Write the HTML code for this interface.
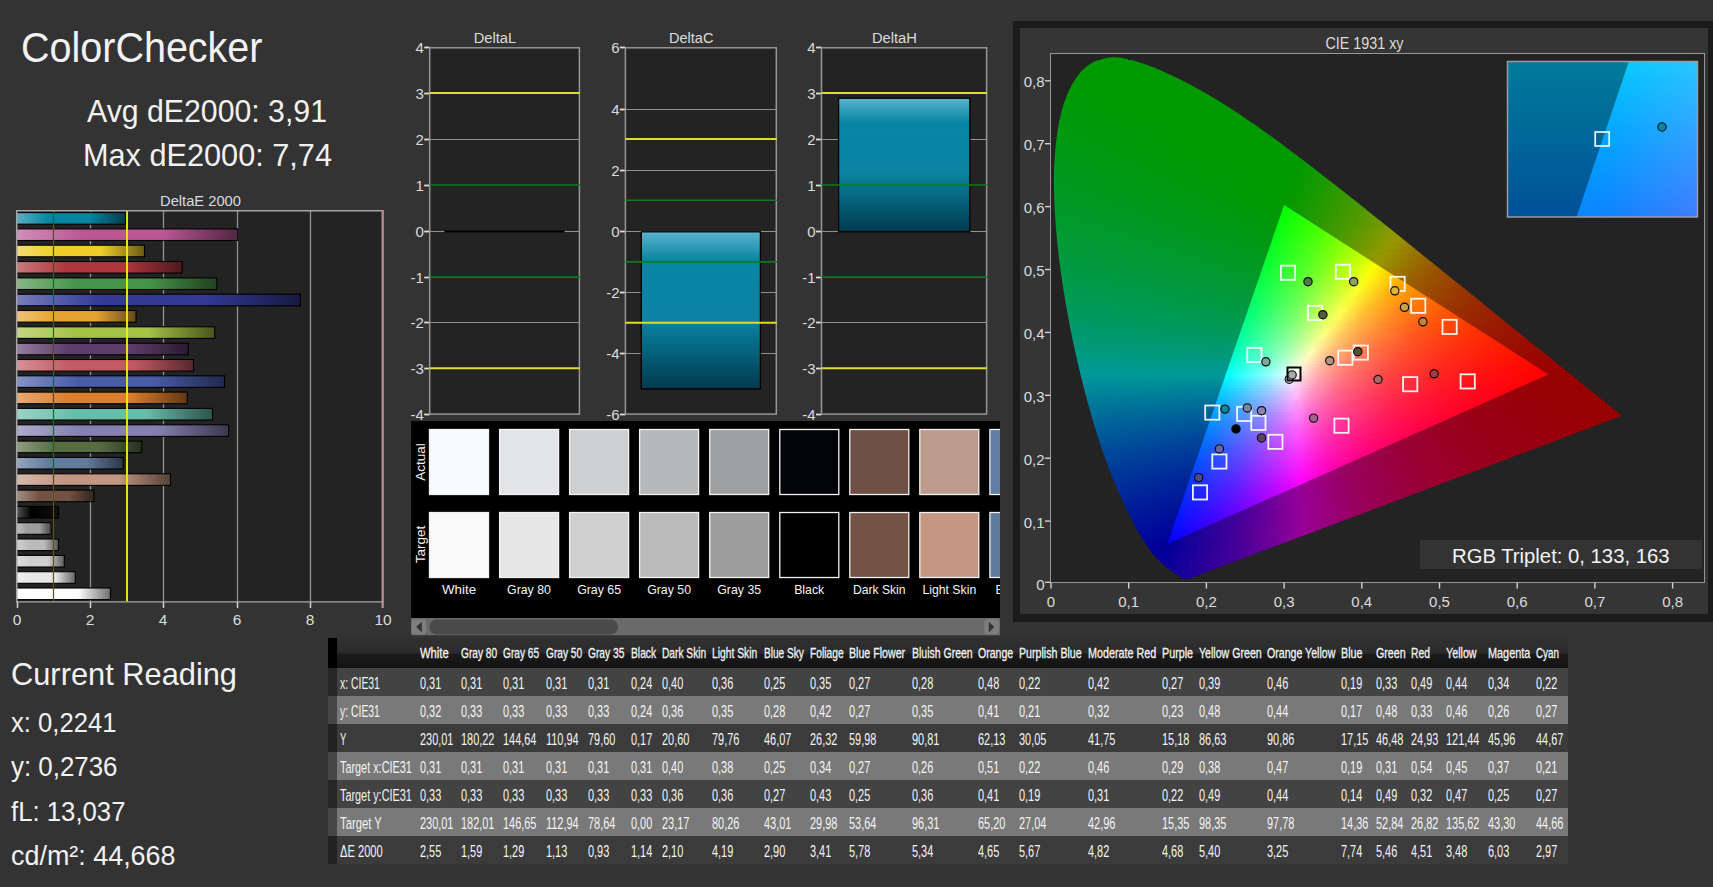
<!DOCTYPE html><html lang="en"><head><meta charset="utf-8"><title>ColorChecker</title><style>
html,body{margin:0;padding:0;background:#333333;}
body{width:1713px;height:887px;overflow:hidden;position:relative;font-family:"Liberation Sans", Arial, sans-serif;color:#f2f2f2;}
#app{position:absolute;left:0;top:0;width:1713px;height:887px;overflow:hidden;background:#333333;}
.t{position:absolute;white-space:nowrap;transform-origin:0 0;line-height:1;}
svg{position:absolute;left:0;top:0;}
svg text{font-family:"Liberation Sans", Arial, sans-serif;}
table.dt{position:absolute;left:328px;top:638px;border-collapse:collapse;table-layout:fixed;font-size:16.7px;color:#f4f4f4;}
table.dt td,table.dt th{padding:0;height:28px;text-align:left;font-weight:normal;overflow:visible;white-space:nowrap;line-height:28px;}
table.dt th{height:30px;line-height:30px;font-size:14.6px;-webkit-text-stroke:.3px #f4f4f4;}
table.dt span{display:inline-block;transform:scaleX(.655);transform-origin:0 50%;white-space:nowrap;position:relative;top:1.8px;}
table.dt th span{top:0;}
table.dt tr.h{background:linear-gradient(#313131 0,#2a2a2a 50%,#1b1b1b 54%,#121212 100%);}
table.dt tr.d{background:#434343;}
table.dt tr.d2{background:#3b3b3b;}
table.dt tr.l{background:#797979;}
table.dt td.rh,table.dt th.rh{box-shadow:inset 9px 0 0 rgba(0,0,0,.42);padding-left:12px;}
table.dt th.rh{box-shadow:inset 9px 0 0 #000;}
</style></head><body><div id="app"><svg width="1713" height="887" viewBox="0 0 1713 887"><rect x="1013" y="21" width="701" height="601" fill="#1b1b1b"/><rect x="1020" y="28" width="688" height="586" fill="#353535"/><rect x="1050.5" y="53.5" width="654" height="529" fill="#232323" stroke="#969696" stroke-width="1"/><g clip-path="url(#cl)" shape-rendering="crispEdges"><rect x="1101.2" y="57" width="26.3" height="3" fill="url(#o0)"/><rect x="1092.0" y="60" width="47.5" height="3" fill="url(#o1)"/><rect x="1086.4" y="63" width="62.9" height="3" fill="url(#o2)"/><rect x="1082.3" y="66" width="74.7" height="3" fill="url(#o3)"/><rect x="1079.1" y="69" width="84.8" height="3" fill="url(#o4)"/><rect x="1076.5" y="72" width="94.0" height="3" fill="url(#o5)"/><rect x="1074.2" y="75" width="102.8" height="3" fill="url(#o6)"/><rect x="1072.2" y="78" width="111.0" height="3" fill="url(#o7)"/><rect x="1070.3" y="81" width="118.8" height="3" fill="url(#o8)"/><rect x="1068.6" y="84" width="126.2" height="3" fill="url(#o9)"/><rect x="1067.1" y="87" width="133.2" height="3" fill="url(#o10)"/><rect x="1065.6" y="90" width="140.1" height="3" fill="url(#o11)"/><rect x="1064.3" y="93" width="146.6" height="3" fill="url(#o12)"/><rect x="1063.1" y="96" width="152.9" height="3" fill="url(#o13)"/><rect x="1061.9" y="99" width="159.0" height="3" fill="url(#o14)"/><rect x="1060.9" y="102" width="164.8" height="3" fill="url(#o15)"/><rect x="1060.0" y="105" width="170.5" height="3" fill="url(#o16)"/><rect x="1059.0" y="108" width="176.2" height="3" fill="url(#o17)"/><rect x="1058.3" y="111" width="181.5" height="3" fill="url(#o18)"/><rect x="1057.6" y="114" width="186.8" height="3" fill="url(#o19)"/><rect x="1056.9" y="117" width="191.9" height="3" fill="url(#o20)"/><rect x="1056.2" y="120" width="197.0" height="3" fill="url(#o21)"/><rect x="1055.7" y="123" width="201.9" height="3" fill="url(#o22)"/><rect x="1055.1" y="126" width="206.7" height="3" fill="url(#o23)"/><rect x="1054.6" y="129" width="211.5" height="3" fill="url(#o24)"/><rect x="1054.2" y="132" width="216.1" height="3" fill="url(#o25)"/><rect x="1053.8" y="135" width="220.6" height="3" fill="url(#o26)"/><rect x="1053.4" y="138" width="225.1" height="3" fill="url(#o27)"/><rect x="1053.0" y="141" width="229.6" height="3" fill="url(#o28)"/><rect x="1052.7" y="144" width="234.0" height="3" fill="url(#o29)"/><rect x="1052.4" y="147" width="238.3" height="3" fill="url(#o30)"/><rect x="1052.2" y="150" width="242.5" height="3" fill="url(#o31)"/><rect x="1051.9" y="153" width="246.8" height="3" fill="url(#o32)"/><rect x="1051.7" y="156" width="251.0" height="3" fill="url(#o33)"/><rect x="1051.5" y="159" width="255.0" height="3" fill="url(#o34)"/><rect x="1051.4" y="162" width="259.1" height="3" fill="url(#o35)"/><rect x="1051.2" y="165" width="263.2" height="3" fill="url(#o36)"/><rect x="1051.1" y="168" width="267.2" height="3" fill="url(#o37)"/><rect x="1051.0" y="171" width="271.2" height="3" fill="url(#o38)"/><rect x="1051.0" y="174" width="275.1" height="3" fill="url(#o39)"/><rect x="1050.9" y="177" width="279.0" height="3" fill="url(#o40)"/><rect x="1050.9" y="180" width="282.9" height="3" fill="url(#o41)"/><rect x="1050.9" y="183" width="286.7" height="3" fill="url(#o42)"/><rect x="1050.9" y="186" width="290.5" height="3" fill="url(#o43)"/><rect x="1051.0" y="189" width="294.2" height="3" fill="url(#o44)"/><rect x="1051.1" y="192" width="298.0" height="3" fill="url(#o45)"/><rect x="1051.1" y="195" width="301.7" height="3" fill="url(#o46)"/><rect x="1051.2" y="198" width="305.4" height="3" fill="url(#o47)"/><rect x="1051.4" y="201" width="309.0" height="3" fill="url(#o48)"/><rect x="1051.5" y="204" width="312.6" height="3" fill="url(#o49)"/><rect x="1051.6" y="207" width="316.2" height="3" fill="url(#o50)"/><rect x="1051.8" y="210" width="319.8" height="3" fill="url(#o51)"/><rect x="1052.0" y="213" width="323.4" height="3" fill="url(#o52)"/><rect x="1052.2" y="216" width="327.0" height="3" fill="url(#o53)"/><rect x="1052.4" y="219" width="330.5" height="3" fill="url(#o54)"/><rect x="1052.6" y="222" width="334.0" height="3" fill="url(#o55)"/><rect x="1052.8" y="225" width="337.6" height="3" fill="url(#o56)"/><rect x="1053.1" y="228" width="341.1" height="3" fill="url(#o57)"/><rect x="1053.3" y="231" width="344.5" height="3" fill="url(#o58)"/><rect x="1053.6" y="234" width="348.0" height="3" fill="url(#o59)"/><rect x="1053.9" y="237" width="351.5" height="3" fill="url(#o60)"/><rect x="1054.2" y="240" width="354.9" height="3" fill="url(#o61)"/><rect x="1054.5" y="243" width="358.3" height="3" fill="url(#o62)"/><rect x="1054.8" y="246" width="361.7" height="3" fill="url(#o63)"/><rect x="1055.1" y="249" width="365.1" height="3" fill="url(#o64)"/><rect x="1055.5" y="252" width="368.5" height="3" fill="url(#o65)"/><rect x="1055.8" y="255" width="371.9" height="3" fill="url(#o66)"/><rect x="1056.2" y="258" width="375.2" height="3" fill="url(#o67)"/><rect x="1056.6" y="261" width="378.5" height="3" fill="url(#o68)"/><rect x="1057.0" y="264" width="381.8" height="3" fill="url(#o69)"/><rect x="1057.4" y="267" width="385.2" height="3" fill="url(#o70)"/><rect x="1057.8" y="270" width="388.5" height="3" fill="url(#o71)"/><rect x="1058.2" y="273" width="391.8" height="3" fill="url(#o72)"/><rect x="1058.6" y="276" width="395.0" height="3" fill="url(#o73)"/><rect x="1059.1" y="279" width="398.3" height="3" fill="url(#o74)"/><rect x="1059.5" y="282" width="401.5" height="3" fill="url(#o75)"/><rect x="1060.0" y="285" width="404.8" height="3" fill="url(#o76)"/><rect x="1060.4" y="288" width="408.0" height="3" fill="url(#o77)"/><rect x="1060.9" y="291" width="411.3" height="3" fill="url(#o78)"/><rect x="1061.4" y="294" width="414.5" height="3" fill="url(#o79)"/><rect x="1061.9" y="297" width="417.7" height="3" fill="url(#o80)"/><rect x="1062.4" y="300" width="420.9" height="3" fill="url(#o81)"/><rect x="1062.9" y="303" width="424.1" height="3" fill="url(#o82)"/><rect x="1063.5" y="306" width="427.4" height="3" fill="url(#o83)"/><rect x="1064.0" y="309" width="430.5" height="3" fill="url(#o84)"/><rect x="1064.5" y="312" width="433.7" height="3" fill="url(#o85)"/><rect x="1065.1" y="315" width="436.9" height="3" fill="url(#o86)"/><rect x="1065.6" y="318" width="440.0" height="3" fill="url(#o87)"/><rect x="1066.2" y="321" width="443.2" height="3" fill="url(#o88)"/><rect x="1066.8" y="324" width="446.3" height="3" fill="url(#o89)"/><rect x="1067.4" y="327" width="449.4" height="3" fill="url(#o90)"/><rect x="1068.0" y="330" width="452.5" height="3" fill="url(#o91)"/><rect x="1068.6" y="333" width="455.6" height="3" fill="url(#o92)"/><rect x="1069.2" y="336" width="458.7" height="3" fill="url(#o93)"/><rect x="1069.8" y="339" width="461.8" height="3" fill="url(#o94)"/><rect x="1070.4" y="342" width="464.9" height="3" fill="url(#o95)"/><rect x="1071.1" y="345" width="467.9" height="3" fill="url(#o96)"/><rect x="1071.7" y="348" width="471.0" height="3" fill="url(#o97)"/><rect x="1072.4" y="351" width="474.1" height="3" fill="url(#o98)"/><rect x="1073.1" y="354" width="477.1" height="3" fill="url(#o99)"/><rect x="1073.8" y="357" width="480.1" height="3" fill="url(#o100)"/><rect x="1074.5" y="360" width="483.2" height="3" fill="url(#o101)"/><rect x="1075.2" y="363" width="486.2" height="3" fill="url(#o102)"/><rect x="1075.9" y="366" width="489.2" height="3" fill="url(#o103)"/><rect x="1076.6" y="369" width="492.3" height="3" fill="url(#o104)"/><rect x="1077.3" y="372" width="495.3" height="3" fill="url(#o105)"/><rect x="1078.1" y="375" width="498.2" height="3" fill="url(#o106)"/><rect x="1078.8" y="378" width="501.2" height="3" fill="url(#o107)"/><rect x="1079.5" y="381" width="504.1" height="3" fill="url(#o108)"/><rect x="1080.3" y="384" width="507.1" height="3" fill="url(#o109)"/><rect x="1081.1" y="387" width="510.0" height="3" fill="url(#o110)"/><rect x="1081.8" y="390" width="513.0" height="3" fill="url(#o111)"/><rect x="1082.6" y="393" width="515.9" height="3" fill="url(#o112)"/><rect x="1083.4" y="396" width="518.9" height="3" fill="url(#o113)"/><rect x="1084.2" y="399" width="521.7" height="3" fill="url(#o114)"/><rect x="1085.0" y="402" width="524.6" height="3" fill="url(#o115)"/><rect x="1085.8" y="405" width="527.5" height="3" fill="url(#o116)"/><rect x="1086.7" y="408" width="530.5" height="3" fill="url(#o117)"/><rect x="1087.5" y="411" width="533.3" height="3" fill="url(#o118)"/><rect x="1088.4" y="414" width="536.2" height="3" fill="url(#o119)"/><rect x="1089.3" y="417" width="528.3" height="3" fill="url(#o120)"/><rect x="1090.1" y="420" width="519.5" height="3" fill="url(#o121)"/><rect x="1091.0" y="423" width="510.6" height="3" fill="url(#o122)"/><rect x="1091.9" y="426" width="501.7" height="3" fill="url(#o123)"/><rect x="1092.9" y="429" width="492.8" height="3" fill="url(#o124)"/><rect x="1093.8" y="432" width="484.0" height="3" fill="url(#o125)"/><rect x="1094.7" y="435" width="475.0" height="3" fill="url(#o126)"/><rect x="1095.7" y="438" width="466.1" height="3" fill="url(#o127)"/><rect x="1096.7" y="441" width="457.2" height="3" fill="url(#o128)"/><rect x="1097.7" y="444" width="448.2" height="3" fill="url(#o129)"/><rect x="1098.7" y="447" width="439.2" height="3" fill="url(#o130)"/><rect x="1099.7" y="450" width="430.2" height="3" fill="url(#o131)"/><rect x="1100.7" y="453" width="421.3" height="3" fill="url(#o132)"/><rect x="1101.8" y="456" width="412.2" height="3" fill="url(#o133)"/><rect x="1102.9" y="459" width="403.2" height="3" fill="url(#o134)"/><rect x="1104.0" y="462" width="394.1" height="3" fill="url(#o135)"/><rect x="1105.1" y="465" width="385.0" height="3" fill="url(#o136)"/><rect x="1106.2" y="468" width="375.9" height="3" fill="url(#o137)"/><rect x="1107.4" y="471" width="366.7" height="3" fill="url(#o138)"/><rect x="1108.6" y="474" width="357.6" height="3" fill="url(#o139)"/><rect x="1109.9" y="477" width="348.3" height="3" fill="url(#o140)"/><rect x="1111.1" y="480" width="339.1" height="3" fill="url(#o141)"/><rect x="1112.4" y="483" width="329.9" height="3" fill="url(#o142)"/><rect x="1113.7" y="486" width="320.6" height="3" fill="url(#o143)"/><rect x="1115.0" y="489" width="311.3" height="3" fill="url(#o144)"/><rect x="1116.4" y="492" width="302.0" height="3" fill="url(#o145)"/><rect x="1117.7" y="495" width="292.7" height="3" fill="url(#o146)"/><rect x="1119.0" y="498" width="283.4" height="3" fill="url(#o147)"/><rect x="1120.4" y="501" width="274.1" height="3" fill="url(#o148)"/><rect x="1121.8" y="504" width="264.7" height="3" fill="url(#o149)"/><rect x="1123.2" y="507" width="255.4" height="3" fill="url(#o150)"/><rect x="1124.6" y="510" width="246.0" height="3" fill="url(#o151)"/><rect x="1126.1" y="513" width="236.5" height="3" fill="url(#o152)"/><rect x="1127.6" y="516" width="227.1" height="3" fill="url(#o153)"/><rect x="1129.1" y="519" width="217.6" height="3" fill="url(#o154)"/><rect x="1130.6" y="522" width="208.0" height="3" fill="url(#o155)"/><rect x="1132.2" y="525" width="198.5" height="3" fill="url(#o156)"/><rect x="1133.9" y="528" width="188.9" height="3" fill="url(#o157)"/><rect x="1135.5" y="531" width="179.2" height="3" fill="url(#o158)"/><rect x="1137.3" y="534" width="169.5" height="3" fill="url(#o159)"/><rect x="1139.2" y="537" width="159.7" height="3" fill="url(#o160)"/><rect x="1141.1" y="540" width="149.8" height="3" fill="url(#o161)"/><rect x="1143.1" y="543" width="139.8" height="3" fill="url(#o162)"/><rect x="1145.1" y="546" width="129.8" height="3" fill="url(#o163)"/><rect x="1147.3" y="549" width="119.7" height="3" fill="url(#o164)"/><rect x="1149.7" y="552" width="109.3" height="3" fill="url(#o165)"/><rect x="1152.2" y="555" width="98.8" height="3" fill="url(#o166)"/><rect x="1154.9" y="558" width="88.2" height="3" fill="url(#o167)"/><rect x="1158.0" y="561" width="77.1" height="3" fill="url(#o168)"/><rect x="1161.4" y="564" width="65.7" height="3" fill="url(#o169)"/><rect x="1165.2" y="567" width="54.0" height="3" fill="url(#o170)"/><rect x="1169.3" y="570" width="41.9" height="3" fill="url(#o171)"/><rect x="1173.6" y="573" width="29.6" height="3" fill="url(#o172)"/><rect x="1177.7" y="576" width="17.5" height="3" fill="url(#o173)"/></g><g clip-path="url(#ct)" shape-rendering="crispEdges"><rect x="1280.6" y="205" width="8.7" height="3" fill="url(#i0)"/><rect x="1279.6" y="208" width="14.4" height="3" fill="url(#i1)"/><rect x="1278.6" y="211" width="20.1" height="3" fill="url(#i2)"/><rect x="1277.5" y="214" width="25.8" height="3" fill="url(#i3)"/><rect x="1276.5" y="217" width="31.5" height="3" fill="url(#i4)"/><rect x="1275.5" y="220" width="37.2" height="3" fill="url(#i5)"/><rect x="1274.4" y="223" width="43.0" height="3" fill="url(#i6)"/><rect x="1273.4" y="226" width="48.7" height="3" fill="url(#i7)"/><rect x="1272.4" y="229" width="54.4" height="3" fill="url(#i8)"/><rect x="1271.3" y="232" width="60.1" height="3" fill="url(#i9)"/><rect x="1270.3" y="235" width="65.8" height="3" fill="url(#i10)"/><rect x="1269.3" y="238" width="71.5" height="3" fill="url(#i11)"/><rect x="1268.2" y="241" width="77.2" height="3" fill="url(#i12)"/><rect x="1267.2" y="244" width="83.0" height="3" fill="url(#i13)"/><rect x="1266.2" y="247" width="88.7" height="3" fill="url(#i14)"/><rect x="1265.1" y="250" width="94.4" height="3" fill="url(#i15)"/><rect x="1264.1" y="253" width="100.1" height="3" fill="url(#i16)"/><rect x="1263.1" y="256" width="105.8" height="3" fill="url(#i17)"/><rect x="1262.0" y="259" width="111.5" height="3" fill="url(#i18)"/><rect x="1261.0" y="262" width="117.2" height="3" fill="url(#i19)"/><rect x="1260.0" y="265" width="123.0" height="3" fill="url(#i20)"/><rect x="1258.9" y="268" width="128.7" height="3" fill="url(#i21)"/><rect x="1257.9" y="271" width="134.4" height="3" fill="url(#i22)"/><rect x="1256.9" y="274" width="140.1" height="3" fill="url(#i23)"/><rect x="1255.8" y="277" width="145.8" height="3" fill="url(#i24)"/><rect x="1254.8" y="280" width="151.5" height="3" fill="url(#i25)"/><rect x="1253.8" y="283" width="157.2" height="3" fill="url(#i26)"/><rect x="1252.7" y="286" width="163.0" height="3" fill="url(#i27)"/><rect x="1251.7" y="289" width="168.7" height="3" fill="url(#i28)"/><rect x="1250.7" y="292" width="174.4" height="3" fill="url(#i29)"/><rect x="1249.6" y="295" width="180.1" height="3" fill="url(#i30)"/><rect x="1248.6" y="298" width="185.8" height="3" fill="url(#i31)"/><rect x="1247.6" y="301" width="191.5" height="3" fill="url(#i32)"/><rect x="1246.5" y="304" width="197.2" height="3" fill="url(#i33)"/><rect x="1245.5" y="307" width="203.0" height="3" fill="url(#i34)"/><rect x="1244.5" y="310" width="208.7" height="3" fill="url(#i35)"/><rect x="1243.4" y="313" width="214.4" height="3" fill="url(#i36)"/><rect x="1242.4" y="316" width="220.1" height="3" fill="url(#i37)"/><rect x="1241.4" y="319" width="225.8" height="3" fill="url(#i38)"/><rect x="1240.3" y="322" width="231.5" height="3" fill="url(#i39)"/><rect x="1239.3" y="325" width="237.2" height="3" fill="url(#i40)"/><rect x="1238.3" y="328" width="243.0" height="3" fill="url(#i41)"/><rect x="1237.2" y="331" width="248.7" height="3" fill="url(#i42)"/><rect x="1236.2" y="334" width="254.4" height="3" fill="url(#i43)"/><rect x="1235.2" y="337" width="260.1" height="3" fill="url(#i44)"/><rect x="1234.1" y="340" width="265.8" height="3" fill="url(#i45)"/><rect x="1233.1" y="343" width="271.5" height="3" fill="url(#i46)"/><rect x="1232.1" y="346" width="277.2" height="3" fill="url(#i47)"/><rect x="1231.0" y="349" width="283.0" height="3" fill="url(#i48)"/><rect x="1230.0" y="352" width="288.7" height="3" fill="url(#i49)"/><rect x="1229.0" y="355" width="294.4" height="3" fill="url(#i50)"/><rect x="1228.0" y="358" width="300.1" height="3" fill="url(#i51)"/><rect x="1226.9" y="361" width="305.8" height="3" fill="url(#i52)"/><rect x="1225.9" y="364" width="311.5" height="3" fill="url(#i53)"/><rect x="1224.9" y="367" width="317.2" height="3" fill="url(#i54)"/><rect x="1223.8" y="370" width="323.0" height="3" fill="url(#i55)"/><rect x="1222.8" y="373" width="328.2" height="3" fill="url(#i56)"/><rect x="1221.8" y="376" width="322.5" height="3" fill="url(#i57)"/><rect x="1220.7" y="379" width="316.8" height="3" fill="url(#i58)"/><rect x="1219.7" y="382" width="311.1" height="3" fill="url(#i59)"/><rect x="1218.7" y="385" width="305.4" height="3" fill="url(#i60)"/><rect x="1217.6" y="388" width="299.7" height="3" fill="url(#i61)"/><rect x="1216.6" y="391" width="294.0" height="3" fill="url(#i62)"/><rect x="1215.6" y="394" width="288.2" height="3" fill="url(#i63)"/><rect x="1214.5" y="397" width="282.5" height="3" fill="url(#i64)"/><rect x="1213.5" y="400" width="276.8" height="3" fill="url(#i65)"/><rect x="1212.5" y="403" width="271.1" height="3" fill="url(#i66)"/><rect x="1211.4" y="406" width="265.4" height="3" fill="url(#i67)"/><rect x="1210.4" y="409" width="259.7" height="3" fill="url(#i68)"/><rect x="1209.4" y="412" width="254.0" height="3" fill="url(#i69)"/><rect x="1208.3" y="415" width="248.2" height="3" fill="url(#i70)"/><rect x="1207.3" y="418" width="242.5" height="3" fill="url(#i71)"/><rect x="1206.3" y="421" width="236.8" height="3" fill="url(#i72)"/><rect x="1205.2" y="424" width="231.1" height="3" fill="url(#i73)"/><rect x="1204.2" y="427" width="225.4" height="3" fill="url(#i74)"/><rect x="1203.2" y="430" width="219.7" height="3" fill="url(#i75)"/><rect x="1202.1" y="433" width="214.0" height="3" fill="url(#i76)"/><rect x="1201.1" y="436" width="208.2" height="3" fill="url(#i77)"/><rect x="1200.1" y="439" width="202.5" height="3" fill="url(#i78)"/><rect x="1199.0" y="442" width="196.8" height="3" fill="url(#i79)"/><rect x="1198.0" y="445" width="191.1" height="3" fill="url(#i80)"/><rect x="1197.0" y="448" width="185.4" height="3" fill="url(#i81)"/><rect x="1195.9" y="451" width="179.7" height="3" fill="url(#i82)"/><rect x="1194.9" y="454" width="174.0" height="3" fill="url(#i83)"/><rect x="1193.9" y="457" width="168.2" height="3" fill="url(#i84)"/><rect x="1192.8" y="460" width="162.5" height="3" fill="url(#i85)"/><rect x="1191.8" y="463" width="156.8" height="3" fill="url(#i86)"/><rect x="1190.8" y="466" width="151.1" height="3" fill="url(#i87)"/><rect x="1189.7" y="469" width="145.4" height="3" fill="url(#i88)"/><rect x="1188.7" y="472" width="139.7" height="3" fill="url(#i89)"/><rect x="1187.7" y="475" width="134.0" height="3" fill="url(#i90)"/><rect x="1186.6" y="478" width="128.2" height="3" fill="url(#i91)"/><rect x="1185.6" y="481" width="122.5" height="3" fill="url(#i92)"/><rect x="1184.6" y="484" width="116.8" height="3" fill="url(#i93)"/><rect x="1183.5" y="487" width="111.1" height="3" fill="url(#i94)"/><rect x="1182.5" y="490" width="105.4" height="3" fill="url(#i95)"/><rect x="1181.5" y="493" width="99.7" height="3" fill="url(#i96)"/><rect x="1180.4" y="496" width="94.0" height="3" fill="url(#i97)"/><rect x="1179.4" y="499" width="88.2" height="3" fill="url(#i98)"/><rect x="1178.4" y="502" width="82.5" height="3" fill="url(#i99)"/><rect x="1177.3" y="505" width="76.8" height="3" fill="url(#i100)"/><rect x="1176.3" y="508" width="71.1" height="3" fill="url(#i101)"/><rect x="1175.3" y="511" width="65.4" height="3" fill="url(#i102)"/><rect x="1174.3" y="514" width="59.7" height="3" fill="url(#i103)"/><rect x="1173.2" y="517" width="54.0" height="3" fill="url(#i104)"/><rect x="1172.2" y="520" width="48.2" height="3" fill="url(#i105)"/><rect x="1171.2" y="523" width="42.5" height="3" fill="url(#i106)"/><rect x="1170.1" y="526" width="36.8" height="3" fill="url(#i107)"/><rect x="1169.1" y="529" width="31.1" height="3" fill="url(#i108)"/><rect x="1168.1" y="532" width="25.4" height="3" fill="url(#i109)"/><rect x="1167.0" y="535" width="19.7" height="3" fill="url(#i110)"/><rect x="1166.0" y="538" width="14.0" height="3" fill="url(#i111)"/><rect x="1165.0" y="541" width="8.2" height="3" fill="url(#i112)"/></g><line x1="1051.0" y1="582.5" x2="1051.0" y2="588.5" stroke="#d2d2d2" stroke-width="1.4"/><text x="1051.0" y="606.5" font-size="15" fill="#dcdcdc" text-anchor="middle">0</text><line x1="1045" y1="582.3" x2="1050.5" y2="582.3" stroke="#d2d2d2" stroke-width="1.4"/><text x="1044.5" y="590.4" font-size="15" fill="#dcdcdc" text-anchor="end">0</text><line x1="1128.7" y1="582.5" x2="1128.7" y2="588.5" stroke="#d2d2d2" stroke-width="1.4"/><text x="1128.7" y="606.5" font-size="15" fill="#dcdcdc" text-anchor="middle">0,1</text><line x1="1045" y1="521.1" x2="1050.5" y2="521.1" stroke="#d2d2d2" stroke-width="1.4"/><text x="1044.5" y="527.7" font-size="15" fill="#dcdcdc" text-anchor="end">0,1</text><line x1="1206.4" y1="582.5" x2="1206.4" y2="588.5" stroke="#d2d2d2" stroke-width="1.4"/><text x="1206.4" y="606.5" font-size="15" fill="#dcdcdc" text-anchor="middle">0,2</text><line x1="1045" y1="458.2" x2="1050.5" y2="458.2" stroke="#d2d2d2" stroke-width="1.4"/><text x="1044.5" y="464.8" font-size="15" fill="#dcdcdc" text-anchor="end">0,2</text><line x1="1284.1" y1="582.5" x2="1284.1" y2="588.5" stroke="#d2d2d2" stroke-width="1.4"/><text x="1284.1" y="606.5" font-size="15" fill="#dcdcdc" text-anchor="middle">0,3</text><line x1="1045" y1="395.3" x2="1050.5" y2="395.3" stroke="#d2d2d2" stroke-width="1.4"/><text x="1044.5" y="401.9" font-size="15" fill="#dcdcdc" text-anchor="end">0,3</text><line x1="1361.8" y1="582.5" x2="1361.8" y2="588.5" stroke="#d2d2d2" stroke-width="1.4"/><text x="1361.8" y="606.5" font-size="15" fill="#dcdcdc" text-anchor="middle">0,4</text><line x1="1045" y1="332.4" x2="1050.5" y2="332.4" stroke="#d2d2d2" stroke-width="1.4"/><text x="1044.5" y="339.0" font-size="15" fill="#dcdcdc" text-anchor="end">0,4</text><line x1="1439.5" y1="582.5" x2="1439.5" y2="588.5" stroke="#d2d2d2" stroke-width="1.4"/><text x="1439.5" y="606.5" font-size="15" fill="#dcdcdc" text-anchor="middle">0,5</text><line x1="1045" y1="269.5" x2="1050.5" y2="269.5" stroke="#d2d2d2" stroke-width="1.4"/><text x="1044.5" y="276.1" font-size="15" fill="#dcdcdc" text-anchor="end">0,5</text><line x1="1517.2" y1="582.5" x2="1517.2" y2="588.5" stroke="#d2d2d2" stroke-width="1.4"/><text x="1517.2" y="606.5" font-size="15" fill="#dcdcdc" text-anchor="middle">0,6</text><line x1="1045" y1="206.6" x2="1050.5" y2="206.6" stroke="#d2d2d2" stroke-width="1.4"/><text x="1044.5" y="213.2" font-size="15" fill="#dcdcdc" text-anchor="end">0,6</text><line x1="1594.9" y1="582.5" x2="1594.9" y2="588.5" stroke="#d2d2d2" stroke-width="1.4"/><text x="1594.9" y="606.5" font-size="15" fill="#dcdcdc" text-anchor="middle">0,7</text><line x1="1045" y1="143.7" x2="1050.5" y2="143.7" stroke="#d2d2d2" stroke-width="1.4"/><text x="1044.5" y="150.3" font-size="15" fill="#dcdcdc" text-anchor="end">0,7</text><line x1="1672.6" y1="582.5" x2="1672.6" y2="588.5" stroke="#d2d2d2" stroke-width="1.4"/><text x="1672.6" y="606.5" font-size="15" fill="#dcdcdc" text-anchor="middle">0,8</text><line x1="1045" y1="80.8" x2="1050.5" y2="80.8" stroke="#d2d2d2" stroke-width="1.4"/><text x="1044.5" y="87.4" font-size="15" fill="#dcdcdc" text-anchor="end">0,8</text><text x="1325.5" y="49.3" font-size="15.6" fill="#dcdcdc" textLength="78" lengthAdjust="spacingAndGlyphs">CIE 1931 xy</text><rect x="1280.9" y="265.6" width="14.2" height="14.2" fill="none" stroke="#fff" stroke-opacity=".92" stroke-width="1.8"/><rect x="1335.8" y="264.7" width="14.2" height="14.2" fill="none" stroke="#fff" stroke-opacity=".92" stroke-width="1.8"/><rect x="1390.5" y="276.8" width="14.2" height="14.2" fill="none" stroke="#fff" stroke-opacity=".92" stroke-width="1.8"/><rect x="1411.1" y="298.7" width="14.2" height="14.2" fill="none" stroke="#fff" stroke-opacity=".92" stroke-width="1.8"/><rect x="1442.5" y="319.8" width="14.2" height="14.2" fill="none" stroke="#fff" stroke-opacity=".92" stroke-width="1.8"/><rect x="1307.8" y="305.8" width="14.2" height="14.2" fill="none" stroke="#fff" stroke-opacity=".92" stroke-width="1.8"/><rect x="1247.3" y="347.8" width="14.2" height="14.2" fill="none" stroke="#fff" stroke-opacity=".92" stroke-width="1.8"/><rect x="1338.2" y="350.6" width="14.2" height="14.2" fill="none" stroke="#fff" stroke-opacity=".92" stroke-width="1.8"/><rect x="1353.7" y="345.5" width="14.2" height="14.2" fill="none" stroke="#fff" stroke-opacity=".92" stroke-width="1.8"/><rect x="1403.1" y="377.1" width="14.2" height="14.2" fill="none" stroke="#fff" stroke-opacity=".92" stroke-width="1.8"/><rect x="1460.6" y="374.3" width="14.2" height="14.2" fill="none" stroke="#fff" stroke-opacity=".92" stroke-width="1.8"/><rect x="1205.2" y="405.5" width="14.2" height="14.2" fill="none" stroke="#fff" stroke-opacity=".92" stroke-width="1.8"/><rect x="1237.1" y="406.8" width="14.2" height="14.2" fill="none" stroke="#fff" stroke-opacity=".92" stroke-width="1.8"/><rect x="1251.3" y="415.8" width="14.2" height="14.2" fill="none" stroke="#fff" stroke-opacity=".92" stroke-width="1.8"/><rect x="1268.3" y="434.7" width="14.2" height="14.2" fill="none" stroke="#fff" stroke-opacity=".92" stroke-width="1.8"/><rect x="1334.4" y="418.6" width="14.2" height="14.2" fill="none" stroke="#fff" stroke-opacity=".92" stroke-width="1.8"/><rect x="1212.3" y="454.4" width="14.2" height="14.2" fill="none" stroke="#fff" stroke-opacity=".92" stroke-width="1.8"/><rect x="1192.9" y="485.3" width="14.2" height="14.2" fill="none" stroke="#fff" stroke-opacity=".92" stroke-width="1.8"/><rect x="1287.5" y="367.5" width="13" height="13" fill="none" stroke="#000" stroke-width="2"/><circle cx="1308.0" cy="281.7" r="4.15" fill="#4e7a4c" stroke="#0a0a0a" stroke-width="1.15"/><circle cx="1353.7" cy="281.7" r="4.15" fill="#8fa553" stroke="#0a0a0a" stroke-width="1.15"/><circle cx="1394.8" cy="290.8" r="4.15" fill="#d9b83a" stroke="#0a0a0a" stroke-width="1.15"/><circle cx="1404.5" cy="307.3" r="4.15" fill="#cfa043" stroke="#0a0a0a" stroke-width="1.15"/><circle cx="1422.9" cy="321.8" r="4.15" fill="#c4803e" stroke="#0a0a0a" stroke-width="1.15"/><circle cx="1322.9" cy="314.7" r="4.15" fill="#4f5f3d" stroke="#0a0a0a" stroke-width="1.15"/><circle cx="1265.9" cy="361.8" r="4.15" fill="#79a99b" stroke="#0a0a0a" stroke-width="1.15"/><circle cx="1289.3" cy="379.2" r="4.15" fill="none" stroke="#0a0a0a" stroke-width="1.15"/><circle cx="1292.1" cy="374.9" r="4.15" fill="#a9a9a9" stroke="#0a0a0a" stroke-width="1.15"/><circle cx="1329.8" cy="360.7" r="4.15" fill="#b09587" stroke="#0a0a0a" stroke-width="1.15"/><circle cx="1357.8" cy="351.7" r="4.15" fill="#5f4a40" stroke="#0a0a0a" stroke-width="1.15"/><circle cx="1378.0" cy="379.5" r="4.15" fill="#b0646b" stroke="#0a0a0a" stroke-width="1.15"/><circle cx="1434.1" cy="373.8" r="4.15" fill="#a33c42" stroke="#0a0a0a" stroke-width="1.15"/><circle cx="1224.9" cy="409.1" r="4.15" fill="#06859f" stroke="#0a0a0a" stroke-width="1.15"/><circle cx="1247.3" cy="407.9" r="4.15" fill="#7587a0" stroke="#0a0a0a" stroke-width="1.15"/><circle cx="1261.5" cy="410.7" r="4.15" fill="#8a86ab" stroke="#0a0a0a" stroke-width="1.15"/><circle cx="1236.0" cy="428.9" r="4.15" fill="#000" stroke="#0a0a0a" stroke-width="1.15"/><circle cx="1261.5" cy="437.9" r="4.15" fill="#5a4264" stroke="#0a0a0a" stroke-width="1.15"/><circle cx="1313.6" cy="418.1" r="4.15" fill="#a95f8d" stroke="#0a0a0a" stroke-width="1.15"/><circle cx="1219.4" cy="448.9" r="4.15" fill="#66699c" stroke="#0a0a0a" stroke-width="1.15"/><circle cx="1198.7" cy="477.6" r="4.15" fill="#4a4c86" stroke="#0a0a0a" stroke-width="1.15"/><g shape-rendering="crispEdges"><rect x="1507.5" y="61.0" width="190.0" height="4.0" fill="url(#n0)"/><rect x="1507.5" y="65.0" width="190.0" height="4.0" fill="url(#n1)"/><rect x="1507.5" y="69.0" width="190.0" height="4.0" fill="url(#n2)"/><rect x="1507.5" y="73.0" width="190.0" height="4.0" fill="url(#n3)"/><rect x="1507.5" y="77.0" width="190.0" height="4.0" fill="url(#n4)"/><rect x="1507.5" y="81.0" width="190.0" height="4.0" fill="url(#n5)"/><rect x="1507.5" y="85.0" width="190.0" height="4.0" fill="url(#n6)"/><rect x="1507.5" y="89.0" width="190.0" height="4.0" fill="url(#n7)"/><rect x="1507.5" y="93.0" width="190.0" height="4.0" fill="url(#n8)"/><rect x="1507.5" y="97.0" width="190.0" height="4.0" fill="url(#n9)"/><rect x="1507.5" y="101.0" width="190.0" height="4.0" fill="url(#n10)"/><rect x="1507.5" y="105.0" width="190.0" height="4.0" fill="url(#n11)"/><rect x="1507.5" y="109.0" width="190.0" height="4.0" fill="url(#n12)"/><rect x="1507.5" y="113.0" width="190.0" height="4.0" fill="url(#n13)"/><rect x="1507.5" y="117.0" width="190.0" height="4.0" fill="url(#n14)"/><rect x="1507.5" y="121.0" width="190.0" height="4.0" fill="url(#n15)"/><rect x="1507.5" y="125.0" width="190.0" height="4.0" fill="url(#n16)"/><rect x="1507.5" y="129.0" width="190.0" height="4.0" fill="url(#n17)"/><rect x="1507.5" y="133.0" width="190.0" height="4.0" fill="url(#n18)"/><rect x="1507.5" y="137.0" width="190.0" height="4.0" fill="url(#n19)"/><rect x="1507.5" y="141.0" width="190.0" height="4.0" fill="url(#n20)"/><rect x="1507.5" y="145.0" width="190.0" height="4.0" fill="url(#n21)"/><rect x="1507.5" y="149.0" width="190.0" height="4.0" fill="url(#n22)"/><rect x="1507.5" y="153.0" width="190.0" height="4.0" fill="url(#n23)"/><rect x="1507.5" y="157.0" width="190.0" height="4.0" fill="url(#n24)"/><rect x="1507.5" y="161.0" width="190.0" height="4.0" fill="url(#n25)"/><rect x="1507.5" y="165.0" width="190.0" height="4.0" fill="url(#n26)"/><rect x="1507.5" y="169.0" width="190.0" height="4.0" fill="url(#n27)"/><rect x="1507.5" y="173.0" width="190.0" height="4.0" fill="url(#n28)"/><rect x="1507.5" y="177.0" width="190.0" height="4.0" fill="url(#n29)"/><rect x="1507.5" y="181.0" width="190.0" height="4.0" fill="url(#n30)"/><rect x="1507.5" y="185.0" width="190.0" height="4.0" fill="url(#n31)"/><rect x="1507.5" y="189.0" width="190.0" height="4.0" fill="url(#n32)"/><rect x="1507.5" y="193.0" width="190.0" height="4.0" fill="url(#n33)"/><rect x="1507.5" y="197.0" width="190.0" height="4.0" fill="url(#n34)"/><rect x="1507.5" y="201.0" width="190.0" height="4.0" fill="url(#n35)"/><rect x="1507.5" y="205.0" width="190.0" height="4.0" fill="url(#n36)"/><rect x="1507.5" y="209.0" width="190.0" height="4.0" fill="url(#n37)"/><rect x="1507.5" y="213.0" width="190.0" height="4.0" fill="url(#n38)"/></g><path d="M1507.5,61.5 L1628.8,61.5 L1576.6,217.0 L1507.5,217.0 Z" fill="url(#insL)"/><rect x="1507.5" y="61.5" width="190.0" height="155.5" fill="none" stroke="#9c9ca4" stroke-width="1.5"/><rect x="1595.2" y="132" width="14" height="14" fill="none" stroke="#fff" stroke-opacity=".92" stroke-width="1.7"/><circle cx="1662" cy="127" r="4.2" fill="#0a8596" stroke="#0a0a2a" stroke-width="1.1"/><rect x="1420" y="540" width="282" height="29" fill="#333"/><text x="1452" y="562.7" font-size="20" fill="#f4f4f4" textLength="217.5" lengthAdjust="spacingAndGlyphs">RGB Triplet: 0, 133, 163</text><rect x="17" y="211" width="367" height="391" fill="#232323"/><line x1="90.5" y1="211" x2="90.5" y2="601.5" stroke="#939393" stroke-width="1.3"/><line x1="163.5" y1="211" x2="163.5" y2="601.5" stroke="#939393" stroke-width="1.3"/><line x1="237.5" y1="211" x2="237.5" y2="601.5" stroke="#939393" stroke-width="1.3"/><line x1="310.5" y1="211" x2="310.5" y2="601.5" stroke="#939393" stroke-width="1.3"/><rect x="16.5" y="212.6" width="109.3" height="11.6" fill="url(#b0)" stroke="#000" stroke-width="1.1"/><rect x="16.5" y="228.9" width="221.3" height="11.6" fill="url(#b1)" stroke="#000" stroke-width="1.1"/><rect x="16.5" y="245.2" width="128.0" height="11.6" fill="url(#b2)" stroke="#000" stroke-width="1.1"/><rect x="16.5" y="261.5" width="165.7" height="11.6" fill="url(#b3)" stroke="#000" stroke-width="1.1"/><rect x="16.5" y="277.9" width="200.4" height="11.6" fill="url(#b4)" stroke="#000" stroke-width="1.1"/><rect x="16.5" y="294.2" width="283.9" height="11.6" fill="url(#b5)" stroke="#000" stroke-width="1.1"/><rect x="16.5" y="310.5" width="119.5" height="11.6" fill="url(#b6)" stroke="#000" stroke-width="1.1"/><rect x="16.5" y="326.8" width="198.2" height="11.6" fill="url(#b7)" stroke="#000" stroke-width="1.1"/><rect x="16.5" y="343.2" width="171.9" height="11.6" fill="url(#b8)" stroke="#000" stroke-width="1.1"/><rect x="16.5" y="359.5" width="177.0" height="11.6" fill="url(#b9)" stroke="#000" stroke-width="1.1"/><rect x="16.5" y="375.8" width="208.1" height="11.6" fill="url(#b10)" stroke="#000" stroke-width="1.1"/><rect x="16.5" y="392.1" width="170.8" height="11.6" fill="url(#b11)" stroke="#000" stroke-width="1.1"/><rect x="16.5" y="408.4" width="196.0" height="11.6" fill="url(#b12)" stroke="#000" stroke-width="1.1"/><rect x="16.5" y="424.8" width="212.1" height="11.6" fill="url(#b13)" stroke="#000" stroke-width="1.1"/><rect x="16.5" y="441.1" width="125.4" height="11.6" fill="url(#b14)" stroke="#000" stroke-width="1.1"/><rect x="16.5" y="457.4" width="106.7" height="11.6" fill="url(#b15)" stroke="#000" stroke-width="1.1"/><rect x="16.5" y="473.8" width="154.0" height="11.6" fill="url(#b16)" stroke="#000" stroke-width="1.1"/><rect x="16.5" y="490.1" width="77.5" height="11.6" fill="url(#b17)" stroke="#000" stroke-width="1.1"/><rect x="16.5" y="506.4" width="42.3" height="11.6" fill="url(#b18)" stroke="#000" stroke-width="1.1"/><rect x="16.5" y="522.7" width="34.6" height="11.6" fill="url(#b19)" stroke="#000" stroke-width="1.1"/><rect x="16.5" y="539.0" width="42.0" height="11.6" fill="url(#b20)" stroke="#000" stroke-width="1.1"/><rect x="16.5" y="555.4" width="47.8" height="11.6" fill="url(#b21)" stroke="#000" stroke-width="1.1"/><rect x="16.5" y="571.7" width="58.8" height="11.6" fill="url(#b22)" stroke="#000" stroke-width="1.1"/><rect x="16.5" y="588.0" width="93.9" height="11.6" fill="url(#b23)" stroke="#000" stroke-width="1.1"/><line x1="53.5" y1="211" x2="53.5" y2="601.5" stroke="#0e6d25" stroke-width="1.2"/><line x1="127" y1="211" x2="127" y2="601.5" stroke="#eeec14" stroke-width="1.9"/><path d="M16.7,602 V210.8 H383" fill="none" stroke="#a6a6a6" stroke-width="1.5"/><line x1="382.7" y1="210" x2="382.7" y2="608" stroke="#b88e92" stroke-width="2.3"/><line x1="16" y1="601.9" x2="383" y2="601.9" stroke="#a8a8a8" stroke-width="1.4"/><line x1="17.5" y1="602" x2="17.5" y2="608" stroke="#d0d0d0" stroke-width="1.5"/><text x="17.0" y="625" font-size="15.5" fill="#dcdcdc" text-anchor="middle">0</text><line x1="90.5" y1="602" x2="90.5" y2="608" stroke="#d0d0d0" stroke-width="1.5"/><text x="90.0" y="625" font-size="15.5" fill="#dcdcdc" text-anchor="middle">2</text><line x1="163.5" y1="602" x2="163.5" y2="608" stroke="#d0d0d0" stroke-width="1.5"/><text x="163.0" y="625" font-size="15.5" fill="#dcdcdc" text-anchor="middle">4</text><line x1="237.5" y1="602" x2="237.5" y2="608" stroke="#d0d0d0" stroke-width="1.5"/><text x="237.0" y="625" font-size="15.5" fill="#dcdcdc" text-anchor="middle">6</text><line x1="310.5" y1="602" x2="310.5" y2="608" stroke="#d0d0d0" stroke-width="1.5"/><text x="310.0" y="625" font-size="15.5" fill="#dcdcdc" text-anchor="middle">8</text><text x="383.0" y="625" font-size="15.5" fill="#dcdcdc" text-anchor="middle">10</text><text x="160" y="205.5" font-size="15.4" fill="#dcdcdc" textLength="81" lengthAdjust="spacingAndGlyphs">DeltaE 2000</text><rect x="429.7" y="47.8" width="149.7" height="366.3" fill="#232323"/><line x1="424.2" y1="47.5" x2="429.7" y2="47.5" stroke="#dedede" stroke-width="1.8"/><text x="423.9" y="53.3" font-size="15" fill="#dcdcdc" text-anchor="end">4</text><line x1="424.2" y1="93.5" x2="429.7" y2="93.5" stroke="#dedede" stroke-width="1.8"/><text x="423.9" y="99.3" font-size="15" fill="#dcdcdc" text-anchor="end">3</text><line x1="429.7" y1="139.5" x2="579.4" y2="139.5" stroke="#929292" stroke-width="1.2"/><line x1="424.2" y1="139.5" x2="429.7" y2="139.5" stroke="#dedede" stroke-width="1.8"/><text x="423.9" y="145.3" font-size="15" fill="#dcdcdc" text-anchor="end">2</text><line x1="424.2" y1="185.5" x2="429.7" y2="185.5" stroke="#dedede" stroke-width="1.8"/><text x="423.9" y="191.3" font-size="15" fill="#dcdcdc" text-anchor="end">1</text><line x1="429.7" y1="231.5" x2="579.4" y2="231.5" stroke="#929292" stroke-width="1.2"/><line x1="424.2" y1="231.5" x2="429.7" y2="231.5" stroke="#dedede" stroke-width="1.8"/><text x="423.9" y="237.3" font-size="15" fill="#dcdcdc" text-anchor="end">0</text><line x1="424.2" y1="277.5" x2="429.7" y2="277.5" stroke="#dedede" stroke-width="1.8"/><text x="423.9" y="283.3" font-size="15" fill="#dcdcdc" text-anchor="end">-1</text><line x1="429.7" y1="322.5" x2="579.4" y2="322.5" stroke="#929292" stroke-width="1.2"/><line x1="424.2" y1="322.5" x2="429.7" y2="322.5" stroke="#dedede" stroke-width="1.8"/><text x="423.9" y="328.3" font-size="15" fill="#dcdcdc" text-anchor="end">-2</text><line x1="424.2" y1="368.5" x2="429.7" y2="368.5" stroke="#dedede" stroke-width="1.8"/><text x="423.9" y="374.3" font-size="15" fill="#dcdcdc" text-anchor="end">-3</text><line x1="424.2" y1="414.5" x2="429.7" y2="414.5" stroke="#dedede" stroke-width="1.8"/><text x="423.9" y="420.3" font-size="15" fill="#dcdcdc" text-anchor="end">-4</text><rect x="429.7" y="47.8" width="149.7" height="366.3" fill="none" stroke="#969696" stroke-width="1.5"/><rect x="445.0" y="231.2" width="119.0" height="0.6" fill="url(#dbar)" stroke="#000" stroke-width="1.3"/><line x1="429.7" y1="93.0" x2="579.9" y2="93.0" stroke="#dcdc2c" stroke-width="2"/><line x1="429.7" y1="368.2" x2="579.9" y2="368.2" stroke="#dcdc2c" stroke-width="2"/><line x1="429.7" y1="185.0" x2="579.9" y2="185.0" stroke="#0d7a22" stroke-width="1.6"/><line x1="429.7" y1="277.1" x2="579.9" y2="277.1" stroke="#0d7a22" stroke-width="1.6"/><text x="473.7" y="43.1" font-size="15.2" fill="#dcdcdc" textLength="42.4" lengthAdjust="spacingAndGlyphs">DeltaL</text><rect x="625.4" y="47.8" width="150.9" height="366.3" fill="#232323"/><line x1="619.9" y1="47.5" x2="625.4" y2="47.5" stroke="#dedede" stroke-width="1.8"/><text x="619.6" y="53.3" font-size="15" fill="#dcdcdc" text-anchor="end">6</text><line x1="625.4" y1="109.5" x2="776.3" y2="109.5" stroke="#929292" stroke-width="1.2"/><line x1="619.9" y1="109.5" x2="625.4" y2="109.5" stroke="#dedede" stroke-width="1.8"/><text x="619.6" y="115.3" font-size="15" fill="#dcdcdc" text-anchor="end">4</text><line x1="625.4" y1="170.5" x2="776.3" y2="170.5" stroke="#929292" stroke-width="1.2"/><line x1="619.9" y1="170.5" x2="625.4" y2="170.5" stroke="#dedede" stroke-width="1.8"/><text x="619.6" y="176.3" font-size="15" fill="#dcdcdc" text-anchor="end">2</text><line x1="625.4" y1="231.5" x2="776.3" y2="231.5" stroke="#929292" stroke-width="1.2"/><line x1="619.9" y1="231.5" x2="625.4" y2="231.5" stroke="#dedede" stroke-width="1.8"/><text x="619.6" y="237.3" font-size="15" fill="#dcdcdc" text-anchor="end">0</text><line x1="625.4" y1="292.5" x2="776.3" y2="292.5" stroke="#929292" stroke-width="1.2"/><line x1="619.9" y1="292.5" x2="625.4" y2="292.5" stroke="#dedede" stroke-width="1.8"/><text x="619.6" y="298.3" font-size="15" fill="#dcdcdc" text-anchor="end">-2</text><line x1="625.4" y1="353.5" x2="776.3" y2="353.5" stroke="#929292" stroke-width="1.2"/><line x1="619.9" y1="353.5" x2="625.4" y2="353.5" stroke="#dedede" stroke-width="1.8"/><text x="619.6" y="359.3" font-size="15" fill="#dcdcdc" text-anchor="end">-4</text><line x1="619.9" y1="414.5" x2="625.4" y2="414.5" stroke="#dedede" stroke-width="1.8"/><text x="619.6" y="420.3" font-size="15" fill="#dcdcdc" text-anchor="end">-6</text><rect x="625.4" y="47.8" width="150.9" height="366.3" fill="none" stroke="#969696" stroke-width="1.5"/><rect x="641.3" y="231.8" width="119.1" height="157.1" fill="url(#dbar)" stroke="#000" stroke-width="1.3"/><line x1="625.4" y1="139.0" x2="776.8" y2="139.0" stroke="#dcdc2c" stroke-width="2"/><line x1="625.4" y1="322.7" x2="776.8" y2="322.7" stroke="#dcdc2c" stroke-width="2"/><line x1="625.4" y1="200.3" x2="776.8" y2="200.3" stroke="#0d7a22" stroke-width="1.6"/><line x1="625.4" y1="261.9" x2="776.8" y2="261.9" stroke="#0d7a22" stroke-width="1.6"/><text x="669.0" y="43.1" font-size="15.2" fill="#dcdcdc" textLength="44.4" lengthAdjust="spacingAndGlyphs">DeltaC</text><rect x="821.5" y="47.8" width="165.1" height="366.3" fill="#232323"/><line x1="816.0" y1="47.5" x2="821.5" y2="47.5" stroke="#dedede" stroke-width="1.8"/><text x="815.7" y="53.3" font-size="15" fill="#dcdcdc" text-anchor="end">4</text><line x1="816.0" y1="93.5" x2="821.5" y2="93.5" stroke="#dedede" stroke-width="1.8"/><text x="815.7" y="99.3" font-size="15" fill="#dcdcdc" text-anchor="end">3</text><line x1="821.5" y1="139.5" x2="986.6" y2="139.5" stroke="#929292" stroke-width="1.2"/><line x1="816.0" y1="139.5" x2="821.5" y2="139.5" stroke="#dedede" stroke-width="1.8"/><text x="815.7" y="145.3" font-size="15" fill="#dcdcdc" text-anchor="end">2</text><line x1="816.0" y1="185.5" x2="821.5" y2="185.5" stroke="#dedede" stroke-width="1.8"/><text x="815.7" y="191.3" font-size="15" fill="#dcdcdc" text-anchor="end">1</text><line x1="821.5" y1="231.5" x2="986.6" y2="231.5" stroke="#929292" stroke-width="1.2"/><line x1="816.0" y1="231.5" x2="821.5" y2="231.5" stroke="#dedede" stroke-width="1.8"/><text x="815.7" y="237.3" font-size="15" fill="#dcdcdc" text-anchor="end">0</text><line x1="816.0" y1="277.5" x2="821.5" y2="277.5" stroke="#dedede" stroke-width="1.8"/><text x="815.7" y="283.3" font-size="15" fill="#dcdcdc" text-anchor="end">-1</text><line x1="821.5" y1="322.5" x2="986.6" y2="322.5" stroke="#929292" stroke-width="1.2"/><line x1="816.0" y1="322.5" x2="821.5" y2="322.5" stroke="#dedede" stroke-width="1.8"/><text x="815.7" y="328.3" font-size="15" fill="#dcdcdc" text-anchor="end">-2</text><line x1="816.0" y1="368.5" x2="821.5" y2="368.5" stroke="#dedede" stroke-width="1.8"/><text x="815.7" y="374.3" font-size="15" fill="#dcdcdc" text-anchor="end">-3</text><line x1="816.0" y1="414.5" x2="821.5" y2="414.5" stroke="#dedede" stroke-width="1.8"/><text x="815.7" y="420.3" font-size="15" fill="#dcdcdc" text-anchor="end">-4</text><rect x="821.5" y="47.8" width="165.1" height="366.3" fill="none" stroke="#969696" stroke-width="1.5"/><rect x="838.6" y="98.2" width="131.2" height="133.6" fill="url(#dbar)" stroke="#000" stroke-width="1.3"/><line x1="821.5" y1="93.0" x2="987.1" y2="93.0" stroke="#dcdc2c" stroke-width="2"/><line x1="821.5" y1="368.2" x2="987.1" y2="368.2" stroke="#dcdc2c" stroke-width="2"/><line x1="821.5" y1="185.0" x2="987.1" y2="185.0" stroke="#0d7a22" stroke-width="1.6"/><line x1="821.5" y1="277.1" x2="987.1" y2="277.1" stroke="#0d7a22" stroke-width="1.6"/><text x="871.9" y="43.1" font-size="15.2" fill="#dcdcdc" textLength="45.1" lengthAdjust="spacingAndGlyphs">DeltaH</text><rect x="411" y="421" width="589" height="214.5" fill="#000"/><g clip-path="url(#csw)"><rect x="429.5" y="429.5" width="59" height="65" fill="#f7faff" stroke="#f2f2f2" stroke-width="1.3"/><rect x="429.5" y="512.5" width="59" height="65" fill="#fafafa" stroke="#f2f2f2" stroke-width="1.3"/><text x="441.9" y="593.5" font-size="13" fill="#f4f4f4" textLength="34.2" lengthAdjust="spacingAndGlyphs">White</text><rect x="499.6" y="429.5" width="59" height="65" fill="#e3e4e7" stroke="#f2f2f2" stroke-width="1.3"/><rect x="499.6" y="512.5" width="59" height="65" fill="#e6e6e6" stroke="#f2f2f2" stroke-width="1.3"/><text x="507.1" y="593.5" font-size="13" fill="#f4f4f4" textLength="43.8" lengthAdjust="spacingAndGlyphs">Gray 80</text><rect x="569.6" y="429.5" width="59" height="65" fill="#cecfd1" stroke="#f2f2f2" stroke-width="1.3"/><rect x="569.6" y="512.5" width="59" height="65" fill="#d0d0d0" stroke="#f2f2f2" stroke-width="1.3"/><text x="577.2" y="593.5" font-size="13" fill="#f4f4f4" textLength="43.8" lengthAdjust="spacingAndGlyphs">Gray 65</text><rect x="639.6" y="429.5" width="59" height="65" fill="#b7b8ba" stroke="#f2f2f2" stroke-width="1.3"/><rect x="639.6" y="512.5" width="59" height="65" fill="#bbbbbb" stroke="#f2f2f2" stroke-width="1.3"/><text x="647.2" y="593.5" font-size="13" fill="#f4f4f4" textLength="43.8" lengthAdjust="spacingAndGlyphs">Gray 50</text><rect x="709.7" y="429.5" width="59" height="65" fill="#9e9fa1" stroke="#f2f2f2" stroke-width="1.3"/><rect x="709.7" y="512.5" width="59" height="65" fill="#9e9e9e" stroke="#f2f2f2" stroke-width="1.3"/><text x="717.3" y="593.5" font-size="13" fill="#f4f4f4" textLength="43.8" lengthAdjust="spacingAndGlyphs">Gray 35</text><rect x="779.8" y="429.5" width="59" height="65" fill="#030408" stroke="#f2f2f2" stroke-width="1.3"/><rect x="779.8" y="512.5" width="59" height="65" fill="#000000" stroke="#f2f2f2" stroke-width="1.3"/><text x="794.2" y="593.5" font-size="13" fill="#f4f4f4" textLength="30.0" lengthAdjust="spacingAndGlyphs">Black</text><rect x="849.8" y="429.5" width="59" height="65" fill="#6e5044" stroke="#f2f2f2" stroke-width="1.3"/><rect x="849.8" y="512.5" width="59" height="65" fill="#745244" stroke="#f2f2f2" stroke-width="1.3"/><text x="852.9" y="593.5" font-size="13" fill="#f4f4f4" textLength="52.7" lengthAdjust="spacingAndGlyphs">Dark Skin</text><rect x="919.8" y="429.5" width="59" height="65" fill="#ba9b8c" stroke="#f2f2f2" stroke-width="1.3"/><rect x="919.8" y="512.5" width="59" height="65" fill="#c49783" stroke="#f2f2f2" stroke-width="1.3"/><text x="922.4" y="593.5" font-size="13" fill="#f4f4f4" textLength="53.8" lengthAdjust="spacingAndGlyphs">Light Skin</text><rect x="989.9" y="429.5" width="59" height="65" fill="#607da5" stroke="#f2f2f2" stroke-width="1.3"/><rect x="989.9" y="512.5" width="59" height="65" fill="#5f7b9e" stroke="#f2f2f2" stroke-width="1.3"/><text x="995.4" y="593.5" font-size="13" fill="#f4f4f4" textLength="48.0" lengthAdjust="spacingAndGlyphs">Blue Sky</text></g><text transform="translate(424.5,462) rotate(-90)" font-size="13.5" fill="#f4f4f4" text-anchor="middle">Actual</text><text transform="translate(424.5,544.5) rotate(-90)" font-size="13.5" fill="#f4f4f4" text-anchor="middle">Target</text><rect x="411" y="618" width="589" height="17.5" fill="#6a6a6a"/><rect x="429.4" y="619.6" width="188.6" height="14.8" rx="7" fill="#4b4b4b"/><rect x="411.6" y="619.2" width="14.6" height="15.4" rx="3.5" fill="#7e7e7e"/><path d="M421.8,621.8 L416.2,627 L421.8,632.2 Z" fill="#333"/><rect x="984.3" y="619.2" width="14.6" height="15.4" rx="3.5" fill="#7e7e7e"/><path d="M988.8,621.8 L994.4,627 L988.8,632.2 Z" fill="#333"/><defs><linearGradient id="o0" gradientUnits="userSpaceOnUse" x1="1101.2" x2="1127.5"><stop offset="0" stop-color="#009900"/><stop offset="1" stop-color="#009900"/></linearGradient><linearGradient id="o1" gradientUnits="userSpaceOnUse" x1="1092.0" x2="1139.6"><stop offset="0" stop-color="#009900"/><stop offset="1" stop-color="#009900"/></linearGradient><linearGradient id="o2" gradientUnits="userSpaceOnUse" x1="1086.4" x2="1149.3"><stop offset="0" stop-color="#009900"/><stop offset="1" stop-color="#009900"/></linearGradient><linearGradient id="o3" gradientUnits="userSpaceOnUse" x1="1082.3" x2="1157.0"><stop offset="0" stop-color="#009900"/><stop offset="1" stop-color="#009900"/></linearGradient><linearGradient id="o4" gradientUnits="userSpaceOnUse" x1="1079.1" x2="1163.9"><stop offset="0" stop-color="#009900"/><stop offset=".857" stop-color="#009900"/><stop offset="1" stop-color="#009900"/></linearGradient><linearGradient id="o5" gradientUnits="userSpaceOnUse" x1="1076.5" x2="1170.5"><stop offset="0" stop-color="#009900"/><stop offset=".75" stop-color="#009900"/><stop offset="1" stop-color="#009900"/></linearGradient><linearGradient id="o6" gradientUnits="userSpaceOnUse" x1="1074.2" x2="1177.0"><stop offset="0" stop-color="#009901"/><stop offset=".667" stop-color="#009900"/><stop offset="1" stop-color="#009900"/></linearGradient><linearGradient id="o7" gradientUnits="userSpaceOnUse" x1="1072.2" x2="1183.2"><stop offset="0" stop-color="#009902"/><stop offset=".667" stop-color="#009900"/><stop offset="1" stop-color="#009900"/></linearGradient><linearGradient id="o8" gradientUnits="userSpaceOnUse" x1="1070.3" x2="1189.1"><stop offset="0" stop-color="#009903"/><stop offset=".6" stop-color="#009900"/><stop offset="1" stop-color="#009900"/></linearGradient><linearGradient id="o9" gradientUnits="userSpaceOnUse" x1="1068.6" x2="1194.8"><stop offset="0" stop-color="#009904"/><stop offset=".545" stop-color="#009900"/><stop offset="1" stop-color="#009900"/></linearGradient><linearGradient id="o10" gradientUnits="userSpaceOnUse" x1="1067.1" x2="1200.3"><stop offset="0" stop-color="#009905"/><stop offset=".545" stop-color="#009900"/><stop offset="1" stop-color="#009900"/></linearGradient><linearGradient id="o11" gradientUnits="userSpaceOnUse" x1="1065.6" x2="1205.7"><stop offset="0" stop-color="#009905"/><stop offset=".5" stop-color="#009900"/><stop offset="1" stop-color="#009900"/></linearGradient><linearGradient id="o12" gradientUnits="userSpaceOnUse" x1="1064.3" x2="1210.9"><stop offset="0" stop-color="#009907"/><stop offset=".5" stop-color="#009900"/><stop offset="1" stop-color="#009900"/></linearGradient><linearGradient id="o13" gradientUnits="userSpaceOnUse" x1="1063.1" x2="1216.0"><stop offset="0" stop-color="#009907"/><stop offset=".462" stop-color="#009900"/><stop offset=".923" stop-color="#009900"/><stop offset="1" stop-color="#009900"/></linearGradient><linearGradient id="o14" gradientUnits="userSpaceOnUse" x1="1061.9" x2="1220.9"><stop offset="0" stop-color="#009908"/><stop offset=".462" stop-color="#009900"/><stop offset=".923" stop-color="#009900"/><stop offset="1" stop-color="#009900"/></linearGradient><linearGradient id="o15" gradientUnits="userSpaceOnUse" x1="1060.9" x2="1225.8"><stop offset="0" stop-color="#009909"/><stop offset=".429" stop-color="#009900"/><stop offset=".857" stop-color="#009900"/><stop offset="1" stop-color="#009900"/></linearGradient><linearGradient id="o16" gradientUnits="userSpaceOnUse" x1="1060.0" x2="1230.5"><stop offset="0" stop-color="#00990a"/><stop offset=".429" stop-color="#009900"/><stop offset=".857" stop-color="#009900"/><stop offset="1" stop-color="#009900"/></linearGradient><linearGradient id="o17" gradientUnits="userSpaceOnUse" x1="1059.0" x2="1235.2"><stop offset="0" stop-color="#00990b"/><stop offset=".4" stop-color="#009901"/><stop offset=".8" stop-color="#009900"/><stop offset="1" stop-color="#009900"/></linearGradient><linearGradient id="o18" gradientUnits="userSpaceOnUse" x1="1058.3" x2="1239.8"><stop offset="0" stop-color="#00990b"/><stop offset=".4" stop-color="#009901"/><stop offset=".8" stop-color="#009900"/><stop offset="1" stop-color="#009900"/></linearGradient><linearGradient id="o19" gradientUnits="userSpaceOnUse" x1="1057.6" x2="1244.3"><stop offset="0" stop-color="#00990c"/><stop offset=".375" stop-color="#009902"/><stop offset=".75" stop-color="#009900"/><stop offset="1" stop-color="#009900"/></linearGradient><linearGradient id="o20" gradientUnits="userSpaceOnUse" x1="1056.9" x2="1248.8"><stop offset="0" stop-color="#00990d"/><stop offset=".375" stop-color="#009903"/><stop offset=".75" stop-color="#009900"/><stop offset="1" stop-color="#009900"/></linearGradient><linearGradient id="o21" gradientUnits="userSpaceOnUse" x1="1056.2" x2="1253.2"><stop offset="0" stop-color="#00990e"/><stop offset=".375" stop-color="#009904"/><stop offset=".75" stop-color="#009900"/><stop offset="1" stop-color="#009900"/></linearGradient><linearGradient id="o22" gradientUnits="userSpaceOnUse" x1="1055.7" x2="1257.5"><stop offset="0" stop-color="#00990f"/><stop offset=".353" stop-color="#009905"/><stop offset=".706" stop-color="#009900"/><stop offset="1" stop-color="#009900"/></linearGradient><linearGradient id="o23" gradientUnits="userSpaceOnUse" x1="1055.1" x2="1261.8"><stop offset="0" stop-color="#009910"/><stop offset=".353" stop-color="#009905"/><stop offset=".706" stop-color="#009900"/><stop offset="1" stop-color="#009900"/></linearGradient><linearGradient id="o24" gradientUnits="userSpaceOnUse" x1="1054.6" x2="1266.1"><stop offset="0" stop-color="#009910"/><stop offset=".333" stop-color="#009907"/><stop offset=".667" stop-color="#009900"/><stop offset="1" stop-color="#009900"/></linearGradient><linearGradient id="o25" gradientUnits="userSpaceOnUse" x1="1054.2" x2="1270.3"><stop offset="0" stop-color="#009911"/><stop offset=".333" stop-color="#009907"/><stop offset=".667" stop-color="#009900"/><stop offset="1" stop-color="#009900"/></linearGradient><linearGradient id="o26" gradientUnits="userSpaceOnUse" x1="1053.8" x2="1274.4"><stop offset="0" stop-color="#009912"/><stop offset=".333" stop-color="#009908"/><stop offset=".667" stop-color="#009900"/><stop offset="1" stop-color="#009900"/></linearGradient><linearGradient id="o27" gradientUnits="userSpaceOnUse" x1="1053.4" x2="1278.5"><stop offset="0" stop-color="#009913"/><stop offset=".316" stop-color="#009909"/><stop offset=".632" stop-color="#009900"/><stop offset=".947" stop-color="#009900"/><stop offset="1" stop-color="#009900"/></linearGradient><linearGradient id="o28" gradientUnits="userSpaceOnUse" x1="1053.0" x2="1282.6"><stop offset="0" stop-color="#009914"/><stop offset=".316" stop-color="#00990a"/><stop offset=".632" stop-color="#009900"/><stop offset=".947" stop-color="#009900"/><stop offset="1" stop-color="#009900"/></linearGradient><linearGradient id="o29" gradientUnits="userSpaceOnUse" x1="1052.7" x2="1286.7"><stop offset="0" stop-color="#009915"/><stop offset=".316" stop-color="#00990a"/><stop offset=".632" stop-color="#009900"/><stop offset=".947" stop-color="#009900"/><stop offset="1" stop-color="#009900"/></linearGradient><linearGradient id="o30" gradientUnits="userSpaceOnUse" x1="1052.4" x2="1290.7"><stop offset="0" stop-color="#009916"/><stop offset=".3" stop-color="#00990b"/><stop offset=".6" stop-color="#009900"/><stop offset=".9" stop-color="#009900"/><stop offset="1" stop-color="#009900"/></linearGradient><linearGradient id="o31" gradientUnits="userSpaceOnUse" x1="1052.2" x2="1294.7"><stop offset="0" stop-color="#009917"/><stop offset=".3" stop-color="#00990d"/><stop offset=".6" stop-color="#009901"/><stop offset=".9" stop-color="#009900"/><stop offset="1" stop-color="#009900"/></linearGradient><linearGradient id="o32" gradientUnits="userSpaceOnUse" x1="1051.9" x2="1298.7"><stop offset="0" stop-color="#009917"/><stop offset=".286" stop-color="#00990e"/><stop offset=".571" stop-color="#009902"/><stop offset=".857" stop-color="#009900"/><stop offset="1" stop-color="#009900"/></linearGradient><linearGradient id="o33" gradientUnits="userSpaceOnUse" x1="1051.7" x2="1302.6"><stop offset="0" stop-color="#009919"/><stop offset=".286" stop-color="#00990e"/><stop offset=".571" stop-color="#009902"/><stop offset=".857" stop-color="#009900"/><stop offset="1" stop-color="#029900"/></linearGradient><linearGradient id="o34" gradientUnits="userSpaceOnUse" x1="1051.5" x2="1306.6"><stop offset="0" stop-color="#009919"/><stop offset=".286" stop-color="#00990f"/><stop offset=".571" stop-color="#009903"/><stop offset=".857" stop-color="#009900"/><stop offset=".952" stop-color="#009900"/><stop offset="1" stop-color="#059900"/></linearGradient><linearGradient id="o35" gradientUnits="userSpaceOnUse" x1="1051.4" x2="1310.5"><stop offset="0" stop-color="#00991a"/><stop offset=".273" stop-color="#009910"/><stop offset=".545" stop-color="#009905"/><stop offset=".818" stop-color="#009900"/><stop offset=".955" stop-color="#009900"/><stop offset="1" stop-color="#0a9900"/></linearGradient><linearGradient id="o36" gradientUnits="userSpaceOnUse" x1="1051.2" x2="1314.4"><stop offset="0" stop-color="#00991b"/><stop offset=".273" stop-color="#009911"/><stop offset=".545" stop-color="#009905"/><stop offset=".818" stop-color="#009900"/><stop offset=".955" stop-color="#049900"/><stop offset="1" stop-color="#0e9900"/></linearGradient><linearGradient id="o37" gradientUnits="userSpaceOnUse" x1="1051.1" x2="1318.3"><stop offset="0" stop-color="#00991c"/><stop offset=".273" stop-color="#009912"/><stop offset=".545" stop-color="#009906"/><stop offset=".818" stop-color="#009900"/><stop offset=".909" stop-color="#009900"/><stop offset="1" stop-color="#129900"/></linearGradient><linearGradient id="o38" gradientUnits="userSpaceOnUse" x1="1051.0" x2="1322.2"><stop offset="0" stop-color="#00991d"/><stop offset=".261" stop-color="#009913"/><stop offset=".522" stop-color="#009908"/><stop offset=".783" stop-color="#009900"/><stop offset=".913" stop-color="#029900"/><stop offset="1" stop-color="#169900"/></linearGradient><linearGradient id="o39" gradientUnits="userSpaceOnUse" x1="1051.0" x2="1326.0"><stop offset="0" stop-color="#00991e"/><stop offset=".261" stop-color="#009914"/><stop offset=".522" stop-color="#009908"/><stop offset=".783" stop-color="#009900"/><stop offset=".87" stop-color="#009900"/><stop offset="1" stop-color="#1b9900"/></linearGradient><linearGradient id="o40" gradientUnits="userSpaceOnUse" x1="1050.9" x2="1329.9"><stop offset="0" stop-color="#00991f"/><stop offset=".261" stop-color="#009915"/><stop offset=".522" stop-color="#009909"/><stop offset=".783" stop-color="#009900"/><stop offset=".87" stop-color="#009900"/><stop offset="1" stop-color="#1f9900"/></linearGradient><linearGradient id="o41" gradientUnits="userSpaceOnUse" x1="1050.9" x2="1333.7"><stop offset="0" stop-color="#009920"/><stop offset=".25" stop-color="#009916"/><stop offset=".5" stop-color="#00990b"/><stop offset=".75" stop-color="#009900"/><stop offset=".833" stop-color="#009900"/><stop offset="1" stop-color="#249900"/></linearGradient><linearGradient id="o42" gradientUnits="userSpaceOnUse" x1="1050.9" x2="1337.6"><stop offset="0" stop-color="#009921"/><stop offset=".25" stop-color="#009917"/><stop offset=".5" stop-color="#00990b"/><stop offset=".75" stop-color="#009900"/><stop offset=".833" stop-color="#009900"/><stop offset="1" stop-color="#299900"/></linearGradient><linearGradient id="o43" gradientUnits="userSpaceOnUse" x1="1050.9" x2="1341.4"><stop offset="0" stop-color="#009922"/><stop offset=".25" stop-color="#009918"/><stop offset=".5" stop-color="#00990c"/><stop offset=".75" stop-color="#009900"/><stop offset=".833" stop-color="#029900"/><stop offset="1" stop-color="#2e9900"/></linearGradient><linearGradient id="o44" gradientUnits="userSpaceOnUse" x1="1051.0" x2="1345.2"><stop offset="0" stop-color="#009923"/><stop offset=".24" stop-color="#009919"/><stop offset=".48" stop-color="#00990e"/><stop offset=".72" stop-color="#009900"/><stop offset=".8" stop-color="#009900"/><stop offset="1" stop-color="#349900"/></linearGradient><linearGradient id="o45" gradientUnits="userSpaceOnUse" x1="1051.1" x2="1349.0"><stop offset="0" stop-color="#009924"/><stop offset=".24" stop-color="#00991a"/><stop offset=".48" stop-color="#00990e"/><stop offset=".72" stop-color="#009900"/><stop offset=".8" stop-color="#019900"/><stop offset="1" stop-color="#399900"/></linearGradient><linearGradient id="o46" gradientUnits="userSpaceOnUse" x1="1051.1" x2="1352.8"><stop offset="0" stop-color="#009925"/><stop offset=".24" stop-color="#00991b"/><stop offset=".48" stop-color="#00990f"/><stop offset=".72" stop-color="#009901"/><stop offset=".8" stop-color="#059900"/><stop offset="1" stop-color="#3e9900"/></linearGradient><linearGradient id="o47" gradientUnits="userSpaceOnUse" x1="1051.2" x2="1356.6"><stop offset="0" stop-color="#009926"/><stop offset=".24" stop-color="#00991c"/><stop offset=".48" stop-color="#009910"/><stop offset=".72" stop-color="#009901"/><stop offset=".76" stop-color="#009900"/><stop offset="1" stop-color="#449900"/></linearGradient><linearGradient id="o48" gradientUnits="userSpaceOnUse" x1="1051.4" x2="1360.3"><stop offset="0" stop-color="#009927"/><stop offset=".231" stop-color="#00991d"/><stop offset=".462" stop-color="#009911"/><stop offset=".692" stop-color="#009904"/><stop offset=".769" stop-color="#049900"/><stop offset="1" stop-color="#4a9900"/></linearGradient><linearGradient id="o49" gradientUnits="userSpaceOnUse" x1="1051.5" x2="1364.1"><stop offset="0" stop-color="#009928"/><stop offset=".231" stop-color="#00991f"/><stop offset=".462" stop-color="#009913"/><stop offset=".692" stop-color="#009904"/><stop offset=".731" stop-color="#009901"/><stop offset=".962" stop-color="#439900"/><stop offset="1" stop-color="#509900"/></linearGradient><linearGradient id="o50" gradientUnits="userSpaceOnUse" x1="1051.6" x2="1367.9"><stop offset="0" stop-color="#009929"/><stop offset=".231" stop-color="#00991f"/><stop offset=".462" stop-color="#009913"/><stop offset=".692" stop-color="#009904"/><stop offset=".731" stop-color="#009902"/><stop offset=".962" stop-color="#499900"/><stop offset="1" stop-color="#579900"/></linearGradient><linearGradient id="o51" gradientUnits="userSpaceOnUse" x1="1051.8" x2="1371.6"><stop offset="0" stop-color="#00992b"/><stop offset=".222" stop-color="#009921"/><stop offset=".444" stop-color="#009915"/><stop offset=".667" stop-color="#009907"/><stop offset=".741" stop-color="#069901"/><stop offset=".963" stop-color="#4f9900"/><stop offset="1" stop-color="#5e9900"/></linearGradient><linearGradient id="o52" gradientUnits="userSpaceOnUse" x1="1052.0" x2="1375.4"><stop offset="0" stop-color="#00992c"/><stop offset=".222" stop-color="#009922"/><stop offset=".444" stop-color="#009916"/><stop offset=".667" stop-color="#009907"/><stop offset=".704" stop-color="#009905"/><stop offset=".926" stop-color="#489900"/><stop offset="1" stop-color="#649900"/></linearGradient><linearGradient id="o53" gradientUnits="userSpaceOnUse" x1="1052.2" x2="1379.1"><stop offset="0" stop-color="#00992d"/><stop offset=".222" stop-color="#009923"/><stop offset=".444" stop-color="#009917"/><stop offset=".667" stop-color="#009908"/><stop offset=".704" stop-color="#029905"/><stop offset=".926" stop-color="#4e9900"/><stop offset="1" stop-color="#6b9900"/></linearGradient><linearGradient id="o54" gradientUnits="userSpaceOnUse" x1="1052.4" x2="1382.9"><stop offset="0" stop-color="#00992e"/><stop offset=".214" stop-color="#009925"/><stop offset=".429" stop-color="#009919"/><stop offset=".643" stop-color="#00990a"/><stop offset=".679" stop-color="#009908"/><stop offset=".893" stop-color="#479900"/><stop offset="1" stop-color="#739900"/></linearGradient><linearGradient id="o55" gradientUnits="userSpaceOnUse" x1="1052.6" x2="1386.7"><stop offset="0" stop-color="#00992f"/><stop offset=".214" stop-color="#009925"/><stop offset=".429" stop-color="#00991a"/><stop offset=".643" stop-color="#00990b"/><stop offset=".679" stop-color="#019908"/><stop offset=".893" stop-color="#4d9900"/><stop offset="1" stop-color="#7b9900"/></linearGradient><linearGradient id="o56" gradientUnits="userSpaceOnUse" x1="1052.8" x2="1390.4"><stop offset="0" stop-color="#009931"/><stop offset=".214" stop-color="#009926"/><stop offset=".429" stop-color="#00991a"/><stop offset=".643" stop-color="#00990c"/><stop offset=".679" stop-color="#059909"/><stop offset=".893" stop-color="#539900"/><stop offset="1" stop-color="#839900"/></linearGradient><linearGradient id="o57" gradientUnits="userSpaceOnUse" x1="1053.1" x2="1394.2"><stop offset="0" stop-color="#009932"/><stop offset=".214" stop-color="#009928"/><stop offset=".429" stop-color="#00991c"/><stop offset=".643" stop-color="#00990d"/><stop offset=".857" stop-color="#4a9900"/><stop offset="1" stop-color="#8c9900"/></linearGradient><linearGradient id="o58" gradientUnits="userSpaceOnUse" x1="1053.3" x2="1397.9"><stop offset="0" stop-color="#009933"/><stop offset=".207" stop-color="#009929"/><stop offset=".414" stop-color="#00991d"/><stop offset=".621" stop-color="#00990f"/><stop offset=".655" stop-color="#04990d"/><stop offset=".862" stop-color="#539900"/><stop offset="1" stop-color="#959900"/></linearGradient><linearGradient id="o59" gradientUnits="userSpaceOnUse" x1="1053.6" x2="1401.6"><stop offset="0" stop-color="#009934"/><stop offset=".207" stop-color="#00992b"/><stop offset=".414" stop-color="#00991f"/><stop offset=".621" stop-color="#009910"/><stop offset=".828" stop-color="#4a9900"/><stop offset=".966" stop-color="#8b9900"/><stop offset="1" stop-color="#999400"/></linearGradient><linearGradient id="o60" gradientUnits="userSpaceOnUse" x1="1053.9" x2="1405.4"><stop offset="0" stop-color="#009935"/><stop offset=".207" stop-color="#00992c"/><stop offset=".414" stop-color="#009920"/><stop offset=".621" stop-color="#009911"/><stop offset=".828" stop-color="#509900"/><stop offset=".966" stop-color="#949900"/><stop offset="1" stop-color="#998c00"/></linearGradient><linearGradient id="o61" gradientUnits="userSpaceOnUse" x1="1054.2" x2="1409.1"><stop offset="0" stop-color="#009937"/><stop offset=".2" stop-color="#00992d"/><stop offset=".4" stop-color="#009922"/><stop offset=".6" stop-color="#009913"/><stop offset=".8" stop-color="#4a9901"/><stop offset=".933" stop-color="#8c9900"/><stop offset=".967" stop-color="#999400"/><stop offset="1" stop-color="#998400"/></linearGradient><linearGradient id="o62" gradientUnits="userSpaceOnUse" x1="1054.5" x2="1412.8"><stop offset="0" stop-color="#009938"/><stop offset=".2" stop-color="#00992f"/><stop offset=".4" stop-color="#009923"/><stop offset=".6" stop-color="#009914"/><stop offset=".8" stop-color="#509901"/><stop offset=".933" stop-color="#949900"/><stop offset="1" stop-color="#997c00"/></linearGradient><linearGradient id="o63" gradientUnits="userSpaceOnUse" x1="1054.8" x2="1416.5"><stop offset="0" stop-color="#00993a"/><stop offset=".2" stop-color="#009930"/><stop offset=".4" stop-color="#009924"/><stop offset=".6" stop-color="#029915"/><stop offset=".8" stop-color="#569902"/><stop offset=".933" stop-color="#999500"/><stop offset="1" stop-color="#997600"/></linearGradient><linearGradient id="o64" gradientUnits="userSpaceOnUse" x1="1055.1" x2="1420.2"><stop offset="0" stop-color="#00993b"/><stop offset=".2" stop-color="#009931"/><stop offset=".4" stop-color="#009925"/><stop offset=".567" stop-color="#009919"/><stop offset=".6" stop-color="#069916"/><stop offset=".8" stop-color="#5d9902"/><stop offset=".9" stop-color="#939900"/><stop offset="1" stop-color="#996f00"/></linearGradient><linearGradient id="o65" gradientUnits="userSpaceOnUse" x1="1055.5" x2="1424.0"><stop offset="0" stop-color="#00993c"/><stop offset=".194" stop-color="#009933"/><stop offset=".387" stop-color="#009928"/><stop offset=".581" stop-color="#029919"/><stop offset=".774" stop-color="#569906"/><stop offset=".871" stop-color="#8b9900"/><stop offset=".903" stop-color="#999400"/><stop offset="1" stop-color="#996900"/></linearGradient><linearGradient id="o66" gradientUnits="userSpaceOnUse" x1="1055.8" x2="1427.7"><stop offset="0" stop-color="#00993e"/><stop offset=".194" stop-color="#009934"/><stop offset=".387" stop-color="#009929"/><stop offset=".548" stop-color="#00991d"/><stop offset=".581" stop-color="#05991a"/><stop offset=".774" stop-color="#5d9907"/><stop offset=".871" stop-color="#949900"/><stop offset="1" stop-color="#996300"/></linearGradient><linearGradient id="o67" gradientUnits="userSpaceOnUse" x1="1056.2" x2="1431.4"><stop offset="0" stop-color="#00993f"/><stop offset=".194" stop-color="#009936"/><stop offset=".387" stop-color="#00992a"/><stop offset=".548" stop-color="#00991e"/><stop offset=".742" stop-color="#53990b"/><stop offset=".871" stop-color="#999500"/><stop offset=".968" stop-color="#996800"/><stop offset="1" stop-color="#995e00"/></linearGradient><linearGradient id="o68" gradientUnits="userSpaceOnUse" x1="1056.6" x2="1435.1"><stop offset="0" stop-color="#009941"/><stop offset=".188" stop-color="#009937"/><stop offset=".375" stop-color="#00992c"/><stop offset=".531" stop-color="#009920"/><stop offset=".562" stop-color="#05991e"/><stop offset=".75" stop-color="#5e990b"/><stop offset=".844" stop-color="#959900"/><stop offset="1" stop-color="#995800"/></linearGradient><linearGradient id="o69" gradientUnits="userSpaceOnUse" x1="1057.0" x2="1438.8"><stop offset="0" stop-color="#009942"/><stop offset=".188" stop-color="#009939"/><stop offset=".375" stop-color="#00992e"/><stop offset=".531" stop-color="#009922"/><stop offset=".719" stop-color="#539910"/><stop offset=".812" stop-color="#8a9904"/><stop offset=".844" stop-color="#999400"/><stop offset=".969" stop-color="#995c00"/><stop offset="1" stop-color="#995300"/></linearGradient><linearGradient id="o70" gradientUnits="userSpaceOnUse" x1="1057.4" x2="1442.5"><stop offset="0" stop-color="#009944"/><stop offset=".188" stop-color="#00993a"/><stop offset=".375" stop-color="#00992f"/><stop offset=".531" stop-color="#009923"/><stop offset=".719" stop-color="#5a9910"/><stop offset=".812" stop-color="#939905"/><stop offset=".938" stop-color="#996100"/><stop offset="1" stop-color="#994f00"/></linearGradient><linearGradient id="o71" gradientUnits="userSpaceOnUse" x1="1057.8" x2="1446.2"><stop offset="0" stop-color="#009945"/><stop offset=".188" stop-color="#00993c"/><stop offset=".375" stop-color="#009931"/><stop offset=".531" stop-color="#039925"/><stop offset=".719" stop-color="#619911"/><stop offset=".812" stop-color="#999605"/><stop offset=".906" stop-color="#996700"/><stop offset="1" stop-color="#994a00"/></linearGradient><linearGradient id="o72" gradientUnits="userSpaceOnUse" x1="1058.2" x2="1449.9"><stop offset="0" stop-color="#009947"/><stop offset=".182" stop-color="#00993e"/><stop offset=".364" stop-color="#009933"/><stop offset=".515" stop-color="#009927"/><stop offset=".697" stop-color="#5b9915"/><stop offset=".788" stop-color="#95990a"/><stop offset=".909" stop-color="#996000"/><stop offset="1" stop-color="#994600"/></linearGradient><linearGradient id="o73" gradientUnits="userSpaceOnUse" x1="1058.6" x2="1453.6"><stop offset="0" stop-color="#009949"/><stop offset=".182" stop-color="#009940"/><stop offset=".364" stop-color="#009934"/><stop offset=".515" stop-color="#039929"/><stop offset=".697" stop-color="#629916"/><stop offset=".758" stop-color="#89990e"/><stop offset=".788" stop-color="#99940a"/><stop offset=".879" stop-color="#996600"/><stop offset="1" stop-color="#994300"/></linearGradient><linearGradient id="o74" gradientUnits="userSpaceOnUse" x1="1059.1" x2="1457.4"><stop offset="0" stop-color="#00994a"/><stop offset=".182" stop-color="#009941"/><stop offset=".364" stop-color="#009936"/><stop offset=".485" stop-color="#00992c"/><stop offset=".515" stop-color="#07992a"/><stop offset=".697" stop-color="#699917"/><stop offset=".758" stop-color="#929910"/><stop offset=".788" stop-color="#998b0a"/><stop offset=".879" stop-color="#996000"/><stop offset="1" stop-color="#993f00"/></linearGradient><linearGradient id="o75" gradientUnits="userSpaceOnUse" x1="1059.5" x2="1461.1"><stop offset="0" stop-color="#00994c"/><stop offset=".182" stop-color="#009943"/><stop offset=".364" stop-color="#009938"/><stop offset=".485" stop-color="#00992e"/><stop offset=".667" stop-color="#5d991c"/><stop offset=".758" stop-color="#999710"/><stop offset=".818" stop-color="#997306"/><stop offset=".97" stop-color="#994100"/><stop offset="1" stop-color="#993b00"/></linearGradient><linearGradient id="o76" gradientUnits="userSpaceOnUse" x1="1060.0" x2="1464.8"><stop offset="0" stop-color="#00994d"/><stop offset=".176" stop-color="#009945"/><stop offset=".353" stop-color="#00993a"/><stop offset=".471" stop-color="#009931"/><stop offset=".5" stop-color="#07992f"/><stop offset=".676" stop-color="#6b991c"/><stop offset=".735" stop-color="#949915"/><stop offset=".853" stop-color="#995e02"/><stop offset="1" stop-color="#993800"/></linearGradient><linearGradient id="o77" gradientUnits="userSpaceOnUse" x1="1060.4" x2="1468.5"><stop offset="0" stop-color="#00994f"/><stop offset=".176" stop-color="#009947"/><stop offset=".353" stop-color="#00993c"/><stop offset=".471" stop-color="#009933"/><stop offset=".618" stop-color="#4c9925"/><stop offset=".735" stop-color="#999516"/><stop offset=".794" stop-color="#99710a"/><stop offset=".941" stop-color="#994000"/><stop offset="1" stop-color="#993400"/></linearGradient><linearGradient id="o78" gradientUnits="userSpaceOnUse" x1="1060.9" x2="1472.2"><stop offset="0" stop-color="#009951"/><stop offset=".176" stop-color="#009949"/><stop offset=".353" stop-color="#00993e"/><stop offset=".471" stop-color="#019935"/><stop offset=".647" stop-color="#669923"/><stop offset=".706" stop-color="#91991c"/><stop offset=".735" stop-color="#998c16"/><stop offset=".853" stop-color="#995402"/><stop offset="1" stop-color="#993100"/></linearGradient><linearGradient id="o79" gradientUnits="userSpaceOnUse" x1="1061.4" x2="1475.9"><stop offset="0" stop-color="#009953"/><stop offset=".171" stop-color="#00994b"/><stop offset=".343" stop-color="#009940"/><stop offset=".457" stop-color="#009938"/><stop offset=".629" stop-color="#619927"/><stop offset=".686" stop-color="#8a9920"/><stop offset=".714" stop-color="#99921a"/><stop offset=".8" stop-color="#99620a"/><stop offset=".971" stop-color="#993300"/><stop offset="1" stop-color="#992e00"/></linearGradient><linearGradient id="o80" gradientUnits="userSpaceOnUse" x1="1061.9" x2="1479.6"><stop offset="0" stop-color="#009955"/><stop offset=".171" stop-color="#00994d"/><stop offset=".343" stop-color="#009942"/><stop offset=".457" stop-color="#01993a"/><stop offset=".629" stop-color="#689928"/><stop offset=".686" stop-color="#939922"/><stop offset=".8" stop-color="#995c0a"/><stop offset=".971" stop-color="#993000"/><stop offset="1" stop-color="#992b00"/></linearGradient><linearGradient id="o81" gradientUnits="userSpaceOnUse" x1="1062.4" x2="1483.4"><stop offset="0" stop-color="#009957"/><stop offset=".171" stop-color="#00994f"/><stop offset=".343" stop-color="#009944"/><stop offset=".429" stop-color="#00993e"/><stop offset=".457" stop-color="#05993b"/><stop offset=".6" stop-color="#5b992e"/><stop offset=".686" stop-color="#999522"/><stop offset=".743" stop-color="#997014"/><stop offset=".829" stop-color="#994d06"/><stop offset="1" stop-color="#992900"/></linearGradient><linearGradient id="o82" gradientUnits="userSpaceOnUse" x1="1062.9" x2="1487.1"><stop offset="0" stop-color="#009959"/><stop offset=".171" stop-color="#009951"/><stop offset=".343" stop-color="#009946"/><stop offset=".429" stop-color="#009940"/><stop offset=".457" stop-color="#09993e"/><stop offset=".6" stop-color="#62992f"/><stop offset=".657" stop-color="#8f9929"/><stop offset=".686" stop-color="#998c22"/><stop offset=".771" stop-color="#995d0e"/><stop offset=".943" stop-color="#992f00"/><stop offset="1" stop-color="#992600"/></linearGradient><linearGradient id="o83" gradientUnits="userSpaceOnUse" x1="1063.5" x2="1490.8"><stop offset="0" stop-color="#00995b"/><stop offset=".167" stop-color="#009953"/><stop offset=".333" stop-color="#009949"/><stop offset=".417" stop-color="#009943"/><stop offset=".444" stop-color="#069941"/><stop offset=".611" stop-color="#739931"/><stop offset=".639" stop-color="#89992d"/><stop offset=".667" stop-color="#999228"/><stop offset=".722" stop-color="#996e18"/><stop offset=".861" stop-color="#993d03"/><stop offset="1" stop-color="#992300"/></linearGradient><linearGradient id="o84" gradientUnits="userSpaceOnUse" x1="1064.0" x2="1494.5"><stop offset="0" stop-color="#00995d"/><stop offset=".167" stop-color="#009955"/><stop offset=".333" stop-color="#00994c"/><stop offset=".417" stop-color="#009946"/><stop offset=".556" stop-color="#509938"/><stop offset=".639" stop-color="#92992f"/><stop offset=".667" stop-color="#998927"/><stop offset=".722" stop-color="#996718"/><stop offset=".889" stop-color="#993301"/><stop offset="1" stop-color="#992100"/></linearGradient><linearGradient id="o85" gradientUnits="userSpaceOnUse" x1="1064.5" x2="1498.3"><stop offset="0" stop-color="#00995f"/><stop offset=".167" stop-color="#009958"/><stop offset=".333" stop-color="#00994e"/><stop offset=".417" stop-color="#009947"/><stop offset=".528" stop-color="#43993e"/><stop offset=".639" stop-color="#999630"/><stop offset=".694" stop-color="#996f1e"/><stop offset=".806" stop-color="#99430a"/><stop offset=".972" stop-color="#992200"/><stop offset="1" stop-color="#991f00"/></linearGradient><linearGradient id="o86" gradientUnits="userSpaceOnUse" x1="1065.1" x2="1502.0"><stop offset="0" stop-color="#009961"/><stop offset=".167" stop-color="#00995a"/><stop offset=".333" stop-color="#009950"/><stop offset=".417" stop-color="#02994a"/><stop offset=".583" stop-color="#75993a"/><stop offset=".611" stop-color="#8d9937"/><stop offset=".639" stop-color="#998c2f"/><stop offset=".694" stop-color="#99681e"/><stop offset=".861" stop-color="#993204"/><stop offset="1" stop-color="#991d00"/></linearGradient><linearGradient id="o87" gradientUnits="userSpaceOnUse" x1="1065.6" x2="1505.7"><stop offset="0" stop-color="#009963"/><stop offset=".162" stop-color="#00995c"/><stop offset=".324" stop-color="#009953"/><stop offset=".405" stop-color="#00994d"/><stop offset=".568" stop-color="#70993e"/><stop offset=".595" stop-color="#88993b"/><stop offset=".622" stop-color="#999235"/><stop offset=".676" stop-color="#996c23"/><stop offset=".811" stop-color="#993a09"/><stop offset=".973" stop-color="#991d00"/><stop offset="1" stop-color="#991a00"/></linearGradient><linearGradient id="o88" gradientUnits="userSpaceOnUse" x1="1066.2" x2="1509.4"><stop offset="0" stop-color="#009965"/><stop offset=".162" stop-color="#00995f"/><stop offset=".324" stop-color="#009956"/><stop offset=".405" stop-color="#039950"/><stop offset=".541" stop-color="#629944"/><stop offset=".595" stop-color="#91993e"/><stop offset=".622" stop-color="#998835"/><stop offset=".676" stop-color="#996522"/><stop offset=".784" stop-color="#993d0d"/><stop offset=".946" stop-color="#991f00"/><stop offset="1" stop-color="#991800"/></linearGradient><linearGradient id="o89" gradientUnits="userSpaceOnUse" x1="1066.8" x2="1513.1"><stop offset="0" stop-color="#009968"/><stop offset=".162" stop-color="#009961"/><stop offset=".324" stop-color="#009958"/><stop offset=".378" stop-color="#009955"/><stop offset=".405" stop-color="#079953"/><stop offset=".514" stop-color="#53994a"/><stop offset=".595" stop-color="#999740"/><stop offset=".649" stop-color="#996e2a"/><stop offset=".73" stop-color="#994916"/><stop offset=".892" stop-color="#992401"/><stop offset="1" stop-color="#991600"/></linearGradient><linearGradient id="o90" gradientUnits="userSpaceOnUse" x1="1067.4" x2="1516.8"><stop offset="0" stop-color="#00996a"/><stop offset=".162" stop-color="#009964"/><stop offset=".324" stop-color="#00995b"/><stop offset=".378" stop-color="#009958"/><stop offset=".405" stop-color="#0b9956"/><stop offset=".541" stop-color="#72994a"/><stop offset=".568" stop-color="#8b9947"/><stop offset=".595" stop-color="#998d3e"/><stop offset=".649" stop-color="#996729"/><stop offset=".784" stop-color="#99360d"/><stop offset=".946" stop-color="#991a00"/><stop offset="1" stop-color="#991400"/></linearGradient><linearGradient id="o91" gradientUnits="userSpaceOnUse" x1="1068.0" x2="1520.5"><stop offset="0" stop-color="#00996d"/><stop offset=".158" stop-color="#009967"/><stop offset=".316" stop-color="#00995e"/><stop offset=".368" stop-color="#00995b"/><stop offset=".395" stop-color="#089959"/><stop offset=".5" stop-color="#569951"/><stop offset=".553" stop-color="#86994c"/><stop offset=".579" stop-color="#999246"/><stop offset=".632" stop-color="#996a2e"/><stop offset=".737" stop-color="#993e14"/><stop offset=".895" stop-color="#991f02"/><stop offset="1" stop-color="#991300"/></linearGradient><linearGradient id="o92" gradientUnits="userSpaceOnUse" x1="1068.6" x2="1524.2"><stop offset="0" stop-color="#00996f"/><stop offset=".158" stop-color="#009969"/><stop offset=".316" stop-color="#009961"/><stop offset=".368" stop-color="#00995e"/><stop offset=".474" stop-color="#489956"/><stop offset=".553" stop-color="#90994f"/><stop offset=".579" stop-color="#998844"/><stop offset=".658" stop-color="#995625"/><stop offset=".816" stop-color="#99290a"/><stop offset=".974" stop-color="#991300"/><stop offset="1" stop-color="#991100"/></linearGradient><linearGradient id="o93" gradientUnits="userSpaceOnUse" x1="1069.2" x2="1527.9"><stop offset="0" stop-color="#009971"/><stop offset=".158" stop-color="#00996c"/><stop offset=".316" stop-color="#009965"/><stop offset=".368" stop-color="#009961"/><stop offset=".5" stop-color="#669958"/><stop offset=".553" stop-color="#999852"/><stop offset=".579" stop-color="#997f43"/><stop offset=".684" stop-color="#99471f"/><stop offset=".842" stop-color="#992207"/><stop offset="1" stop-color="#990f00"/></linearGradient><linearGradient id="o94" gradientUnits="userSpaceOnUse" x1="1069.8" x2="1531.6"><stop offset="0" stop-color="#009974"/><stop offset=".158" stop-color="#00996f"/><stop offset=".316" stop-color="#009968"/><stop offset=".368" stop-color="#049965"/><stop offset=".5" stop-color="#6e995b"/><stop offset=".526" stop-color="#899959"/><stop offset=".553" stop-color="#998e50"/><stop offset=".605" stop-color="#996635"/><stop offset=".711" stop-color="#993a19"/><stop offset=".868" stop-color="#991b04"/><stop offset="1" stop-color="#990d00"/></linearGradient><linearGradient id="o95" gradientUnits="userSpaceOnUse" x1="1070.4" x2="1535.3"><stop offset="0" stop-color="#009977"/><stop offset=".154" stop-color="#009972"/><stop offset=".308" stop-color="#00996b"/><stop offset=".359" stop-color="#019968"/><stop offset=".487" stop-color="#6b9960"/><stop offset=".513" stop-color="#85995e"/><stop offset=".538" stop-color="#999257"/><stop offset=".59" stop-color="#99683b"/><stop offset=".692" stop-color="#993c1c"/><stop offset=".846" stop-color="#991c07"/><stop offset="1" stop-color="#990b00"/></linearGradient><linearGradient id="o96" gradientUnits="userSpaceOnUse" x1="1071.1" x2="1539.0"><stop offset="0" stop-color="#00997a"/><stop offset=".154" stop-color="#009975"/><stop offset=".308" stop-color="#00996f"/><stop offset=".359" stop-color="#05996c"/><stop offset=".487" stop-color="#739964"/><stop offset=".513" stop-color="#8f9962"/><stop offset=".538" stop-color="#998855"/><stop offset=".59" stop-color="#99623a"/><stop offset=".718" stop-color="#993117"/><stop offset=".872" stop-color="#991604"/><stop offset="1" stop-color="#990a00"/></linearGradient><linearGradient id="o97" gradientUnits="userSpaceOnUse" x1="1071.7" x2="1542.8"><stop offset="0" stop-color="#00997d"/><stop offset=".154" stop-color="#009979"/><stop offset=".308" stop-color="#009973"/><stop offset=".333" stop-color="#009971"/><stop offset=".359" stop-color="#0a9970"/><stop offset=".462" stop-color="#62996a"/><stop offset=".513" stop-color="#999866"/><stop offset=".564" stop-color="#996b44"/><stop offset=".641" stop-color="#994428"/><stop offset=".795" stop-color="#991f0c"/><stop offset=".949" stop-color="#990d00"/><stop offset="1" stop-color="#990800"/></linearGradient><linearGradient id="o98" gradientUnits="userSpaceOnUse" x1="1072.4" x2="1546.5"><stop offset="0" stop-color="#009980"/><stop offset=".15" stop-color="#00997c"/><stop offset=".3" stop-color="#009977"/><stop offset=".325" stop-color="#009976"/><stop offset=".35" stop-color="#089974"/><stop offset=".45" stop-color="#5f996f"/><stop offset=".5" stop-color="#95996b"/><stop offset=".55" stop-color="#996e4a"/><stop offset=".6" stop-color="#995034"/><stop offset=".75" stop-color="#992412"/><stop offset=".9" stop-color="#991002"/><stop offset="1" stop-color="#990700"/></linearGradient><linearGradient id="o99" gradientUnits="userSpaceOnUse" x1="1073.1" x2="1550.2"><stop offset="0" stop-color="#009983"/><stop offset=".15" stop-color="#00997f"/><stop offset=".3" stop-color="#00997a"/><stop offset=".325" stop-color="#009979"/><stop offset=".35" stop-color="#0d9979"/><stop offset=".425" stop-color="#4e9975"/><stop offset=".475" stop-color="#839972"/><stop offset=".5" stop-color="#99926b"/><stop offset=".525" stop-color="#997958"/><stop offset=".625" stop-color="#99412c"/><stop offset=".775" stop-color="#991d0f"/><stop offset=".925" stop-color="#990b01"/><stop offset="1" stop-color="#990500"/></linearGradient><linearGradient id="o100" gradientUnits="userSpaceOnUse" x1="1073.8" x2="1553.9"><stop offset="0" stop-color="#009986"/><stop offset=".15" stop-color="#009983"/><stop offset=".3" stop-color="#00997f"/><stop offset=".325" stop-color="#00997d"/><stop offset=".4" stop-color="#3d997b"/><stop offset=".475" stop-color="#8e9977"/><stop offset=".5" stop-color="#998868"/><stop offset=".55" stop-color="#995f47"/><stop offset=".675" stop-color="#992e1f"/><stop offset=".825" stop-color="#991409"/><stop offset=".975" stop-color="#990500"/><stop offset="1" stop-color="#990400"/></linearGradient><linearGradient id="o101" gradientUnits="userSpaceOnUse" x1="1074.5" x2="1557.6"><stop offset="0" stop-color="#009989"/><stop offset=".15" stop-color="#009986"/><stop offset=".3" stop-color="#009983"/><stop offset=".325" stop-color="#029982"/><stop offset=".425" stop-color="#5e997f"/><stop offset=".475" stop-color="#98997c"/><stop offset=".5" stop-color="#997e65"/><stop offset=".55" stop-color="#995946"/><stop offset=".65" stop-color="#993124"/><stop offset=".8" stop-color="#99150c"/><stop offset=".95" stop-color="#990600"/><stop offset="1" stop-color="#990200"/></linearGradient><linearGradient id="o102" gradientUnits="userSpaceOnUse" x1="1075.2" x2="1561.4"><stop offset="0" stop-color="#00998c"/><stop offset=".146" stop-color="#00998a"/><stop offset=".293" stop-color="#009988"/><stop offset=".317" stop-color="#009987"/><stop offset=".415" stop-color="#5c9984"/><stop offset=".463" stop-color="#959982"/><stop offset=".512" stop-color="#996b5a"/><stop offset=".561" stop-color="#994d40"/><stop offset=".707" stop-color="#992119"/><stop offset=".854" stop-color="#990d07"/><stop offset="1" stop-color="#990100"/></linearGradient><linearGradient id="o103" gradientUnits="userSpaceOnUse" x1="1075.9" x2="1565.1"><stop offset="0" stop-color="#00998f"/><stop offset=".146" stop-color="#00998e"/><stop offset=".293" stop-color="#00998c"/><stop offset=".317" stop-color="#05998c"/><stop offset=".415" stop-color="#649989"/><stop offset=".439" stop-color="#829989"/><stop offset=".463" stop-color="#999182"/><stop offset=".488" stop-color="#99776a"/><stop offset=".537" stop-color="#99554a"/><stop offset=".659" stop-color="#992822"/><stop offset=".805" stop-color="#99100b"/><stop offset=".951" stop-color="#990300"/><stop offset="1" stop-color="#990000"/></linearGradient><linearGradient id="o104" gradientUnits="userSpaceOnUse" x1="1076.6" x2="1568.9"><stop offset="0" stop-color="#009993"/><stop offset=".146" stop-color="#009992"/><stop offset=".293" stop-color="#009991"/><stop offset=".317" stop-color="#0a9991"/><stop offset=".415" stop-color="#6e998f"/><stop offset=".439" stop-color="#8c998f"/><stop offset=".463" stop-color="#99867d"/><stop offset=".512" stop-color="#995d56"/><stop offset=".634" stop-color="#992b27"/><stop offset=".78" stop-color="#99110e"/><stop offset=".927" stop-color="#990301"/><stop offset="1" stop-color="#990000"/></linearGradient><linearGradient id="o105" gradientUnits="userSpaceOnUse" x1="1077.3" x2="1572.6"><stop offset="0" stop-color="#009997"/><stop offset=".146" stop-color="#009997"/><stop offset=".293" stop-color="#009996"/><stop offset=".317" stop-color="#0f9996"/><stop offset=".415" stop-color="#779995"/><stop offset=".439" stop-color="#989995"/><stop offset=".488" stop-color="#996765"/><stop offset=".537" stop-color="#994947"/><stop offset=".683" stop-color="#991d1c"/><stop offset=".829" stop-color="#990a09"/><stop offset=".976" stop-color="#990000"/><stop offset="1" stop-color="#990000"/></linearGradient><linearGradient id="o106" gradientUnits="userSpaceOnUse" x1="1078.1" x2="1576.3"><stop offset="0" stop-color="#009899"/><stop offset=".143" stop-color="#009799"/><stop offset=".286" stop-color="#009799"/><stop offset=".31" stop-color="#0d9799"/><stop offset=".381" stop-color="#569699"/><stop offset=".429" stop-color="#929599"/><stop offset=".452" stop-color="#997f82"/><stop offset=".476" stop-color="#99686b"/><stop offset=".524" stop-color="#994a4c"/><stop offset=".667" stop-color="#991e1f"/><stop offset=".81" stop-color="#990a0b"/><stop offset=".952" stop-color="#990000"/><stop offset="1" stop-color="#990000"/></linearGradient><linearGradient id="o107" gradientUnits="userSpaceOnUse" x1="1078.8" x2="1580.0"><stop offset="0" stop-color="#009499"/><stop offset=".143" stop-color="#009399"/><stop offset=".286" stop-color="#009199"/><stop offset=".333" stop-color="#289199"/><stop offset=".405" stop-color="#788f99"/><stop offset=".429" stop-color="#978f99"/><stop offset=".476" stop-color="#996169"/><stop offset=".548" stop-color="#993b40"/><stop offset=".69" stop-color="#99171b"/><stop offset=".833" stop-color="#990609"/><stop offset=".976" stop-color="#990000"/><stop offset="1" stop-color="#990000"/></linearGradient><linearGradient id="o108" gradientUnits="userSpaceOnUse" x1="1079.5" x2="1583.7"><stop offset="0" stop-color="#009199"/><stop offset=".143" stop-color="#008f99"/><stop offset=".286" stop-color="#018c99"/><stop offset=".357" stop-color="#458b99"/><stop offset=".429" stop-color="#998696"/><stop offset=".452" stop-color="#996d7b"/><stop offset=".5" stop-color="#994c56"/><stop offset=".643" stop-color="#991d23"/><stop offset=".786" stop-color="#99090e"/><stop offset=".929" stop-color="#990002"/><stop offset="1" stop-color="#990000"/></linearGradient><linearGradient id="o109" gradientUnits="userSpaceOnUse" x1="1080.3" x2="1587.4"><stop offset="0" stop-color="#008d99"/><stop offset=".143" stop-color="#008b99"/><stop offset=".262" stop-color="#008899"/><stop offset=".286" stop-color="#058799"/><stop offset=".381" stop-color="#658499"/><stop offset=".405" stop-color="#828399"/><stop offset=".429" stop-color="#997c91"/><stop offset=".452" stop-color="#996577"/><stop offset=".5" stop-color="#994655"/><stop offset=".643" stop-color="#991a23"/><stop offset=".786" stop-color="#99070e"/><stop offset=".929" stop-color="#990002"/><stop offset="1" stop-color="#990000"/></linearGradient><linearGradient id="o110" gradientUnits="userSpaceOnUse" x1="1081.1" x2="1591.1"><stop offset="0" stop-color="#008999"/><stop offset=".14" stop-color="#008699"/><stop offset=".256" stop-color="#008399"/><stop offset=".279" stop-color="#048399"/><stop offset=".372" stop-color="#5f7f99"/><stop offset=".419" stop-color="#987c99"/><stop offset=".465" stop-color="#99546a"/><stop offset=".535" stop-color="#993243"/><stop offset=".674" stop-color="#99131d"/><stop offset=".814" stop-color="#99030b"/><stop offset=".953" stop-color="#990001"/><stop offset="1" stop-color="#990000"/></linearGradient><linearGradient id="o111" gradientUnits="userSpaceOnUse" x1="1081.8" x2="1594.8"><stop offset="0" stop-color="#008699"/><stop offset=".14" stop-color="#008399"/><stop offset=".256" stop-color="#007f99"/><stop offset=".279" stop-color="#087d99"/><stop offset=".372" stop-color="#647999"/><stop offset=".419" stop-color="#997395"/><stop offset=".442" stop-color="#995e7b"/><stop offset=".488" stop-color="#994158"/><stop offset=".628" stop-color="#991826"/><stop offset=".767" stop-color="#990510"/><stop offset=".907" stop-color="#990004"/><stop offset="1" stop-color="#990000"/></linearGradient><linearGradient id="o112" gradientUnits="userSpaceOnUse" x1="1082.6" x2="1598.6"><stop offset="0" stop-color="#008399"/><stop offset=".14" stop-color="#007f99"/><stop offset=".256" stop-color="#007a99"/><stop offset=".279" stop-color="#0d7999"/><stop offset=".372" stop-color="#687499"/><stop offset=".395" stop-color="#847299"/><stop offset=".419" stop-color="#996a91"/><stop offset=".465" stop-color="#994865"/><stop offset=".558" stop-color="#992438"/><stop offset=".698" stop-color="#990b19"/><stop offset=".837" stop-color="#990009"/><stop offset=".977" stop-color="#990000"/><stop offset="1" stop-color="#990000"/></linearGradient><linearGradient id="o113" gradientUnits="userSpaceOnUse" x1="1083.4" x2="1602.3"><stop offset="0" stop-color="#007f99"/><stop offset=".14" stop-color="#007b99"/><stop offset=".256" stop-color="#007699"/><stop offset=".326" stop-color="#3b7199"/><stop offset=".395" stop-color="#886d99"/><stop offset=".419" stop-color="#99628c"/><stop offset=".465" stop-color="#994364"/><stop offset=".558" stop-color="#992138"/><stop offset=".698" stop-color="#990919"/><stop offset=".837" stop-color="#990009"/><stop offset=".977" stop-color="#990000"/><stop offset="1" stop-color="#990000"/></linearGradient><linearGradient id="o114" gradientUnits="userSpaceOnUse" x1="1084.2" x2="1606.0"><stop offset="0" stop-color="#007c99"/><stop offset=".14" stop-color="#007799"/><stop offset=".256" stop-color="#017199"/><stop offset=".372" stop-color="#716999"/><stop offset=".395" stop-color="#8d6799"/><stop offset=".419" stop-color="#995a89"/><stop offset=".465" stop-color="#993d62"/><stop offset=".558" stop-color="#991e37"/><stop offset=".698" stop-color="#990719"/><stop offset=".837" stop-color="#990009"/><stop offset=".977" stop-color="#990000"/><stop offset="1" stop-color="#990000"/></linearGradient><linearGradient id="o115" gradientUnits="userSpaceOnUse" x1="1085.0" x2="1609.7"><stop offset="0" stop-color="#007999"/><stop offset=".136" stop-color="#007399"/><stop offset=".25" stop-color="#016d99"/><stop offset=".341" stop-color="#536799"/><stop offset=".386" stop-color="#866299"/><stop offset=".409" stop-color="#995b90"/><stop offset=".455" stop-color="#993d67"/><stop offset=".545" stop-color="#991e3b"/><stop offset=".682" stop-color="#99071b"/><stop offset=".818" stop-color="#99000b"/><stop offset=".955" stop-color="#990001"/><stop offset="1" stop-color="#990000"/></linearGradient><linearGradient id="o116" gradientUnits="userSpaceOnUse" x1="1085.8" x2="1613.4"><stop offset="0" stop-color="#007699"/><stop offset=".136" stop-color="#007099"/><stop offset=".227" stop-color="#006a99"/><stop offset=".25" stop-color="#046999"/><stop offset=".364" stop-color="#705f99"/><stop offset=".386" stop-color="#8b5d99"/><stop offset=".409" stop-color="#99538c"/><stop offset=".455" stop-color="#993865"/><stop offset=".568" stop-color="#991633"/><stop offset=".705" stop-color="#990318"/><stop offset=".841" stop-color="#990009"/><stop offset=".977" stop-color="#990000"/><stop offset="1" stop-color="#990000"/></linearGradient><linearGradient id="o117" gradientUnits="userSpaceOnUse" x1="1086.7" x2="1617.1"><stop offset="0" stop-color="#007399"/><stop offset=".136" stop-color="#006c99"/><stop offset=".227" stop-color="#006699"/><stop offset=".25" stop-color="#086599"/><stop offset=".364" stop-color="#745b99"/><stop offset=".386" stop-color="#8f5899"/><stop offset=".409" stop-color="#994c88"/><stop offset=".455" stop-color="#993463"/><stop offset=".523" stop-color="#991d41"/><stop offset=".659" stop-color="#99061f"/><stop offset=".795" stop-color="#99000d"/><stop offset=".932" stop-color="#990002"/><stop offset="1" stop-color="#990000"/></linearGradient><linearGradient id="o118" gradientUnits="userSpaceOnUse" x1="1087.5" x2="1620.8"><stop offset="0" stop-color="#007099"/><stop offset=".136" stop-color="#006899"/><stop offset=".227" stop-color="#006299"/><stop offset=".25" stop-color="#0c6199"/><stop offset=".341" stop-color="#5f5899"/><stop offset=".386" stop-color="#935399"/><stop offset=".455" stop-color="#992f61"/><stop offset=".591" stop-color="#990d2c"/><stop offset=".727" stop-color="#990014"/><stop offset=".864" stop-color="#990007"/><stop offset="1" stop-color="#990000"/></linearGradient><linearGradient id="o119" gradientUnits="userSpaceOnUse" x1="1088.4" x2="1624.5"><stop offset="0" stop-color="#006c99"/><stop offset=".133" stop-color="#006599"/><stop offset=".222" stop-color="#005f99"/><stop offset=".244" stop-color="#0b5d99"/><stop offset=".356" stop-color="#735299"/><stop offset=".378" stop-color="#8d4f99"/><stop offset=".4" stop-color="#99468b"/><stop offset=".467" stop-color="#992658"/><stop offset=".6" stop-color="#990a2a"/><stop offset=".733" stop-color="#990014"/><stop offset=".867" stop-color="#990007"/><stop offset="1" stop-color="#990000"/></linearGradient><linearGradient id="o120" gradientUnits="userSpaceOnUse" x1="1089.3" x2="1617.6"><stop offset="0" stop-color="#006999"/><stop offset=".136" stop-color="#006199"/><stop offset=".227" stop-color="#005b99"/><stop offset=".318" stop-color="#4a5299"/><stop offset=".386" stop-color="#924a99"/><stop offset=".409" stop-color="#993f87"/><stop offset=".455" stop-color="#992963"/><stop offset=".591" stop-color="#990a2e"/><stop offset=".727" stop-color="#990016"/><stop offset=".864" stop-color="#990009"/><stop offset="1" stop-color="#990000"/></linearGradient><linearGradient id="o121" gradientUnits="userSpaceOnUse" x1="1090.1" x2="1609.6"><stop offset="0" stop-color="#006699"/><stop offset=".14" stop-color="#005e99"/><stop offset=".233" stop-color="#025799"/><stop offset=".326" stop-color="#4e4e99"/><stop offset=".395" stop-color="#974699"/><stop offset=".442" stop-color="#992e70"/><stop offset=".535" stop-color="#991341"/><stop offset=".674" stop-color="#990120"/><stop offset=".814" stop-color="#99000f"/><stop offset=".953" stop-color="#990004"/><stop offset="1" stop-color="#990001"/></linearGradient><linearGradient id="o122" gradientUnits="userSpaceOnUse" x1="1091.0" x2="1601.6"><stop offset="0" stop-color="#006499"/><stop offset=".14" stop-color="#005b99"/><stop offset=".233" stop-color="#025399"/><stop offset=".349" stop-color="#614899"/><stop offset=".395" stop-color="#914299"/><stop offset=".419" stop-color="#993889"/><stop offset=".488" stop-color="#991e59"/><stop offset=".628" stop-color="#99052b"/><stop offset=".767" stop-color="#990016"/><stop offset=".907" stop-color="#990008"/><stop offset="1" stop-color="#990002"/></linearGradient><linearGradient id="o123" gradientUnits="userSpaceOnUse" x1="1091.9" x2="1593.7"><stop offset="0" stop-color="#006199"/><stop offset=".143" stop-color="#005899"/><stop offset=".214" stop-color="#005299"/><stop offset=".238" stop-color="#055099"/><stop offset=".357" stop-color="#654499"/><stop offset=".405" stop-color="#953d99"/><stop offset=".476" stop-color="#992164"/><stop offset=".619" stop-color="#990530"/><stop offset=".762" stop-color="#990018"/><stop offset=".905" stop-color="#99000a"/><stop offset="1" stop-color="#990004"/></linearGradient><linearGradient id="o124" gradientUnits="userSpaceOnUse" x1="1092.9" x2="1585.7"><stop offset="0" stop-color="#005e99"/><stop offset=".146" stop-color="#005599"/><stop offset=".22" stop-color="#004f99"/><stop offset=".244" stop-color="#094c99"/><stop offset=".366" stop-color="#694099"/><stop offset=".415" stop-color="#993999"/><stop offset=".463" stop-color="#992570"/><stop offset=".585" stop-color="#990a3b"/><stop offset=".732" stop-color="#99001e"/><stop offset=".878" stop-color="#99000e"/><stop offset="1" stop-color="#990005"/></linearGradient><linearGradient id="o125" gradientUnits="userSpaceOnUse" x1="1093.8" x2="1577.7"><stop offset="0" stop-color="#005b99"/><stop offset=".15" stop-color="#005199"/><stop offset=".225" stop-color="#004b99"/><stop offset=".3" stop-color="#2f4499"/><stop offset=".4" stop-color="#853899"/><stop offset=".425" stop-color="#993395"/><stop offset=".475" stop-color="#99206e"/><stop offset=".575" stop-color="#990b42"/><stop offset=".725" stop-color="#990022"/><stop offset=".875" stop-color="#990010"/><stop offset="1" stop-color="#990007"/></linearGradient><linearGradient id="o126" gradientUnits="userSpaceOnUse" x1="1094.7" x2="1569.8"><stop offset="0" stop-color="#005899"/><stop offset=".15" stop-color="#004e99"/><stop offset=".225" stop-color="#004899"/><stop offset=".325" stop-color="#403e99"/><stop offset=".425" stop-color="#973299"/><stop offset=".5" stop-color="#991964"/><stop offset=".65" stop-color="#990132"/><stop offset=".8" stop-color="#99001a"/><stop offset=".95" stop-color="#99000c"/><stop offset="1" stop-color="#990008"/></linearGradient><linearGradient id="o127" gradientUnits="userSpaceOnUse" x1="1095.7" x2="1561.8"><stop offset="0" stop-color="#005599"/><stop offset=".154" stop-color="#004b99"/><stop offset=".231" stop-color="#004499"/><stop offset=".385" stop-color="#6d3499"/><stop offset=".436" stop-color="#992c97"/><stop offset=".487" stop-color="#991c70"/><stop offset=".59" stop-color="#990844"/><stop offset=".744" stop-color="#990023"/><stop offset=".897" stop-color="#990012"/><stop offset="1" stop-color="#99000a"/></linearGradient><linearGradient id="o128" gradientUnits="userSpaceOnUse" x1="1096.7" x2="1553.8"><stop offset="0" stop-color="#005399"/><stop offset=".158" stop-color="#004899"/><stop offset=".237" stop-color="#034199"/><stop offset=".395" stop-color="#713099"/><stop offset=".421" stop-color="#882d99"/><stop offset=".447" stop-color="#992892"/><stop offset=".5" stop-color="#99176e"/><stop offset=".632" stop-color="#99023c"/><stop offset=".789" stop-color="#990020"/><stop offset=".947" stop-color="#990010"/><stop offset="1" stop-color="#99000c"/></linearGradient><linearGradient id="o129" gradientUnits="userSpaceOnUse" x1="1097.7" x2="1545.9"><stop offset="0" stop-color="#005099"/><stop offset=".162" stop-color="#004599"/><stop offset=".216" stop-color="#004099"/><stop offset=".243" stop-color="#073e99"/><stop offset=".378" stop-color="#603099"/><stop offset=".432" stop-color="#8c2999"/><stop offset=".459" stop-color="#99228f"/><stop offset=".514" stop-color="#99146b"/><stop offset=".649" stop-color="#99003b"/><stop offset=".811" stop-color="#99001f"/><stop offset=".973" stop-color="#990010"/><stop offset="1" stop-color="#99000d"/></linearGradient><linearGradient id="o130" gradientUnits="userSpaceOnUse" x1="1098.7" x2="1537.9"><stop offset="0" stop-color="#004d99"/><stop offset=".162" stop-color="#004299"/><stop offset=".216" stop-color="#003e99"/><stop offset=".243" stop-color="#073b99"/><stop offset=".378" stop-color="#5c2d99"/><stop offset=".459" stop-color="#992295"/><stop offset=".514" stop-color="#991370"/><stop offset=".649" stop-color="#99003e"/><stop offset=".811" stop-color="#990022"/><stop offset=".973" stop-color="#990011"/><stop offset="1" stop-color="#990010"/></linearGradient><linearGradient id="o131" gradientUnits="userSpaceOnUse" x1="1099.7" x2="1529.9"><stop offset="0" stop-color="#004a99"/><stop offset=".167" stop-color="#003f99"/><stop offset=".222" stop-color="#003b99"/><stop offset=".306" stop-color="#293399"/><stop offset=".444" stop-color="#8b2299"/><stop offset=".472" stop-color="#991d91"/><stop offset=".556" stop-color="#990b61"/><stop offset=".722" stop-color="#990032"/><stop offset=".889" stop-color="#99001b"/><stop offset="1" stop-color="#990011"/></linearGradient><linearGradient id="o132" gradientUnits="userSpaceOnUse" x1="1100.7" x2="1522.0"><stop offset="0" stop-color="#004899"/><stop offset=".171" stop-color="#003c99"/><stop offset=".229" stop-color="#003799"/><stop offset=".4" stop-color="#642699"/><stop offset=".457" stop-color="#8f1f99"/><stop offset=".486" stop-color="#99188d"/><stop offset=".543" stop-color="#990c6b"/><stop offset=".714" stop-color="#990037"/><stop offset=".886" stop-color="#99001d"/><stop offset="1" stop-color="#990013"/></linearGradient><linearGradient id="o133" gradientUnits="userSpaceOnUse" x1="1101.8" x2="1514.0"><stop offset="0" stop-color="#004699"/><stop offset=".176" stop-color="#003a99"/><stop offset=".235" stop-color="#023499"/><stop offset=".412" stop-color="#682299"/><stop offset=".471" stop-color="#931a99"/><stop offset=".588" stop-color="#99055d"/><stop offset=".765" stop-color="#990031"/><stop offset=".941" stop-color="#99001a"/><stop offset="1" stop-color="#990015"/></linearGradient><linearGradient id="o134" gradientUnits="userSpaceOnUse" x1="1102.9" x2="1506.0"><stop offset="0" stop-color="#004399"/><stop offset=".176" stop-color="#003799"/><stop offset=".235" stop-color="#023299"/><stop offset=".412" stop-color="#642099"/><stop offset=".471" stop-color="#8d1999"/><stop offset=".5" stop-color="#99138f"/><stop offset=".618" stop-color="#990157"/><stop offset=".794" stop-color="#99002f"/><stop offset=".971" stop-color="#99001a"/><stop offset="1" stop-color="#990017"/></linearGradient><linearGradient id="o135" gradientUnits="userSpaceOnUse" x1="1104.0" x2="1498.1"><stop offset="0" stop-color="#004199"/><stop offset=".182" stop-color="#003499"/><stop offset=".242" stop-color="#052f99"/><stop offset=".424" stop-color="#681c99"/><stop offset=".485" stop-color="#911599"/><stop offset=".515" stop-color="#990f8b"/><stop offset=".606" stop-color="#99015f"/><stop offset=".788" stop-color="#990033"/><stop offset=".97" stop-color="#99001c"/><stop offset="1" stop-color="#99001a"/></linearGradient><linearGradient id="o136" gradientUnits="userSpaceOnUse" x1="1105.1" x2="1490.1"><stop offset="0" stop-color="#003e99"/><stop offset=".188" stop-color="#003199"/><stop offset=".219" stop-color="#002f99"/><stop offset=".25" stop-color="#082c99"/><stop offset=".406" stop-color="#591d99"/><stop offset=".5" stop-color="#961199"/><stop offset=".594" stop-color="#990269"/><stop offset=".781" stop-color="#990037"/><stop offset=".969" stop-color="#99001f"/><stop offset="1" stop-color="#99001c"/></linearGradient><linearGradient id="o137" gradientUnits="userSpaceOnUse" x1="1106.2" x2="1482.1"><stop offset="0" stop-color="#003b99"/><stop offset=".194" stop-color="#002e99"/><stop offset=".226" stop-color="#002c99"/><stop offset=".419" stop-color="#5e1999"/><stop offset=".516" stop-color="#990d98"/><stop offset=".581" stop-color="#990374"/><stop offset=".774" stop-color="#99003c"/><stop offset=".968" stop-color="#990022"/><stop offset="1" stop-color="#99001f"/></linearGradient><linearGradient id="o138" gradientUnits="userSpaceOnUse" x1="1107.4" x2="1474.2"><stop offset="0" stop-color="#003999"/><stop offset=".194" stop-color="#002c99"/><stop offset=".226" stop-color="#002999"/><stop offset=".419" stop-color="#5a1799"/><stop offset=".516" stop-color="#940c99"/><stop offset=".677" stop-color="#990056"/><stop offset=".871" stop-color="#990030"/><stop offset="1" stop-color="#990021"/></linearGradient><linearGradient id="o139" gradientUnits="userSpaceOnUse" x1="1108.6" x2="1466.2"><stop offset="0" stop-color="#003799"/><stop offset=".2" stop-color="#002999"/><stop offset=".233" stop-color="#012799"/><stop offset=".433" stop-color="#5e1499"/><stop offset=".533" stop-color="#980899"/><stop offset=".667" stop-color="#99005e"/><stop offset=".867" stop-color="#990034"/><stop offset="1" stop-color="#990024"/></linearGradient><linearGradient id="o140" gradientUnits="userSpaceOnUse" x1="1109.9" x2="1458.2"><stop offset="0" stop-color="#003499"/><stop offset=".207" stop-color="#002699"/><stop offset=".241" stop-color="#042499"/><stop offset=".448" stop-color="#621199"/><stop offset=".552" stop-color="#990495"/><stop offset=".655" stop-color="#990067"/><stop offset=".862" stop-color="#990038"/><stop offset="1" stop-color="#990026"/></linearGradient><linearGradient id="o141" gradientUnits="userSpaceOnUse" x1="1111.1" x2="1450.2"><stop offset="0" stop-color="#003299"/><stop offset=".214" stop-color="#002499"/><stop offset=".429" stop-color="#541199"/><stop offset=".536" stop-color="#8c0599"/><stop offset=".571" stop-color="#990191"/><stop offset=".714" stop-color="#99005a"/><stop offset=".929" stop-color="#990032"/><stop offset="1" stop-color="#990029"/></linearGradient><linearGradient id="o142" gradientUnits="userSpaceOnUse" x1="1112.4" x2="1442.3"><stop offset="0" stop-color="#003099"/><stop offset=".222" stop-color="#002199"/><stop offset=".444" stop-color="#580e99"/><stop offset=".556" stop-color="#910299"/><stop offset=".593" stop-color="#99008d"/><stop offset=".704" stop-color="#990062"/><stop offset=".926" stop-color="#990036"/><stop offset="1" stop-color="#99002d"/></linearGradient><linearGradient id="o143" gradientUnits="userSpaceOnUse" x1="1113.7" x2="1434.3"><stop offset="0" stop-color="#002e99"/><stop offset=".222" stop-color="#001f99"/><stop offset=".444" stop-color="#550d99"/><stop offset=".556" stop-color="#8b0199"/><stop offset=".593" stop-color="#990094"/><stop offset=".741" stop-color="#99005d"/><stop offset=".963" stop-color="#990035"/><stop offset="1" stop-color="#990030"/></linearGradient><linearGradient id="o144" gradientUnits="userSpaceOnUse" x1="1115.0" x2="1426.3"><stop offset="0" stop-color="#002b99"/><stop offset=".231" stop-color="#011d99"/><stop offset=".462" stop-color="#580a99"/><stop offset=".577" stop-color="#8f0099"/><stop offset=".615" stop-color="#99008f"/><stop offset=".769" stop-color="#99005b"/><stop offset="1" stop-color="#990034"/></linearGradient><linearGradient id="o145" gradientUnits="userSpaceOnUse" x1="1116.4" x2="1418.4"><stop offset="0" stop-color="#002999"/><stop offset=".2" stop-color="#001d99"/><stop offset=".24" stop-color="#041a99"/><stop offset=".48" stop-color="#5c0699"/><stop offset=".6" stop-color="#940099"/><stop offset=".8" stop-color="#990059"/><stop offset="1" stop-color="#990037"/></linearGradient><linearGradient id="o146" gradientUnits="userSpaceOnUse" x1="1117.7" x2="1410.4"><stop offset="0" stop-color="#002799"/><stop offset=".208" stop-color="#001a99"/><stop offset=".458" stop-color="#500799"/><stop offset=".625" stop-color="#980099"/><stop offset=".75" stop-color="#99006b"/><stop offset="1" stop-color="#99003b"/></linearGradient><linearGradient id="o147" gradientUnits="userSpaceOnUse" x1="1119.0" x2="1402.4"><stop offset="0" stop-color="#002599"/><stop offset=".208" stop-color="#001899"/><stop offset=".458" stop-color="#4c0599"/><stop offset=".625" stop-color="#910099"/><stop offset=".667" stop-color="#99008f"/><stop offset=".833" stop-color="#99005c"/><stop offset="1" stop-color="#990040"/></linearGradient><linearGradient id="o148" gradientUnits="userSpaceOnUse" x1="1120.4" x2="1394.5"><stop offset="0" stop-color="#002299"/><stop offset=".217" stop-color="#001699"/><stop offset=".478" stop-color="#500399"/><stop offset=".652" stop-color="#950099"/><stop offset=".783" stop-color="#99006e"/><stop offset="1" stop-color="#990044"/></linearGradient><linearGradient id="o149" gradientUnits="userSpaceOnUse" x1="1121.8" x2="1386.5"><stop offset="0" stop-color="#002099"/><stop offset=".227" stop-color="#011399"/><stop offset=".5" stop-color="#540099"/><stop offset=".682" stop-color="#990098"/><stop offset=".864" stop-color="#990061"/><stop offset="1" stop-color="#990049"/></linearGradient><linearGradient id="o150" gradientUnits="userSpaceOnUse" x1="1123.2" x2="1378.5"><stop offset="0" stop-color="#001e99"/><stop offset=".19" stop-color="#001499"/><stop offset=".238" stop-color="#041199"/><stop offset=".524" stop-color="#580099"/><stop offset=".667" stop-color="#8c0099"/><stop offset=".714" stop-color="#990093"/><stop offset=".905" stop-color="#99005f"/><stop offset="1" stop-color="#99004e"/></linearGradient><linearGradient id="o151" gradientUnits="userSpaceOnUse" x1="1124.6" x2="1370.6"><stop offset="0" stop-color="#001c99"/><stop offset=".2" stop-color="#001199"/><stop offset=".45" stop-color="#3d0199"/><stop offset=".7" stop-color="#910099"/><stop offset=".75" stop-color="#99008e"/><stop offset="1" stop-color="#990053"/></linearGradient><linearGradient id="o152" gradientUnits="userSpaceOnUse" x1="1126.1" x2="1362.6"><stop offset="0" stop-color="#001a99"/><stop offset=".2" stop-color="#001099"/><stop offset=".5" stop-color="#490099"/><stop offset=".75" stop-color="#990097"/><stop offset=".95" stop-color="#990062"/><stop offset="1" stop-color="#990059"/></linearGradient><linearGradient id="o153" gradientUnits="userSpaceOnUse" x1="1127.6" x2="1354.6"><stop offset="0" stop-color="#001899"/><stop offset=".211" stop-color="#000d99"/><stop offset=".526" stop-color="#4d0099"/><stop offset=".737" stop-color="#8e0099"/><stop offset=".789" stop-color="#990092"/><stop offset="1" stop-color="#990060"/></linearGradient><linearGradient id="o154" gradientUnits="userSpaceOnUse" x1="1129.1" x2="1346.7"><stop offset="0" stop-color="#001699"/><stop offset=".222" stop-color="#020b99"/><stop offset=".556" stop-color="#510099"/><stop offset=".778" stop-color="#930099"/><stop offset="1" stop-color="#990067"/></linearGradient><linearGradient id="o155" gradientUnits="userSpaceOnUse" x1="1130.6" x2="1338.7"><stop offset="0" stop-color="#001499"/><stop offset=".176" stop-color="#000b99"/><stop offset=".235" stop-color="#050899"/><stop offset=".588" stop-color="#550099"/><stop offset=".824" stop-color="#980099"/><stop offset="1" stop-color="#99006e"/></linearGradient><linearGradient id="o156" gradientUnits="userSpaceOnUse" x1="1132.2" x2="1330.7"><stop offset="0" stop-color="#001199"/><stop offset=".176" stop-color="#000a99"/><stop offset=".529" stop-color="#430099"/><stop offset=".824" stop-color="#8f0099"/><stop offset=".882" stop-color="#990092"/><stop offset="1" stop-color="#990077"/></linearGradient><linearGradient id="o157" gradientUnits="userSpaceOnUse" x1="1133.9" x2="1322.7"><stop offset="0" stop-color="#001099"/><stop offset=".188" stop-color="#000799"/><stop offset=".562" stop-color="#460099"/><stop offset=".875" stop-color="#940099"/><stop offset="1" stop-color="#99007f"/></linearGradient><linearGradient id="o158" gradientUnits="userSpaceOnUse" x1="1135.5" x2="1314.8"><stop offset="0" stop-color="#000d99"/><stop offset=".2" stop-color="#000599"/><stop offset=".6" stop-color="#4a0099"/><stop offset=".933" stop-color="#980099"/><stop offset="1" stop-color="#990089"/></linearGradient><linearGradient id="o159" gradientUnits="userSpaceOnUse" x1="1137.3" x2="1306.8"><stop offset="0" stop-color="#000b99"/><stop offset=".214" stop-color="#030399"/><stop offset=".643" stop-color="#4f0099"/><stop offset=".929" stop-color="#8c0099"/><stop offset="1" stop-color="#990094"/></linearGradient><linearGradient id="o160" gradientUnits="userSpaceOnUse" x1="1139.2" x2="1298.8"><stop offset="0" stop-color="#000999"/><stop offset=".154" stop-color="#000499"/><stop offset=".615" stop-color="#440099"/><stop offset="1" stop-color="#920099"/></linearGradient><linearGradient id="o161" gradientUnits="userSpaceOnUse" x1="1141.1" x2="1290.9"><stop offset="0" stop-color="#000799"/><stop offset=".167" stop-color="#000299"/><stop offset=".667" stop-color="#490099"/><stop offset="1" stop-color="#870099"/></linearGradient><linearGradient id="o162" gradientUnits="userSpaceOnUse" x1="1143.1" x2="1282.9"><stop offset="0" stop-color="#000599"/><stop offset=".167" stop-color="#000099"/><stop offset=".667" stop-color="#440099"/><stop offset="1" stop-color="#7c0099"/></linearGradient><linearGradient id="o163" gradientUnits="userSpaceOnUse" x1="1145.1" x2="1274.9"><stop offset="0" stop-color="#000399"/><stop offset=".182" stop-color="#020099"/><stop offset=".727" stop-color="#490099"/><stop offset="1" stop-color="#720099"/></linearGradient><linearGradient id="o164" gradientUnits="userSpaceOnUse" x1="1147.3" x2="1267.0"><stop offset="0" stop-color="#000199"/><stop offset=".2" stop-color="#050099"/><stop offset=".8" stop-color="#4d0099"/><stop offset="1" stop-color="#680099"/></linearGradient><linearGradient id="o165" gradientUnits="userSpaceOnUse" x1="1149.7" x2="1259.0"><stop offset="0" stop-color="#000099"/><stop offset=".111" stop-color="#000099"/><stop offset=".778" stop-color="#440099"/><stop offset="1" stop-color="#5f0099"/></linearGradient><linearGradient id="o166" gradientUnits="userSpaceOnUse" x1="1152.2" x2="1251.0"><stop offset="0" stop-color="#000099"/><stop offset=".125" stop-color="#010099"/><stop offset=".875" stop-color="#490099"/><stop offset="1" stop-color="#560099"/></linearGradient><linearGradient id="o167" gradientUnits="userSpaceOnUse" x1="1154.9" x2="1243.1"><stop offset="0" stop-color="#000099"/><stop offset=".857" stop-color="#400099"/><stop offset="1" stop-color="#4e0099"/></linearGradient><linearGradient id="o168" gradientUnits="userSpaceOnUse" x1="1158.0" x2="1235.1"><stop offset="0" stop-color="#000099"/><stop offset="1" stop-color="#460099"/></linearGradient><linearGradient id="o169" gradientUnits="userSpaceOnUse" x1="1161.4" x2="1227.1"><stop offset="0" stop-color="#010099"/><stop offset="1" stop-color="#3e0099"/></linearGradient><linearGradient id="o170" gradientUnits="userSpaceOnUse" x1="1165.2" x2="1219.2"><stop offset="0" stop-color="#050099"/><stop offset="1" stop-color="#370099"/></linearGradient><linearGradient id="o171" gradientUnits="userSpaceOnUse" x1="1169.3" x2="1211.2"><stop offset="0" stop-color="#0a0099"/><stop offset="1" stop-color="#2f0099"/></linearGradient><linearGradient id="o172" gradientUnits="userSpaceOnUse" x1="1173.6" x2="1203.2"><stop offset="0" stop-color="#0e0099"/><stop offset="1" stop-color="#280099"/></linearGradient><linearGradient id="o173" gradientUnits="userSpaceOnUse" x1="1177.7" x2="1195.3"><stop offset="0" stop-color="#120099"/><stop offset="1" stop-color="#220099"/></linearGradient><linearGradient id="i0" gradientUnits="userSpaceOnUse" x1="1280.6" x2="1289.3"><stop offset="0" stop-color="#00ff02"/><stop offset="1" stop-color="#08ff00"/></linearGradient><linearGradient id="i1" gradientUnits="userSpaceOnUse" x1="1279.6" x2="1294.0"><stop offset="0" stop-color="#00ff04"/><stop offset="1" stop-color="#11ff00"/></linearGradient><linearGradient id="i2" gradientUnits="userSpaceOnUse" x1="1278.6" x2="1298.6"><stop offset="0" stop-color="#00ff07"/><stop offset="1" stop-color="#1aff00"/></linearGradient><linearGradient id="i3" gradientUnits="userSpaceOnUse" x1="1277.5" x2="1303.3"><stop offset="0" stop-color="#00ff09"/><stop offset="1" stop-color="#24ff00"/></linearGradient><linearGradient id="i4" gradientUnits="userSpaceOnUse" x1="1276.5" x2="1308.0"><stop offset="0" stop-color="#00ff0c"/><stop offset="1" stop-color="#2eff00"/></linearGradient><linearGradient id="i5" gradientUnits="userSpaceOnUse" x1="1275.5" x2="1312.7"><stop offset="0" stop-color="#00ff0e"/><stop offset="1" stop-color="#38ff00"/></linearGradient><linearGradient id="i6" gradientUnits="userSpaceOnUse" x1="1274.4" x2="1317.4"><stop offset="0" stop-color="#00ff11"/><stop offset="1" stop-color="#42ff00"/></linearGradient><linearGradient id="i7" gradientUnits="userSpaceOnUse" x1="1273.4" x2="1322.1"><stop offset="0" stop-color="#00ff13"/><stop offset="1" stop-color="#4dff00"/></linearGradient><linearGradient id="i8" gradientUnits="userSpaceOnUse" x1="1272.4" x2="1326.7"><stop offset="0" stop-color="#00ff16"/><stop offset=".857" stop-color="#4aff02"/><stop offset="1" stop-color="#59ff00"/></linearGradient><linearGradient id="i9" gradientUnits="userSpaceOnUse" x1="1271.3" x2="1331.4"><stop offset="0" stop-color="#00ff18"/><stop offset=".75" stop-color="#48ff06"/><stop offset="1" stop-color="#65ff00"/></linearGradient><linearGradient id="i10" gradientUnits="userSpaceOnUse" x1="1270.3" x2="1336.1"><stop offset="0" stop-color="#00ff1b"/><stop offset=".75" stop-color="#51ff06"/><stop offset="1" stop-color="#71ff00"/></linearGradient><linearGradient id="i11" gradientUnits="userSpaceOnUse" x1="1269.3" x2="1340.8"><stop offset="0" stop-color="#00ff1e"/><stop offset=".667" stop-color="#4fff0a"/><stop offset="1" stop-color="#7fff00"/></linearGradient><linearGradient id="i12" gradientUnits="userSpaceOnUse" x1="1268.2" x2="1345.5"><stop offset="0" stop-color="#00ff21"/><stop offset=".6" stop-color="#4dff0d"/><stop offset="1" stop-color="#8cff00"/></linearGradient><linearGradient id="i13" gradientUnits="userSpaceOnUse" x1="1267.2" x2="1350.1"><stop offset="0" stop-color="#00ff23"/><stop offset=".6" stop-color="#55ff0f"/><stop offset="1" stop-color="#9bff00"/></linearGradient><linearGradient id="i14" gradientUnits="userSpaceOnUse" x1="1266.2" x2="1354.8"><stop offset="0" stop-color="#00ff26"/><stop offset=".545" stop-color="#53ff12"/><stop offset="1" stop-color="#aaff00"/></linearGradient><linearGradient id="i15" gradientUnits="userSpaceOnUse" x1="1265.1" x2="1359.5"><stop offset="0" stop-color="#00ff29"/><stop offset=".5" stop-color="#51ff16"/><stop offset="1" stop-color="#b9ff00"/></linearGradient><linearGradient id="i16" gradientUnits="userSpaceOnUse" x1="1264.1" x2="1364.2"><stop offset="0" stop-color="#00ff2c"/><stop offset=".462" stop-color="#50ff19"/><stop offset=".923" stop-color="#b7ff03"/><stop offset="1" stop-color="#caff00"/></linearGradient><linearGradient id="i17" gradientUnits="userSpaceOnUse" x1="1263.1" x2="1368.9"><stop offset="0" stop-color="#00ff2f"/><stop offset=".462" stop-color="#57ff1b"/><stop offset=".923" stop-color="#c6ff03"/><stop offset="1" stop-color="#dbff00"/></linearGradient><linearGradient id="i18" gradientUnits="userSpaceOnUse" x1="1262.0" x2="1373.6"><stop offset="0" stop-color="#00ff33"/><stop offset=".429" stop-color="#55ff1f"/><stop offset=".857" stop-color="#c3ff07"/><stop offset="1" stop-color="#eeff00"/></linearGradient><linearGradient id="i19" gradientUnits="userSpaceOnUse" x1="1261.0" x2="1378.2"><stop offset="0" stop-color="#00ff36"/><stop offset=".4" stop-color="#55ff23"/><stop offset=".8" stop-color="#c1ff0c"/><stop offset="1" stop-color="#fffd00"/></linearGradient><linearGradient id="i20" gradientUnits="userSpaceOnUse" x1="1260.0" x2="1382.9"><stop offset="0" stop-color="#00ff39"/><stop offset=".067" stop-color="#09ff36"/><stop offset=".467" stop-color="#6cff21"/><stop offset=".867" stop-color="#e6ff08"/><stop offset=".933" stop-color="#fdff03"/><stop offset="1" stop-color="#ffea00"/></linearGradient><linearGradient id="i21" gradientUnits="userSpaceOnUse" x1="1258.9" x2="1387.6"><stop offset="0" stop-color="#00ff3c"/><stop offset=".375" stop-color="#59ff29"/><stop offset=".75" stop-color="#ceff11"/><stop offset=".875" stop-color="#faff08"/><stop offset="1" stop-color="#ffda00"/></linearGradient><linearGradient id="i22" gradientUnits="userSpaceOnUse" x1="1257.9" x2="1392.3"><stop offset="0" stop-color="#00ff40"/><stop offset=".353" stop-color="#59ff2d"/><stop offset=".706" stop-color="#ccff16"/><stop offset=".824" stop-color="#f8ff0d"/><stop offset=".882" stop-color="#ffef08"/><stop offset="1" stop-color="#ffca00"/></linearGradient><linearGradient id="i23" gradientUnits="userSpaceOnUse" x1="1256.9" x2="1397.0"><stop offset="0" stop-color="#00ff43"/><stop offset=".333" stop-color="#58ff31"/><stop offset=".667" stop-color="#cbff1a"/><stop offset=".778" stop-color="#f7ff12"/><stop offset=".833" stop-color="#fff10c"/><stop offset="1" stop-color="#ffbc00"/></linearGradient><linearGradient id="i24" gradientUnits="userSpaceOnUse" x1="1255.8" x2="1401.6"><stop offset="0" stop-color="#00ff47"/><stop offset=".333" stop-color="#5eff34"/><stop offset=".667" stop-color="#d8ff1c"/><stop offset=".722" stop-color="#f0ff18"/><stop offset=".778" stop-color="#fff612"/><stop offset="1" stop-color="#ffaf00"/></linearGradient><linearGradient id="i25" gradientUnits="userSpaceOnUse" x1="1254.8" x2="1406.3"><stop offset="0" stop-color="#00ff4b"/><stop offset=".053" stop-color="#09ff48"/><stop offset=".368" stop-color="#70ff34"/><stop offset=".684" stop-color="#eeff1c"/><stop offset=".737" stop-color="#fff817"/><stop offset=".947" stop-color="#ffb002"/><stop offset="1" stop-color="#ffa300"/></linearGradient><linearGradient id="i26" gradientUnits="userSpaceOnUse" x1="1253.8" x2="1411.0"><stop offset="0" stop-color="#00ff4e"/><stop offset=".05" stop-color="#09ff4c"/><stop offset=".35" stop-color="#6fff39"/><stop offset=".65" stop-color="#edff21"/><stop offset=".7" stop-color="#fff91c"/><stop offset=".9" stop-color="#ffb106"/><stop offset="1" stop-color="#ff9800"/></linearGradient><linearGradient id="i27" gradientUnits="userSpaceOnUse" x1="1252.7" x2="1415.7"><stop offset="0" stop-color="#00ff52"/><stop offset=".3" stop-color="#62ff3f"/><stop offset=".6" stop-color="#e3ff28"/><stop offset=".65" stop-color="#fcff23"/><stop offset=".85" stop-color="#ffb30b"/><stop offset="1" stop-color="#ff8d00"/></linearGradient><linearGradient id="i28" gradientUnits="userSpaceOnUse" x1="1251.7" x2="1420.4"><stop offset="0" stop-color="#00ff56"/><stop offset=".286" stop-color="#62ff44"/><stop offset=".571" stop-color="#e2ff2d"/><stop offset=".619" stop-color="#fbff29"/><stop offset=".81" stop-color="#ffb40f"/><stop offset="1" stop-color="#ff8400"/></linearGradient><linearGradient id="i29" gradientUnits="userSpaceOnUse" x1="1250.7" x2="1425.0"><stop offset="0" stop-color="#00ff5a"/><stop offset=".182" stop-color="#3cff4f"/><stop offset=".455" stop-color="#b4ff3a"/><stop offset=".591" stop-color="#fbff2e"/><stop offset=".773" stop-color="#ffb413"/><stop offset="1" stop-color="#ff7b00"/></linearGradient><linearGradient id="i30" gradientUnits="userSpaceOnUse" x1="1249.6" x2="1429.7"><stop offset="0" stop-color="#00ff5e"/><stop offset=".261" stop-color="#61ff4d"/><stop offset=".522" stop-color="#e2ff37"/><stop offset=".565" stop-color="#faff33"/><stop offset=".783" stop-color="#ffa612"/><stop offset="1" stop-color="#ff7200"/></linearGradient><linearGradient id="i31" gradientUnits="userSpaceOnUse" x1="1248.6" x2="1434.4"><stop offset="0" stop-color="#00ff63"/><stop offset=".043" stop-color="#0aff60"/><stop offset=".304" stop-color="#7bff4e"/><stop offset=".522" stop-color="#efff3a"/><stop offset=".565" stop-color="#fff534"/><stop offset=".696" stop-color="#ffb91d"/><stop offset=".913" stop-color="#ff7b05"/><stop offset="1" stop-color="#ff6a00"/></linearGradient><linearGradient id="i32" gradientUnits="userSpaceOnUse" x1="1247.6" x2="1439.1"><stop offset="0" stop-color="#00ff67"/><stop offset=".042" stop-color="#0aff64"/><stop offset=".292" stop-color="#7bff52"/><stop offset=".5" stop-color="#efff40"/><stop offset=".542" stop-color="#fff539"/><stop offset=".667" stop-color="#ffb921"/><stop offset=".833" stop-color="#ff850d"/><stop offset="1" stop-color="#ff6300"/></linearGradient><linearGradient id="i33" gradientUnits="userSpaceOnUse" x1="1246.5" x2="1443.8"><stop offset="0" stop-color="#00ff6b"/><stop offset=".04" stop-color="#0aff69"/><stop offset=".28" stop-color="#7bff57"/><stop offset=".48" stop-color="#efff45"/><stop offset=".52" stop-color="#fff53f"/><stop offset=".64" stop-color="#ffb926"/><stop offset=".88" stop-color="#ff7208"/><stop offset="1" stop-color="#ff5c00"/></linearGradient><linearGradient id="i34" gradientUnits="userSpaceOnUse" x1="1245.5" x2="1448.5"><stop offset="0" stop-color="#00ff70"/><stop offset=".04" stop-color="#0bff6d"/><stop offset=".28" stop-color="#81ff5c"/><stop offset=".48" stop-color="#fcff49"/><stop offset=".6" stop-color="#ffbf2d"/><stop offset=".76" stop-color="#ff8715"/><stop offset="1" stop-color="#ff5600"/></linearGradient><linearGradient id="i35" gradientUnits="userSpaceOnUse" x1="1244.5" x2="1453.1"><stop offset="0" stop-color="#00ff75"/><stop offset=".038" stop-color="#0bff72"/><stop offset=".269" stop-color="#81ff61"/><stop offset=".462" stop-color="#fcff4f"/><stop offset=".577" stop-color="#ffbf32"/><stop offset=".731" stop-color="#ff8718"/><stop offset=".962" stop-color="#ff5502"/><stop offset="1" stop-color="#ff4f00"/></linearGradient><linearGradient id="i36" gradientUnits="userSpaceOnUse" x1="1243.4" x2="1457.8"><stop offset="0" stop-color="#00ff79"/><stop offset=".037" stop-color="#0bff77"/><stop offset=".259" stop-color="#81ff67"/><stop offset=".444" stop-color="#fdff55"/><stop offset=".556" stop-color="#ffbe36"/><stop offset=".741" stop-color="#ff7c17"/><stop offset=".963" stop-color="#ff4f02"/><stop offset="1" stop-color="#ff4900"/></linearGradient><linearGradient id="i37" gradientUnits="userSpaceOnUse" x1="1242.4" x2="1462.5"><stop offset="0" stop-color="#00ff7e"/><stop offset=".036" stop-color="#0bff7c"/><stop offset=".25" stop-color="#82ff6c"/><stop offset=".429" stop-color="#feff5b"/><stop offset=".536" stop-color="#ffbe3b"/><stop offset=".679" stop-color="#ff8620"/><stop offset=".893" stop-color="#ff5507"/><stop offset="1" stop-color="#ff4400"/></linearGradient><linearGradient id="i38" gradientUnits="userSpaceOnUse" x1="1241.4" x2="1467.2"><stop offset="0" stop-color="#00ff83"/><stop offset=".036" stop-color="#0bff81"/><stop offset=".25" stop-color="#88ff71"/><stop offset=".393" stop-color="#eeff64"/><stop offset=".429" stop-color="#fff45c"/><stop offset=".536" stop-color="#ffb33b"/><stop offset=".75" stop-color="#ff6b16"/><stop offset=".964" stop-color="#ff4402"/><stop offset="1" stop-color="#ff3f00"/></linearGradient><linearGradient id="i39" gradientUnits="userSpaceOnUse" x1="1240.3" x2="1471.9"><stop offset="0" stop-color="#00ff89"/><stop offset=".034" stop-color="#0bff86"/><stop offset=".241" stop-color="#88ff77"/><stop offset=".379" stop-color="#efff6a"/><stop offset=".414" stop-color="#fff362"/><stop offset=".483" stop-color="#ffc549"/><stop offset=".621" stop-color="#ff8929"/><stop offset=".828" stop-color="#ff540d"/><stop offset="1" stop-color="#ff3a00"/></linearGradient><linearGradient id="i40" gradientUnits="userSpaceOnUse" x1="1239.3" x2="1476.5"><stop offset="0" stop-color="#00ff8e"/><stop offset=".033" stop-color="#0bff8c"/><stop offset=".233" stop-color="#89ff7d"/><stop offset=".367" stop-color="#f0ff71"/><stop offset=".4" stop-color="#fff168"/><stop offset=".5" stop-color="#ffb244"/><stop offset=".7" stop-color="#ff6a1d"/><stop offset=".9" stop-color="#ff4307"/><stop offset="1" stop-color="#ff3500"/></linearGradient><linearGradient id="i41" gradientUnits="userSpaceOnUse" x1="1238.3" x2="1481.2"><stop offset="0" stop-color="#00ff94"/><stop offset=".033" stop-color="#0cff91"/><stop offset=".233" stop-color="#8fff83"/><stop offset=".367" stop-color="#fcff76"/><stop offset=".467" stop-color="#ffba4e"/><stop offset=".633" stop-color="#ff7527"/><stop offset=".833" stop-color="#ff480d"/><stop offset="1" stop-color="#ff3000"/></linearGradient><linearGradient id="i42" gradientUnits="userSpaceOnUse" x1="1237.2" x2="1485.9"><stop offset="0" stop-color="#00ff99"/><stop offset=".032" stop-color="#0cff97"/><stop offset=".226" stop-color="#90ff89"/><stop offset=".355" stop-color="#feff7d"/><stop offset=".419" stop-color="#ffcd5f"/><stop offset=".516" stop-color="#ff9840"/><stop offset=".71" stop-color="#ff5b1b"/><stop offset=".903" stop-color="#ff3806"/><stop offset="1" stop-color="#ff2c00"/></linearGradient><linearGradient id="i43" gradientUnits="userSpaceOnUse" x1="1236.2" x2="1490.6"><stop offset="0" stop-color="#00ff9f"/><stop offset=".031" stop-color="#0cff9d"/><stop offset=".219" stop-color="#90ff90"/><stop offset=".344" stop-color="#ffff85"/><stop offset=".406" stop-color="#ffcc65"/><stop offset=".5" stop-color="#ff9744"/><stop offset=".688" stop-color="#ff5a1e"/><stop offset=".875" stop-color="#ff3809"/><stop offset="1" stop-color="#ff2800"/></linearGradient><linearGradient id="i44" gradientUnits="userSpaceOnUse" x1="1235.2" x2="1495.3"><stop offset="0" stop-color="#00ffa5"/><stop offset=".03" stop-color="#0cffa3"/><stop offset=".212" stop-color="#91ff97"/><stop offset=".333" stop-color="#fffd8b"/><stop offset=".394" stop-color="#ffca6a"/><stop offset=".485" stop-color="#ff9649"/><stop offset=".667" stop-color="#ff5922"/><stop offset=".848" stop-color="#ff370b"/><stop offset="1" stop-color="#ff2400"/></linearGradient><linearGradient id="i45" gradientUnits="userSpaceOnUse" x1="1234.1" x2="1500.0"><stop offset="0" stop-color="#00ffab"/><stop offset=".03" stop-color="#0dffa9"/><stop offset=".212" stop-color="#98ff9d"/><stop offset=".303" stop-color="#eeff96"/><stop offset=".333" stop-color="#fff18b"/><stop offset=".394" stop-color="#ffc06a"/><stop offset=".515" stop-color="#ff8140"/><stop offset=".697" stop-color="#ff4d1d"/><stop offset=".879" stop-color="#ff2e09"/><stop offset="1" stop-color="#ff2000"/></linearGradient><linearGradient id="i46" gradientUnits="userSpaceOnUse" x1="1233.1" x2="1504.6"><stop offset="0" stop-color="#00ffb1"/><stop offset=".029" stop-color="#0dffb0"/><stop offset=".206" stop-color="#99ffa5"/><stop offset=".294" stop-color="#f0ff9e"/><stop offset=".324" stop-color="#ffef91"/><stop offset=".412" stop-color="#ffab62"/><stop offset=".559" stop-color="#ff6b36"/><stop offset=".735" stop-color="#ff4018"/><stop offset=".912" stop-color="#ff2606"/><stop offset="1" stop-color="#ff1c00"/></linearGradient><linearGradient id="i47" gradientUnits="userSpaceOnUse" x1="1232.1" x2="1509.3"><stop offset="0" stop-color="#00ffb8"/><stop offset=".029" stop-color="#0dffb6"/><stop offset=".2" stop-color="#9affac"/><stop offset=".286" stop-color="#f2ffa6"/><stop offset=".314" stop-color="#ffed98"/><stop offset=".371" stop-color="#ffbd75"/><stop offset=".457" stop-color="#ff8b51"/><stop offset=".629" stop-color="#ff5128"/><stop offset=".8" stop-color="#ff3110"/><stop offset=".971" stop-color="#ff1c01"/><stop offset="1" stop-color="#ff1900"/></linearGradient><linearGradient id="i48" gradientUnits="userSpaceOnUse" x1="1231.0" x2="1514.0"><stop offset="0" stop-color="#00ffbf"/><stop offset=".029" stop-color="#0dffbd"/><stop offset=".171" stop-color="#85ffb5"/><stop offset=".286" stop-color="#fdffad"/><stop offset=".343" stop-color="#ffc985"/><stop offset=".4" stop-color="#ffa167"/><stop offset=".514" stop-color="#ff6d40"/><stop offset=".686" stop-color="#ff401f"/><stop offset=".857" stop-color="#ff250b"/><stop offset="1" stop-color="#ff1600"/></linearGradient><linearGradient id="i49" gradientUnits="userSpaceOnUse" x1="1230.0" x2="1518.7"><stop offset="0" stop-color="#00ffc6"/><stop offset=".028" stop-color="#0dffc4"/><stop offset=".167" stop-color="#86ffbd"/><stop offset=".278" stop-color="#ffffb6"/><stop offset=".333" stop-color="#ffc78b"/><stop offset=".417" stop-color="#ff9060"/><stop offset=".583" stop-color="#ff5230"/><stop offset=".75" stop-color="#ff3016"/><stop offset=".917" stop-color="#ff1b06"/><stop offset="1" stop-color="#ff1300"/></linearGradient><linearGradient id="i50" gradientUnits="userSpaceOnUse" x1="1229.0" x2="1523.4"><stop offset="0" stop-color="#00ffcd"/><stop offset=".027" stop-color="#0dffcc"/><stop offset=".162" stop-color="#87ffc5"/><stop offset=".27" stop-color="#fffcbd"/><stop offset=".324" stop-color="#ffc591"/><stop offset=".405" stop-color="#ff8e65"/><stop offset=".568" stop-color="#ff5134"/><stop offset=".73" stop-color="#ff2f19"/><stop offset=".892" stop-color="#ff1a08"/><stop offset="1" stop-color="#ff0f00"/></linearGradient><linearGradient id="i51" gradientUnits="userSpaceOnUse" x1="1228.0" x2="1528.0"><stop offset="0" stop-color="#00ffd4"/><stop offset=".026" stop-color="#0dffd3"/><stop offset=".132" stop-color="#6dffcf"/><stop offset=".237" stop-color="#e3ffca"/><stop offset=".263" stop-color="#fff9c4"/><stop offset=".316" stop-color="#ffc397"/><stop offset=".421" stop-color="#ff7f5f"/><stop offset=".579" stop-color="#ff4931"/><stop offset=".737" stop-color="#ff2a18"/><stop offset=".895" stop-color="#ff1607"/><stop offset="1" stop-color="#ff0c00"/></linearGradient><linearGradient id="i52" gradientUnits="userSpaceOnUse" x1="1226.9" x2="1532.7"><stop offset="0" stop-color="#00ffdc"/><stop offset=".026" stop-color="#0effdb"/><stop offset=".158" stop-color="#8effd6"/><stop offset=".237" stop-color="#eeffd3"/><stop offset=".263" stop-color="#ffeec4"/><stop offset=".316" stop-color="#ffb997"/><stop offset=".395" stop-color="#ff856a"/><stop offset=".553" stop-color="#ff4a37"/><stop offset=".711" stop-color="#ff2a1b"/><stop offset=".868" stop-color="#ff160a"/><stop offset="1" stop-color="#ff0a00"/></linearGradient><linearGradient id="i53" gradientUnits="userSpaceOnUse" x1="1225.9" x2="1537.4"><stop offset="0" stop-color="#00ffe4"/><stop offset=".026" stop-color="#0effe3"/><stop offset=".154" stop-color="#90ffe0"/><stop offset=".231" stop-color="#f0ffdd"/><stop offset=".256" stop-color="#ffebcb"/><stop offset=".308" stop-color="#ffb79c"/><stop offset=".385" stop-color="#ff836e"/><stop offset=".538" stop-color="#ff493a"/><stop offset=".692" stop-color="#ff291e"/><stop offset=".846" stop-color="#ff150c"/><stop offset="1" stop-color="#ff0700"/></linearGradient><linearGradient id="i54" gradientUnits="userSpaceOnUse" x1="1224.9" x2="1542.1"><stop offset="0" stop-color="#00ffec"/><stop offset=".025" stop-color="#0effeb"/><stop offset=".15" stop-color="#91ffe9"/><stop offset=".225" stop-color="#f3ffe7"/><stop offset=".25" stop-color="#ffe9d2"/><stop offset=".3" stop-color="#ffb5a2"/><stop offset=".375" stop-color="#ff8173"/><stop offset=".525" stop-color="#ff483e"/><stop offset=".675" stop-color="#ff2820"/><stop offset=".825" stop-color="#ff140e"/><stop offset=".975" stop-color="#ff0601"/><stop offset="1" stop-color="#ff0400"/></linearGradient><linearGradient id="i55" gradientUnits="userSpaceOnUse" x1="1223.8" x2="1546.8"><stop offset="0" stop-color="#00fff4"/><stop offset=".025" stop-color="#0ffff4"/><stop offset=".125" stop-color="#79fff3"/><stop offset=".225" stop-color="#fefff2"/><stop offset=".275" stop-color="#ffc3b8"/><stop offset=".325" stop-color="#ff9990"/><stop offset=".425" stop-color="#ff635d"/><stop offset=".575" stop-color="#ff3732"/><stop offset=".725" stop-color="#ff1d19"/><stop offset=".875" stop-color="#ff0c09"/><stop offset="1" stop-color="#ff0200"/></linearGradient><linearGradient id="i56" gradientUnits="userSpaceOnUse" x1="1222.8" x2="1551.0"><stop offset="0" stop-color="#00fffd"/><stop offset=".024" stop-color="#0ffffd"/><stop offset=".122" stop-color="#7afffd"/><stop offset=".22" stop-color="#fffdfb"/><stop offset=".244" stop-color="#ffdbda"/><stop offset=".293" stop-color="#ffaaa8"/><stop offset=".366" stop-color="#ff7978"/><stop offset=".488" stop-color="#ff4848"/><stop offset=".634" stop-color="#ff2727"/><stop offset=".78" stop-color="#ff1313"/><stop offset=".927" stop-color="#ff0505"/><stop offset="1" stop-color="#ff0000"/></linearGradient><linearGradient id="i57" gradientUnits="userSpaceOnUse" x1="1221.8" x2="1544.3"><stop offset="0" stop-color="#00f8ff"/><stop offset=".025" stop-color="#0ff8ff"/><stop offset=".125" stop-color="#7af7ff"/><stop offset=".225" stop-color="#fff5fe"/><stop offset=".25" stop-color="#ffd4dd"/><stop offset=".3" stop-color="#ffa4ab"/><stop offset=".375" stop-color="#ff747a"/><stop offset=".5" stop-color="#ff4549"/><stop offset=".65" stop-color="#ff2528"/><stop offset=".8" stop-color="#ff1114"/><stop offset=".95" stop-color="#ff0306"/><stop offset="1" stop-color="#ff0002"/></linearGradient><linearGradient id="i58" gradientUnits="userSpaceOnUse" x1="1220.7" x2="1537.5"><stop offset="0" stop-color="#00f0ff"/><stop offset=".025" stop-color="#0eefff"/><stop offset=".15" stop-color="#92edff"/><stop offset=".225" stop-color="#f5ebff"/><stop offset=".25" stop-color="#ffd4e7"/><stop offset=".3" stop-color="#ffa4b4"/><stop offset=".4" stop-color="#ff6874"/><stop offset=".55" stop-color="#ff3841"/><stop offset=".7" stop-color="#ff1d24"/><stop offset=".85" stop-color="#ff0c11"/><stop offset="1" stop-color="#ff0004"/></linearGradient><linearGradient id="i59" gradientUnits="userSpaceOnUse" x1="1219.7" x2="1530.8"><stop offset="0" stop-color="#00e7ff"/><stop offset=".026" stop-color="#0ee7ff"/><stop offset=".154" stop-color="#91e3ff"/><stop offset=".231" stop-color="#f2e0ff"/><stop offset=".256" stop-color="#ffcdea"/><stop offset=".308" stop-color="#ff9eb6"/><stop offset=".385" stop-color="#ff6f83"/><stop offset=".538" stop-color="#ff3b49"/><stop offset=".692" stop-color="#ff1e29"/><stop offset=".846" stop-color="#ff0c15"/><stop offset="1" stop-color="#ff0007"/></linearGradient><linearGradient id="i60" gradientUnits="userSpaceOnUse" x1="1218.7" x2="1524.0"><stop offset="0" stop-color="#00dfff"/><stop offset=".026" stop-color="#0edfff"/><stop offset=".158" stop-color="#8fdaff"/><stop offset=".237" stop-color="#efd6ff"/><stop offset=".263" stop-color="#ffc6ed"/><stop offset=".316" stop-color="#ff98b8"/><stop offset=".395" stop-color="#ff6b84"/><stop offset=".553" stop-color="#ff384a"/><stop offset=".711" stop-color="#ff1c2a"/><stop offset=".868" stop-color="#ff0a16"/><stop offset="1" stop-color="#ff000a"/></linearGradient><linearGradient id="i61" gradientUnits="userSpaceOnUse" x1="1217.6" x2="1517.3"><stop offset="0" stop-color="#00d8ff"/><stop offset=".027" stop-color="#0ed7ff"/><stop offset=".162" stop-color="#8ed1ff"/><stop offset=".243" stop-color="#edcdff"/><stop offset=".27" stop-color="#ffbfef"/><stop offset=".324" stop-color="#ff92ba"/><stop offset=".405" stop-color="#ff6686"/><stop offset=".568" stop-color="#ff344b"/><stop offset=".73" stop-color="#ff192b"/><stop offset=".892" stop-color="#ff0816"/><stop offset="1" stop-color="#ff000d"/></linearGradient><linearGradient id="i62" gradientUnits="userSpaceOnUse" x1="1216.6" x2="1510.6"><stop offset="0" stop-color="#00d0ff"/><stop offset=".027" stop-color="#0dcfff"/><stop offset=".162" stop-color="#88c9ff"/><stop offset=".27" stop-color="#ffbffb"/><stop offset=".324" stop-color="#ff92c4"/><stop offset=".432" stop-color="#ff5b80"/><stop offset=".595" stop-color="#ff2f4a"/><stop offset=".757" stop-color="#ff162b"/><stop offset=".919" stop-color="#ff0517"/><stop offset="1" stop-color="#ff000f"/></linearGradient><linearGradient id="i63" gradientUnits="userSpaceOnUse" x1="1215.6" x2="1503.8"><stop offset="0" stop-color="#00c9ff"/><stop offset=".028" stop-color="#0dc8ff"/><stop offset=".194" stop-color="#a3bfff"/><stop offset=".278" stop-color="#ffb8fd"/><stop offset=".333" stop-color="#ff8cc6"/><stop offset=".417" stop-color="#ff618f"/><stop offset=".556" stop-color="#ff3759"/><stop offset=".722" stop-color="#ff1a34"/><stop offset=".889" stop-color="#ff081e"/><stop offset="1" stop-color="#ff0013"/></linearGradient><linearGradient id="i64" gradientUnits="userSpaceOnUse" x1="1214.5" x2="1497.1"><stop offset="0" stop-color="#00c2ff"/><stop offset=".029" stop-color="#0dc0ff"/><stop offset=".171" stop-color="#86b8ff"/><stop offset=".286" stop-color="#ffb0ff"/><stop offset=".343" stop-color="#ff86c8"/><stop offset=".4" stop-color="#ff68a0"/><stop offset=".571" stop-color="#ff335a"/><stop offset=".743" stop-color="#ff1735"/><stop offset=".914" stop-color="#ff061e"/><stop offset="1" stop-color="#ff0016"/></linearGradient><linearGradient id="i65" gradientUnits="userSpaceOnUse" x1="1213.5" x2="1490.3"><stop offset="0" stop-color="#00bbff"/><stop offset=".029" stop-color="#0db9ff"/><stop offset=".171" stop-color="#80b1ff"/><stop offset=".286" stop-color="#f3a8ff"/><stop offset=".314" stop-color="#ff99ec"/><stop offset=".371" stop-color="#ff76bc"/><stop offset=".486" stop-color="#ff497e"/><stop offset=".657" stop-color="#ff234b"/><stop offset=".829" stop-color="#ff0e2d"/><stop offset="1" stop-color="#ff0019"/></linearGradient><linearGradient id="i66" gradientUnits="userSpaceOnUse" x1="1212.5" x2="1483.6"><stop offset="0" stop-color="#00b4ff"/><stop offset=".029" stop-color="#0db3ff"/><stop offset=".176" stop-color="#7fa9ff"/><stop offset=".294" stop-color="#f1a0ff"/><stop offset=".324" stop-color="#ff93ee"/><stop offset=".382" stop-color="#ff71bd"/><stop offset=".5" stop-color="#ff457f"/><stop offset=".676" stop-color="#ff204b"/><stop offset=".853" stop-color="#ff0b2d"/><stop offset="1" stop-color="#ff001c"/></linearGradient><linearGradient id="i67" gradientUnits="userSpaceOnUse" x1="1211.4" x2="1476.8"><stop offset="0" stop-color="#00aeff"/><stop offset=".03" stop-color="#0dacff"/><stop offset=".212" stop-color="#99a0ff"/><stop offset=".303" stop-color="#ef98ff"/><stop offset=".333" stop-color="#ff8cf0"/><stop offset=".394" stop-color="#ff6bbf"/><stop offset=".485" stop-color="#ff498d"/><stop offset=".667" stop-color="#ff2253"/><stop offset=".848" stop-color="#ff0c32"/><stop offset="1" stop-color="#ff0020"/></linearGradient><linearGradient id="i68" gradientUnits="userSpaceOnUse" x1="1210.4" x2="1470.1"><stop offset="0" stop-color="#00a8ff"/><stop offset=".031" stop-color="#0da6ff"/><stop offset=".219" stop-color="#9898ff"/><stop offset=".312" stop-color="#ee90ff"/><stop offset=".344" stop-color="#ff86f1"/><stop offset=".406" stop-color="#ff66c0"/><stop offset=".5" stop-color="#ff458e"/><stop offset=".688" stop-color="#ff1f54"/><stop offset=".875" stop-color="#ff0933"/><stop offset="1" stop-color="#ff0024"/></linearGradient><linearGradient id="i69" gradientUnits="userSpaceOnUse" x1="1209.4" x2="1463.3"><stop offset="0" stop-color="#00a2ff"/><stop offset=".031" stop-color="#0ca0ff"/><stop offset=".219" stop-color="#9192ff"/><stop offset=".344" stop-color="#ff86fd"/><stop offset=".406" stop-color="#ff66ca"/><stop offset=".5" stop-color="#ff4596"/><stop offset=".688" stop-color="#ff1f5a"/><stop offset=".875" stop-color="#ff0937"/><stop offset="1" stop-color="#ff0028"/></linearGradient><linearGradient id="i70" gradientUnits="userSpaceOnUse" x1="1208.3" x2="1456.6"><stop offset="0" stop-color="#009cff"/><stop offset=".032" stop-color="#0c9aff"/><stop offset=".226" stop-color="#908bff"/><stop offset=".355" stop-color="#ff7fff"/><stop offset=".419" stop-color="#ff60cc"/><stop offset=".516" stop-color="#ff4197"/><stop offset=".71" stop-color="#ff1c5b"/><stop offset=".903" stop-color="#ff0738"/><stop offset="1" stop-color="#ff002c"/></linearGradient><linearGradient id="i71" gradientUnits="userSpaceOnUse" x1="1207.3" x2="1449.8"><stop offset="0" stop-color="#0096ff"/><stop offset=".033" stop-color="#0c94ff"/><stop offset=".233" stop-color="#9085ff"/><stop offset=".367" stop-color="#fe78ff"/><stop offset=".433" stop-color="#ff5bcd"/><stop offset=".533" stop-color="#ff3c98"/><stop offset=".733" stop-color="#ff185b"/><stop offset=".933" stop-color="#ff0439"/><stop offset="1" stop-color="#ff0030"/></linearGradient><linearGradient id="i72" gradientUnits="userSpaceOnUse" x1="1206.3" x2="1443.1"><stop offset="0" stop-color="#0090ff"/><stop offset=".033" stop-color="#0b8eff"/><stop offset=".233" stop-color="#8a7fff"/><stop offset=".367" stop-color="#f273ff"/><stop offset=".4" stop-color="#ff69f0"/><stop offset=".5" stop-color="#ff45b1"/><stop offset=".7" stop-color="#ff1d69"/><stop offset=".9" stop-color="#ff0742"/><stop offset="1" stop-color="#ff0035"/></linearGradient><linearGradient id="i73" gradientUnits="userSpaceOnUse" x1="1205.2" x2="1436.3"><stop offset="0" stop-color="#008bff"/><stop offset=".034" stop-color="#0b89ff"/><stop offset=".241" stop-color="#8979ff"/><stop offset=".379" stop-color="#f16cff"/><stop offset=".414" stop-color="#ff63f1"/><stop offset=".517" stop-color="#ff40b2"/><stop offset=".724" stop-color="#ff1a6a"/><stop offset=".931" stop-color="#ff0443"/><stop offset="1" stop-color="#ff0039"/></linearGradient><linearGradient id="i74" gradientUnits="userSpaceOnUse" x1="1204.2" x2="1429.6"><stop offset="0" stop-color="#0086ff"/><stop offset=".036" stop-color="#0b83ff"/><stop offset=".25" stop-color="#8873ff"/><stop offset=".393" stop-color="#f065ff"/><stop offset=".429" stop-color="#ff5df2"/><stop offset=".536" stop-color="#ff3cb3"/><stop offset=".75" stop-color="#ff166b"/><stop offset=".964" stop-color="#ff0243"/><stop offset="1" stop-color="#ff003e"/></linearGradient><linearGradient id="i75" gradientUnits="userSpaceOnUse" x1="1203.2" x2="1422.8"><stop offset="0" stop-color="#0080ff"/><stop offset=".037" stop-color="#0b7eff"/><stop offset=".259" stop-color="#886dff"/><stop offset=".407" stop-color="#ef5fff"/><stop offset=".444" stop-color="#ff57f3"/><stop offset=".519" stop-color="#ff40c5"/><stop offset=".667" stop-color="#ff2289"/><stop offset=".889" stop-color="#ff0855"/><stop offset="1" stop-color="#ff0044"/></linearGradient><linearGradient id="i76" gradientUnits="userSpaceOnUse" x1="1202.1" x2="1416.1"><stop offset="0" stop-color="#007bff"/><stop offset=".037" stop-color="#0b79ff"/><stop offset=".259" stop-color="#8268ff"/><stop offset=".444" stop-color="#fe57ff"/><stop offset=".556" stop-color="#ff37bd"/><stop offset=".778" stop-color="#ff1372"/><stop offset="1" stop-color="#ff0049"/></linearGradient><linearGradient id="i77" gradientUnits="userSpaceOnUse" x1="1201.1" x2="1409.3"><stop offset="0" stop-color="#0077ff"/><stop offset=".038" stop-color="#0b74ff"/><stop offset=".269" stop-color="#8263ff"/><stop offset=".462" stop-color="#fe50ff"/><stop offset=".577" stop-color="#ff32be"/><stop offset=".731" stop-color="#ff1986"/><stop offset=".962" stop-color="#ff0255"/><stop offset="1" stop-color="#ff004f"/></linearGradient><linearGradient id="i78" gradientUnits="userSpaceOnUse" x1="1200.1" x2="1402.6"><stop offset="0" stop-color="#0072ff"/><stop offset=".04" stop-color="#0b6fff"/><stop offset=".28" stop-color="#825dff"/><stop offset=".48" stop-color="#fd4aff"/><stop offset=".6" stop-color="#ff2dbe"/><stop offset=".8" stop-color="#ff107c"/><stop offset="1" stop-color="#ff0055"/></linearGradient><linearGradient id="i79" gradientUnits="userSpaceOnUse" x1="1199.0" x2="1395.9"><stop offset="0" stop-color="#006dff"/><stop offset=".04" stop-color="#0a6bff"/><stop offset=".28" stop-color="#7b59ff"/><stop offset=".48" stop-color="#f047ff"/><stop offset=".52" stop-color="#ff3ff4"/><stop offset=".64" stop-color="#ff26b8"/><stop offset=".8" stop-color="#ff1084"/><stop offset="1" stop-color="#ff005c"/></linearGradient><linearGradient id="i80" gradientUnits="userSpaceOnUse" x1="1198.0" x2="1389.1"><stop offset="0" stop-color="#0069ff"/><stop offset=".042" stop-color="#0a66ff"/><stop offset=".292" stop-color="#7b54ff"/><stop offset=".5" stop-color="#f041ff"/><stop offset=".542" stop-color="#ff3af4"/><stop offset=".667" stop-color="#ff22b8"/><stop offset=".917" stop-color="#ff0572"/><stop offset="1" stop-color="#ff0063"/></linearGradient><linearGradient id="i81" gradientUnits="userSpaceOnUse" x1="1197.0" x2="1382.4"><stop offset="0" stop-color="#0064ff"/><stop offset=".043" stop-color="#0a61ff"/><stop offset=".304" stop-color="#7b4fff"/><stop offset=".522" stop-color="#f03bff"/><stop offset=".565" stop-color="#ff35f4"/><stop offset=".696" stop-color="#ff1db8"/><stop offset=".957" stop-color="#ff0272"/><stop offset="1" stop-color="#ff006a"/></linearGradient><linearGradient id="i82" gradientUnits="userSpaceOnUse" x1="1195.9" x2="1375.6"><stop offset="0" stop-color="#0060ff"/><stop offset=".273" stop-color="#674dff"/><stop offset=".545" stop-color="#f036ff"/><stop offset=".591" stop-color="#ff2ff4"/><stop offset=".727" stop-color="#ff19b8"/><stop offset=".909" stop-color="#ff0684"/><stop offset="1" stop-color="#ff0072"/></linearGradient><linearGradient id="i83" gradientUnits="userSpaceOnUse" x1="1194.9" x2="1368.9"><stop offset="0" stop-color="#005cff"/><stop offset=".273" stop-color="#624aff"/><stop offset=".545" stop-color="#e333ff"/><stop offset=".591" stop-color="#fc2fff"/><stop offset=".727" stop-color="#ff19c3"/><stop offset=".955" stop-color="#ff0283"/><stop offset="1" stop-color="#ff007a"/></linearGradient><linearGradient id="i84" gradientUnits="userSpaceOnUse" x1="1193.9" x2="1362.1"><stop offset="0" stop-color="#0058ff"/><stop offset=".286" stop-color="#6245ff"/><stop offset=".571" stop-color="#e42eff"/><stop offset=".619" stop-color="#fc29ff"/><stop offset=".81" stop-color="#ff0fb3"/><stop offset="1" stop-color="#ff0083"/></linearGradient><linearGradient id="i85" gradientUnits="userSpaceOnUse" x1="1192.8" x2="1355.4"><stop offset="0" stop-color="#0054ff"/><stop offset=".05" stop-color="#0a51ff"/><stop offset=".35" stop-color="#763dff"/><stop offset=".65" stop-color="#fd24ff"/><stop offset=".8" stop-color="#ff10c2"/><stop offset="1" stop-color="#ff008d"/></linearGradient><linearGradient id="i86" gradientUnits="userSpaceOnUse" x1="1191.8" x2="1348.6"><stop offset="0" stop-color="#0050ff"/><stop offset=".05" stop-color="#094dff"/><stop offset=".35" stop-color="#703aff"/><stop offset=".65" stop-color="#ee22ff"/><stop offset=".7" stop-color="#ff1cf8"/><stop offset=".9" stop-color="#ff06b0"/><stop offset="1" stop-color="#ff0097"/></linearGradient><linearGradient id="i87" gradientUnits="userSpaceOnUse" x1="1190.8" x2="1341.9"><stop offset="0" stop-color="#004cff"/><stop offset=".316" stop-color="#5e39ff"/><stop offset=".632" stop-color="#d821ff"/><stop offset=".684" stop-color="#ef1dff"/><stop offset=".737" stop-color="#ff17f7"/><stop offset=".947" stop-color="#ff02af"/><stop offset="1" stop-color="#ff00a2"/></linearGradient><linearGradient id="i88" gradientUnits="userSpaceOnUse" x1="1189.7" x2="1335.1"><stop offset="0" stop-color="#0048ff"/><stop offset=".333" stop-color="#5e35ff"/><stop offset=".667" stop-color="#d91cff"/><stop offset=".722" stop-color="#f118ff"/><stop offset=".778" stop-color="#ff12f5"/><stop offset="1" stop-color="#ff00ae"/></linearGradient><linearGradient id="i89" gradientUnits="userSpaceOnUse" x1="1188.7" x2="1328.4"><stop offset="0" stop-color="#0044ff"/><stop offset=".353" stop-color="#5f30ff"/><stop offset=".706" stop-color="#db18ff"/><stop offset=".765" stop-color="#f313ff"/><stop offset=".824" stop-color="#ff0df3"/><stop offset="1" stop-color="#ff00bb"/></linearGradient><linearGradient id="i90" gradientUnits="userSpaceOnUse" x1="1187.7" x2="1321.6"><stop offset="0" stop-color="#0041ff"/><stop offset=".353" stop-color="#592eff"/><stop offset=".706" stop-color="#cd16ff"/><stop offset=".824" stop-color="#f90dff"/><stop offset="1" stop-color="#ff00c9"/></linearGradient><linearGradient id="i91" gradientUnits="userSpaceOnUse" x1="1186.6" x2="1314.9"><stop offset="0" stop-color="#003dff"/><stop offset=".375" stop-color="#5a2aff"/><stop offset=".75" stop-color="#cf11ff"/><stop offset=".875" stop-color="#fc08ff"/><stop offset="1" stop-color="#ff00d9"/></linearGradient><linearGradient id="i92" gradientUnits="userSpaceOnUse" x1="1185.6" x2="1308.1"><stop offset="0" stop-color="#003aff"/><stop offset=".067" stop-color="#0937ff"/><stop offset=".467" stop-color="#6d22ff"/><stop offset=".867" stop-color="#e708ff"/><stop offset=".933" stop-color="#fe03ff"/><stop offset="1" stop-color="#ff00ea"/></linearGradient><linearGradient id="i93" gradientUnits="userSpaceOnUse" x1="1184.6" x2="1301.4"><stop offset="0" stop-color="#0037ff"/><stop offset=".4" stop-color="#5523ff"/><stop offset=".8" stop-color="#c20cff"/><stop offset="1" stop-color="#ff00fc"/></linearGradient><linearGradient id="i94" gradientUnits="userSpaceOnUse" x1="1183.5" x2="1294.6"><stop offset="0" stop-color="#0033ff"/><stop offset=".429" stop-color="#561fff"/><stop offset=".857" stop-color="#c407ff"/><stop offset="1" stop-color="#ee00ff"/></linearGradient><linearGradient id="i95" gradientUnits="userSpaceOnUse" x1="1182.5" x2="1287.9"><stop offset="0" stop-color="#0030ff"/><stop offset=".462" stop-color="#571cff"/><stop offset=".923" stop-color="#c703ff"/><stop offset="1" stop-color="#dc00ff"/></linearGradient><linearGradient id="i96" gradientUnits="userSpaceOnUse" x1="1181.5" x2="1281.2"><stop offset="0" stop-color="#002dff"/><stop offset=".5" stop-color="#5818ff"/><stop offset="1" stop-color="#ca00ff"/></linearGradient><linearGradient id="i97" gradientUnits="userSpaceOnUse" x1="1180.4" x2="1274.4"><stop offset="0" stop-color="#002aff"/><stop offset=".5" stop-color="#5216ff"/><stop offset="1" stop-color="#ba00ff"/></linearGradient><linearGradient id="i98" gradientUnits="userSpaceOnUse" x1="1179.4" x2="1267.7"><stop offset="0" stop-color="#0027ff"/><stop offset=".545" stop-color="#5312ff"/><stop offset="1" stop-color="#aa00ff"/></linearGradient><linearGradient id="i99" gradientUnits="userSpaceOnUse" x1="1178.4" x2="1260.9"><stop offset="0" stop-color="#0024ff"/><stop offset=".6" stop-color="#550fff"/><stop offset="1" stop-color="#9b00ff"/></linearGradient><linearGradient id="i100" gradientUnits="userSpaceOnUse" x1="1177.3" x2="1254.2"><stop offset="0" stop-color="#0021ff"/><stop offset=".6" stop-color="#4d0dff"/><stop offset="1" stop-color="#8c00ff"/></linearGradient><linearGradient id="i101" gradientUnits="userSpaceOnUse" x1="1176.3" x2="1247.4"><stop offset="0" stop-color="#001eff"/><stop offset=".667" stop-color="#4f0aff"/><stop offset="1" stop-color="#7f00ff"/></linearGradient><linearGradient id="i102" gradientUnits="userSpaceOnUse" x1="1175.3" x2="1240.7"><stop offset="0" stop-color="#001bff"/><stop offset=".75" stop-color="#5106ff"/><stop offset="1" stop-color="#7200ff"/></linearGradient><linearGradient id="i103" gradientUnits="userSpaceOnUse" x1="1174.3" x2="1233.9"><stop offset="0" stop-color="#0019ff"/><stop offset=".857" stop-color="#5403ff"/><stop offset="1" stop-color="#6500ff"/></linearGradient><linearGradient id="i104" gradientUnits="userSpaceOnUse" x1="1173.2" x2="1227.2"><stop offset="0" stop-color="#0016ff"/><stop offset=".857" stop-color="#4a02ff"/><stop offset="1" stop-color="#5900ff"/></linearGradient><linearGradient id="i105" gradientUnits="userSpaceOnUse" x1="1172.2" x2="1220.4"><stop offset="0" stop-color="#0013ff"/><stop offset="1" stop-color="#4d00ff"/></linearGradient><linearGradient id="i106" gradientUnits="userSpaceOnUse" x1="1171.2" x2="1213.7"><stop offset="0" stop-color="#0011ff"/><stop offset="1" stop-color="#4200ff"/></linearGradient><linearGradient id="i107" gradientUnits="userSpaceOnUse" x1="1170.1" x2="1206.9"><stop offset="0" stop-color="#000eff"/><stop offset="1" stop-color="#3700ff"/></linearGradient><linearGradient id="i108" gradientUnits="userSpaceOnUse" x1="1169.1" x2="1200.2"><stop offset="0" stop-color="#000cff"/><stop offset="1" stop-color="#2d00ff"/></linearGradient><linearGradient id="i109" gradientUnits="userSpaceOnUse" x1="1168.1" x2="1193.4"><stop offset="0" stop-color="#0009ff"/><stop offset="1" stop-color="#2300ff"/></linearGradient><linearGradient id="i110" gradientUnits="userSpaceOnUse" x1="1167.0" x2="1186.7"><stop offset="0" stop-color="#0007ff"/><stop offset="1" stop-color="#1a00ff"/></linearGradient><linearGradient id="i111" gradientUnits="userSpaceOnUse" x1="1166.0" x2="1180.0"><stop offset="0" stop-color="#0004ff"/><stop offset="1" stop-color="#1100ff"/></linearGradient><linearGradient id="i112" gradientUnits="userSpaceOnUse" x1="1165.0" x2="1173.2"><stop offset="0" stop-color="#0002ff"/><stop offset="1" stop-color="#0800ff"/></linearGradient><clipPath id="cl"><path d="M1186.3,579.8 L1186.3,579.7 L1186.2,579.7 L1186.2,579.7 L1186.2,579.7 L1186.2,579.8 L1186.2,579.8 L1186.1,579.8 L1186.1,579.8 L1186.1,579.8 L1186.0,579.8 L1186.0,579.8 L1186.0,579.8 L1186.0,579.8 L1185.9,579.8 L1185.9,579.8 L1185.8,579.8 L1185.8,579.8 L1185.8,579.9 L1185.7,579.9 L1185.7,579.9 L1185.6,579.9 L1185.6,579.9 L1185.5,579.9 L1185.5,579.9 L1185.4,579.9 L1185.4,579.9 L1185.3,579.9 L1185.2,579.9 L1185.2,579.9 L1185.1,579.9 L1185.0,579.9 L1185.0,579.9 L1184.9,579.9 L1184.8,579.9 L1184.7,579.9 L1184.6,579.9 L1184.5,579.8 L1184.4,579.8 L1184.3,579.7 L1184.2,579.7 L1184.0,579.6 L1183.9,579.5 L1183.7,579.5 L1183.5,579.4 L1183.3,579.2 L1183.1,579.1 L1182.9,579.0 L1182.7,578.9 L1182.5,578.7 L1182.2,578.6 L1182.0,578.4 L1181.7,578.2 L1181.4,578.0 L1181.0,577.7 L1180.7,577.5 L1180.3,577.2 L1180.0,576.9 L1179.6,576.7 L1179.2,576.4 L1178.7,576.0 L1178.3,575.7 L1177.8,575.4 L1177.3,575.0 L1176.8,574.6 L1176.2,574.2 L1175.5,573.8 L1174.9,573.3 L1174.2,572.8 L1173.4,572.3 L1172.7,571.7 L1171.9,571.2 L1171.1,570.6 L1170.2,570.0 L1169.3,569.3 L1168.3,568.6 L1167.3,567.8 L1166.3,567.0 L1165.2,566.2 L1164.1,565.2 L1162.9,564.2 L1161.7,563.1 L1160.4,562.0 L1159.1,560.8 L1157.8,559.4 L1156.3,557.8 L1154.7,555.9 L1153.0,553.9 L1151.3,551.7 L1149.4,549.3 L1147.4,546.5 L1145.4,543.4 L1143.2,540.2 L1141.0,536.6 L1138.6,532.7 L1136.2,528.2 L1133.6,523.3 L1130.8,518.1 L1128.0,512.4 L1125.0,506.1 L1121.9,499.3 L1118.7,491.9 L1115.2,484.0 L1111.6,475.5 L1108.0,466.3 L1104.4,456.5 L1100.8,445.9 L1097.1,434.6 L1093.5,422.7 L1089.8,410.1 L1086.3,397.0 L1082.7,383.2 L1079.1,368.7 L1075.6,353.6 L1072.3,338.3 L1069.3,322.9 L1066.4,307.3 L1063.7,291.3 L1061.3,275.2 L1059.1,259.3 L1057.4,243.7 L1056.0,228.5 L1054.9,213.3 L1054.2,198.5 L1053.9,184.1 L1054.0,170.4 L1054.7,157.2 L1055.8,144.4 L1057.3,132.2 L1059.3,120.7 L1061.8,110.3 L1064.8,100.7 L1068.3,92.0 L1072.3,84.1 L1076.6,77.2 L1081.2,71.3 L1086.2,66.7 L1091.5,63.1 L1097.1,60.6 L1102.9,58.8 L1108.7,57.6 L1114.7,57.3 L1120.9,57.8 L1127.1,59.0 L1133.4,60.6 L1139.7,62.4 L1146.0,64.4 L1152.4,66.8 L1158.7,69.5 L1165.0,72.3 L1171.2,75.2 L1177.3,78.1 L1183.3,81.0 L1189.2,84.1 L1195.1,87.3 L1200.9,90.5 L1206.7,93.8 L1212.4,97.2 L1218.1,100.6 L1223.7,104.1 L1229.4,107.7 L1235.1,111.3 L1240.7,115.1 L1246.3,118.9 L1251.9,122.7 L1257.5,126.6 L1263.1,130.5 L1268.7,134.5 L1274.2,138.6 L1279.8,142.6 L1285.3,146.8 L1290.9,150.9 L1296.4,155.1 L1302.0,159.3 L1307.5,163.5 L1313.1,167.8 L1318.6,172.1 L1324.2,176.4 L1329.8,180.7 L1335.3,185.1 L1340.9,189.5 L1346.4,193.8 L1352.0,198.2 L1357.5,202.6 L1363.0,207.0 L1368.6,211.5 L1374.1,215.9 L1379.6,220.3 L1385.1,224.7 L1390.6,229.1 L1396.1,233.4 L1401.5,237.8 L1406.9,242.2 L1412.3,246.5 L1417.7,250.9 L1423.0,255.2 L1428.3,259.5 L1433.6,263.7 L1438.9,268.0 L1444.1,272.2 L1449.2,276.3 L1454.3,280.5 L1459.4,284.6 L1464.4,288.6 L1469.4,292.7 L1474.3,296.6 L1479.2,300.5 L1484.0,304.4 L1488.7,308.2 L1493.4,312.0 L1497.9,315.7 L1502.4,319.3 L1506.8,322.9 L1511.1,326.4 L1515.4,329.8 L1519.5,333.1 L1523.4,336.3 L1527.3,339.4 L1531.0,342.4 L1534.6,345.4 L1538.2,348.2 L1541.7,351.0 L1545.1,353.8 L1548.4,356.5 L1551.6,359.0 L1554.7,361.5 L1557.6,363.9 L1560.4,366.2 L1563.2,368.3 L1565.8,370.4 L1568.3,372.5 L1570.7,374.4 L1573.1,376.3 L1575.3,378.1 L1577.4,379.8 L1579.4,381.5 L1581.4,383.1 L1583.2,384.6 L1585.0,386.0 L1586.7,387.4 L1588.3,388.7 L1589.8,389.9 L1591.3,391.1 L1592.7,392.2 L1594.1,393.3 L1595.4,394.3 L1596.6,395.3 L1597.8,396.3 L1598.9,397.2 L1600.0,398.1 L1601.0,398.9 L1602.1,399.8 L1603.0,400.6 L1604.0,401.3 L1604.9,402.1 L1605.8,402.8 L1606.6,403.5 L1607.4,404.1 L1608.2,404.8 L1608.9,405.4 L1609.7,405.9 L1610.3,406.5 L1611.0,407.0 L1611.6,407.5 L1612.2,407.9 L1612.8,408.4 L1613.3,408.8 L1613.7,409.2 L1614.2,409.5 L1614.6,409.9 L1615.1,410.3 L1615.7,410.7 L1616.3,411.3 L1617.0,411.8 L1617.6,412.3 L1618.2,412.8 L1618.8,413.3 L1619.4,413.7 L1619.9,414.2 L1620.4,414.6 L1620.9,414.9 L1621.2,415.2 L1621.4,415.4 L1621.5,415.5 L1621.7,415.6 L1621.9,415.8Z"/></clipPath><clipPath id="ct"><path d="M1548.3,374.4 L1284.1,205.1 L1167.5,543.7 Z"/></clipPath><linearGradient id="n0"><stop offset="0" stop-color="#00ccff"/><stop offset="0.5" stop-color="#00c9ff"/><stop offset="1" stop-color="#28c6ff"/></linearGradient><linearGradient id="n1"><stop offset="0" stop-color="#00caff"/><stop offset="0.5" stop-color="#00c7ff"/><stop offset="1" stop-color="#28c4ff"/></linearGradient><linearGradient id="n2"><stop offset="0" stop-color="#00c8ff"/><stop offset="0.5" stop-color="#00c5ff"/><stop offset="1" stop-color="#29c2ff"/></linearGradient><linearGradient id="n3"><stop offset="0" stop-color="#00c6ff"/><stop offset="0.5" stop-color="#00c3ff"/><stop offset="1" stop-color="#2abfff"/></linearGradient><linearGradient id="n4"><stop offset="0" stop-color="#00c4ff"/><stop offset="0.5" stop-color="#00c1ff"/><stop offset="1" stop-color="#2abdff"/></linearGradient><linearGradient id="n5"><stop offset="0" stop-color="#00c2ff"/><stop offset="0.5" stop-color="#00bfff"/><stop offset="1" stop-color="#2bbbff"/></linearGradient><linearGradient id="n6"><stop offset="0" stop-color="#00c0ff"/><stop offset="0.5" stop-color="#00bdff"/><stop offset="1" stop-color="#2cb9ff"/></linearGradient><linearGradient id="n7"><stop offset="0" stop-color="#00bfff"/><stop offset="0.5" stop-color="#00bbff"/><stop offset="1" stop-color="#2cb7ff"/></linearGradient><linearGradient id="n8"><stop offset="0" stop-color="#00bdff"/><stop offset="0.5" stop-color="#00b9ff"/><stop offset="1" stop-color="#2db5ff"/></linearGradient><linearGradient id="n9"><stop offset="0" stop-color="#00bbff"/><stop offset="0.5" stop-color="#00b7ff"/><stop offset="1" stop-color="#2db3ff"/></linearGradient><linearGradient id="n10"><stop offset="0" stop-color="#00b9ff"/><stop offset="0.5" stop-color="#00b5ff"/><stop offset="1" stop-color="#2eb1ff"/></linearGradient><linearGradient id="n11"><stop offset="0" stop-color="#00b7ff"/><stop offset="0.5" stop-color="#00b3ff"/><stop offset="1" stop-color="#2fafff"/></linearGradient><linearGradient id="n12"><stop offset="0" stop-color="#00b5ff"/><stop offset="0.5" stop-color="#00b2ff"/><stop offset="1" stop-color="#2fadff"/></linearGradient><linearGradient id="n13"><stop offset="0" stop-color="#00b4ff"/><stop offset="0.5" stop-color="#00b0ff"/><stop offset="1" stop-color="#30abff"/></linearGradient><linearGradient id="n14"><stop offset="0" stop-color="#00b2ff"/><stop offset="0.5" stop-color="#00aeff"/><stop offset="1" stop-color="#30a9ff"/></linearGradient><linearGradient id="n15"><stop offset="0" stop-color="#00b0ff"/><stop offset="0.5" stop-color="#00acff"/><stop offset="1" stop-color="#31a7ff"/></linearGradient><linearGradient id="n16"><stop offset="0" stop-color="#00aeff"/><stop offset="0.5" stop-color="#00aaff"/><stop offset="1" stop-color="#31a5ff"/></linearGradient><linearGradient id="n17"><stop offset="0" stop-color="#00adff"/><stop offset="0.5" stop-color="#00a8ff"/><stop offset="1" stop-color="#32a3ff"/></linearGradient><linearGradient id="n18"><stop offset="0" stop-color="#00abff"/><stop offset="0.5" stop-color="#00a6ff"/><stop offset="1" stop-color="#33a2ff"/></linearGradient><linearGradient id="n19"><stop offset="0" stop-color="#00a9ff"/><stop offset="0.5" stop-color="#00a5ff"/><stop offset="1" stop-color="#33a0ff"/></linearGradient><linearGradient id="n20"><stop offset="0" stop-color="#00a7ff"/><stop offset="0.5" stop-color="#01a3ff"/><stop offset="1" stop-color="#349eff"/></linearGradient><linearGradient id="n21"><stop offset="0" stop-color="#00a6ff"/><stop offset="0.5" stop-color="#01a1ff"/><stop offset="1" stop-color="#349cff"/></linearGradient><linearGradient id="n22"><stop offset="0" stop-color="#00a4ff"/><stop offset="0.5" stop-color="#029fff"/><stop offset="1" stop-color="#359aff"/></linearGradient><linearGradient id="n23"><stop offset="0" stop-color="#00a2ff"/><stop offset="0.5" stop-color="#039eff"/><stop offset="1" stop-color="#3598ff"/></linearGradient><linearGradient id="n24"><stop offset="0" stop-color="#00a1ff"/><stop offset="0.5" stop-color="#049cff"/><stop offset="1" stop-color="#3697ff"/></linearGradient><linearGradient id="n25"><stop offset="0" stop-color="#009fff"/><stop offset="0.5" stop-color="#049aff"/><stop offset="1" stop-color="#3695ff"/></linearGradient><linearGradient id="n26"><stop offset="0" stop-color="#009dff"/><stop offset="0.5" stop-color="#0598ff"/><stop offset="1" stop-color="#3793ff"/></linearGradient><linearGradient id="n27"><stop offset="0" stop-color="#009cff"/><stop offset="0.5" stop-color="#0697ff"/><stop offset="1" stop-color="#3791ff"/></linearGradient><linearGradient id="n28"><stop offset="0" stop-color="#009aff"/><stop offset="0.5" stop-color="#0695ff"/><stop offset="1" stop-color="#388fff"/></linearGradient><linearGradient id="n29"><stop offset="0" stop-color="#0099ff"/><stop offset="0.5" stop-color="#0793ff"/><stop offset="1" stop-color="#398eff"/></linearGradient><linearGradient id="n30"><stop offset="0" stop-color="#0097ff"/><stop offset="0.5" stop-color="#0892ff"/><stop offset="1" stop-color="#398cff"/></linearGradient><linearGradient id="n31"><stop offset="0" stop-color="#0095ff"/><stop offset="0.5" stop-color="#0890ff"/><stop offset="1" stop-color="#3a8aff"/></linearGradient><linearGradient id="n32"><stop offset="0" stop-color="#0094ff"/><stop offset="0.5" stop-color="#098eff"/><stop offset="1" stop-color="#3a88ff"/></linearGradient><linearGradient id="n33"><stop offset="0" stop-color="#0092ff"/><stop offset="0.5" stop-color="#098dff"/><stop offset="1" stop-color="#3b87ff"/></linearGradient><linearGradient id="n34"><stop offset="0" stop-color="#0091ff"/><stop offset="0.5" stop-color="#0a8bff"/><stop offset="1" stop-color="#3b85ff"/></linearGradient><linearGradient id="n35"><stop offset="0" stop-color="#008fff"/><stop offset="0.5" stop-color="#0b89ff"/><stop offset="1" stop-color="#3c83ff"/></linearGradient><linearGradient id="n36"><stop offset="0" stop-color="#008dff"/><stop offset="0.5" stop-color="#0b88ff"/><stop offset="1" stop-color="#3c82ff"/></linearGradient><linearGradient id="n37"><stop offset="0" stop-color="#008cff"/><stop offset="0.5" stop-color="#0c86ff"/><stop offset="1" stop-color="#3d80ff"/></linearGradient><linearGradient id="n38"><stop offset="0" stop-color="#008aff"/><stop offset="0.5" stop-color="#0d85ff"/><stop offset="1" stop-color="#3d7eff"/></linearGradient><linearGradient id="insL" x1="0" y1="0" x2="0" y2="1"><stop offset="0" stop-color="#007b99"/><stop offset="1" stop-color="#005199"/></linearGradient><linearGradient id="b0"><stop offset="0" stop-color="#5caec1"/><stop offset=".3" stop-color="#0885a1"/><stop offset=".66" stop-color="#0885a1"/><stop offset="1" stop-color="#043b47"/></linearGradient><linearGradient id="b1"><stop offset="0" stop-color="#d28fb9"/><stop offset=".3" stop-color="#bb5695"/><stop offset=".66" stop-color="#bb5695"/><stop offset="1" stop-color="#522642"/></linearGradient><linearGradient id="b2"><stop offset="0" stop-color="#f4df71"/><stop offset=".3" stop-color="#eece28"/><stop offset=".66" stop-color="#eece28"/><stop offset="1" stop-color="#695b12"/></linearGradient><linearGradient id="b3"><stop offset="0" stop-color="#ca7a7e"/><stop offset=".3" stop-color="#af363c"/><stop offset=".66" stop-color="#af363c"/><stop offset="1" stop-color="#4d181a"/></linearGradient><linearGradient id="b4"><stop offset="0" stop-color="#85b887"/><stop offset=".3" stop-color="#469449"/><stop offset=".66" stop-color="#469449"/><stop offset="1" stop-color="#1f4120"/></linearGradient><linearGradient id="b5"><stop offset="0" stop-color="#787dba"/><stop offset=".3" stop-color="#323a96"/><stop offset=".66" stop-color="#323a96"/><stop offset="1" stop-color="#161a42"/></linearGradient><linearGradient id="b6"><stop offset="0" stop-color="#eec478"/><stop offset=".3" stop-color="#e6a532"/><stop offset=".66" stop-color="#e6a532"/><stop offset="1" stop-color="#654916"/></linearGradient><linearGradient id="b7"><stop offset="0" stop-color="#c4d785"/><stop offset=".3" stop-color="#a5c346"/><stop offset=".66" stop-color="#a5c346"/><stop offset="1" stop-color="#49561f"/></linearGradient><linearGradient id="b8"><stop offset="0" stop-color="#957e9e"/><stop offset=".3" stop-color="#5e3c6c"/><stop offset=".66" stop-color="#5e3c6c"/><stop offset="1" stop-color="#291a30"/></linearGradient><linearGradient id="b9"><stop offset="0" stop-color="#d69298"/><stop offset=".3" stop-color="#c15a63"/><stop offset=".66" stop-color="#c15a63"/><stop offset="1" stop-color="#55282c"/></linearGradient><linearGradient id="b10"><stop offset="0" stop-color="#8693c4"/><stop offset=".3" stop-color="#485ba6"/><stop offset=".66" stop-color="#485ba6"/><stop offset="1" stop-color="#202849"/></linearGradient><linearGradient id="b11"><stop offset="0" stop-color="#e8aa74"/><stop offset=".3" stop-color="#dc7e2c"/><stop offset=".66" stop-color="#dc7e2c"/><stop offset="1" stop-color="#613713"/></linearGradient><linearGradient id="b12"><stop offset="0" stop-color="#9bd3c7"/><stop offset=".3" stop-color="#67bdaa"/><stop offset=".66" stop-color="#67bdaa"/><stop offset="1" stop-color="#2d534b"/></linearGradient><linearGradient id="b13"><stop offset="0" stop-color="#aeabcc"/><stop offset=".3" stop-color="#8580b1"/><stop offset=".66" stop-color="#8580b1"/><stop offset="1" stop-color="#3b384e"/></linearGradient><linearGradient id="b14"><stop offset="0" stop-color="#909e83"/><stop offset=".3" stop-color="#576c43"/><stop offset=".66" stop-color="#576c43"/><stop offset="1" stop-color="#26301d"/></linearGradient><linearGradient id="b15"><stop offset="0" stop-color="#97a7be"/><stop offset=".3" stop-color="#627a9d"/><stop offset=".66" stop-color="#627a9d"/><stop offset="1" stop-color="#2b3645"/></linearGradient><linearGradient id="b16"><stop offset="0" stop-color="#d7baac"/><stop offset=".3" stop-color="#c29682"/><stop offset=".66" stop-color="#c29682"/><stop offset="1" stop-color="#554239"/></linearGradient><linearGradient id="b17"><stop offset="0" stop-color="#a38d84"/><stop offset=".3" stop-color="#735244"/><stop offset=".66" stop-color="#735244"/><stop offset="1" stop-color="#33241e"/></linearGradient><linearGradient id="b18"><stop offset="0" stop-color="#555"/><stop offset=".35" stop-color="#000"/><stop offset="1" stop-color="#111"/></linearGradient><linearGradient id="b19"><stop offset="0" stop-color="#bfbfbf"/><stop offset=".3" stop-color="#9e9e9e"/><stop offset=".66" stop-color="#9e9e9e"/><stop offset="1" stop-color="#464646"/></linearGradient><linearGradient id="b20"><stop offset="0" stop-color="#d2d2d2"/><stop offset=".3" stop-color="#bbbbbb"/><stop offset=".66" stop-color="#bbbbbb"/><stop offset="1" stop-color="#525252"/></linearGradient><linearGradient id="b21"><stop offset="0" stop-color="#e0e0e0"/><stop offset=".3" stop-color="#d0d0d0"/><stop offset=".66" stop-color="#d0d0d0"/><stop offset="1" stop-color="#5c5c5c"/></linearGradient><linearGradient id="b22"><stop offset="0" stop-color="#eeeeee"/><stop offset=".3" stop-color="#e6e6e6"/><stop offset=".66" stop-color="#e6e6e6"/><stop offset="1" stop-color="#656565"/></linearGradient><linearGradient id="b23"><stop offset="0" stop-color="#fdfdfd"/><stop offset=".3" stop-color="#fcfcfc"/><stop offset=".66" stop-color="#fcfcfc"/><stop offset="1" stop-color="#6f6f6f"/></linearGradient><linearGradient id="dbar" x1="0" y1="0" x2="0" y2="1"><stop offset="0" stop-color="#5ab4cc"/><stop offset=".18" stop-color="#0886a4"/><stop offset=".56" stop-color="#0a84a2"/><stop offset="1" stop-color="#003a4e"/></linearGradient><clipPath id="csw"><rect x="411" y="421" width="589" height="197"/></clipPath></defs></svg><div class="t" id="h1" style="left:20.5px;top:26.3px;font-size:43px;transform:scaleX(0.9187)">ColorChecker</div><div class="t" id="avg" style="left:86.5px;top:96px;font-size:31.5px;transform:scaleX(0.9604)">Avg dE2000: 3,91</div><div class="t" id="max" style="left:83px;top:140px;font-size:31.5px;transform:scaleX(0.9738)">Max dE2000: 7,74</div><div class="t" id="cur" style="left:11px;top:659px;font-size:31.5px;transform:scaleX(0.9778)">Current Reading</div><div class="t" id="rx" style="left:11px;top:709.5px;font-size:27px;transform:scaleX(0.9496)">x: 0,2241</div><div class="t" id="ry" style="left:11px;top:753.5px;font-size:27px;transform:scaleX(0.9586)">y: 0,2736</div><div class="t" id="rfl" style="left:11px;top:798.5px;font-size:27px;transform:scaleX(0.9533)">fL: 13,037</div><div class="t" id="rcd" style="left:11px;top:843px;font-size:27px;transform:scaleX(0.9964)">cd/m²: 44,668</div><table class="dt" style="width:1240px"><colgroup><col style="width:91.7px"><col style="width:41.1px"><col style="width:42.7px"><col style="width:42.7px"><col style="width:42.2px"><col style="width:42.6px"><col style="width:31.1px"><col style="width:50.2px"><col style="width:51.7px"><col style="width:45.7px"><col style="width:39.8px"><col style="width:62.4px"><col style="width:66.2px"><col style="width:40.8px"><col style="width:68.8px"><col style="width:74.4px"><col style="width:36.7px"><col style="width:68.3px"><col style="width:74.4px"><col style="width:34.7px"><col style="width:35.2px"><col style="width:35.1px"><col style="width:41.3px"><col style="width:48.4px"><col style="width:31.8px"></colgroup><thead><tr class="h"><th class="rh"></th><th><span id="th1" style="transform:scaleX(0.7691)">White</span></th><th><span id="th2" style="transform:scaleX(0.6953)">Gray 80</span></th><th><span id="th3" style="transform:scaleX(0.6953)">Gray 65</span></th><th><span id="th4" style="transform:scaleX(0.6953)">Gray 50</span></th><th><span id="th5" style="transform:scaleX(0.7010)">Gray 35</span></th><th><span id="th6" style="transform:scaleX(0.7033)">Black</span></th><th><span id="th7" style="transform:scaleX(0.6987)">Dark Skin</span></th><th><span id="th8" style="transform:scaleX(0.7052)">Light Skin</span></th><th><span id="th9" style="transform:scaleX(0.6893)">Blue Sky</span></th><th><span id="th10" style="transform:scaleX(0.7018)">Foliage</span></th><th><span id="th11" style="transform:scaleX(0.7280)">Blue Flower</span></th><th><span id="th12" style="transform:scaleX(0.7194)">Bluish Green</span></th><th><span id="th13" style="transform:scaleX(0.7230)">Orange</span></th><th><span id="th14" style="transform:scaleX(0.7291)">Purplish Blue</span></th><th><span id="th15" style="transform:scaleX(0.7385)">Moderate Red</span></th><th><span id="th16" style="transform:scaleX(0.7371)">Purple</span></th><th><span id="th17" style="transform:scaleX(0.7268)">Yellow Green</span></th><th><span id="th18" style="transform:scaleX(0.7256)">Orange Yellow</span></th><th><span id="th19" style="transform:scaleX(0.7324)">Blue</span></th><th><span id="th20" style="transform:scaleX(0.7297)">Green</span></th><th><span id="th21" style="transform:scaleX(0.7057)">Red</span></th><th><span id="th22" style="transform:scaleX(0.7345)">Yellow</span></th><th><span id="th23" style="transform:scaleX(0.7447)">Magenta</span></th><th><span id="th24" style="transform:scaleX(0.6719)">Cyan</span></th></tr></thead><tbody><tr class="d"><td class="rh"><span id="r0" style="transform:scaleX(0.6235)">x: CIE31</span></td><td><span>0,31</span></td><td><span>0,31</span></td><td><span>0,31</span></td><td><span>0,31</span></td><td><span>0,31</span></td><td><span>0,24</span></td><td><span>0,40</span></td><td><span>0,36</span></td><td><span>0,25</span></td><td><span>0,35</span></td><td><span>0,27</span></td><td><span>0,28</span></td><td><span>0,48</span></td><td><span>0,22</span></td><td><span>0,42</span></td><td><span>0,27</span></td><td><span>0,39</span></td><td><span>0,46</span></td><td><span>0,19</span></td><td><span>0,33</span></td><td><span>0,49</span></td><td><span>0,44</span></td><td><span>0,34</span></td><td><span>0,22</span></td></tr><tr class="l"><td class="rh"><span id="r1" style="transform:scaleX(0.6235)">y: CIE31</span></td><td><span>0,32</span></td><td><span>0,33</span></td><td><span>0,33</span></td><td><span>0,33</span></td><td><span>0,33</span></td><td><span>0,24</span></td><td><span>0,36</span></td><td><span>0,35</span></td><td><span>0,28</span></td><td><span>0,42</span></td><td><span>0,27</span></td><td><span>0,35</span></td><td><span>0,41</span></td><td><span>0,21</span></td><td><span>0,32</span></td><td><span>0,23</span></td><td><span>0,48</span></td><td><span>0,44</span></td><td><span>0,17</span></td><td><span>0,48</span></td><td><span>0,33</span></td><td><span>0,46</span></td><td><span>0,26</span></td><td><span>0,27</span></td></tr><tr class="d2"><td class="rh"><span id="r2" style="transform:scaleX(0.5745)">Y</span></td><td><span>230,01</span></td><td><span>180,22</span></td><td><span>144,64</span></td><td><span>110,94</span></td><td><span>79,60</span></td><td><span>0,17</span></td><td><span>20,60</span></td><td><span>79,76</span></td><td><span>46,07</span></td><td><span>26,32</span></td><td><span>59,98</span></td><td><span>90,81</span></td><td><span>62,13</span></td><td><span>30,05</span></td><td><span>41,75</span></td><td><span>15,18</span></td><td><span>86,63</span></td><td><span>90,86</span></td><td><span>17,15</span></td><td><span>46,48</span></td><td><span>24,93</span></td><td><span>121,44</span></td><td><span>45,96</span></td><td><span>44,67</span></td></tr><tr class="l"><td class="rh"><span id="r3" style="transform:scaleX(0.6505)">Target x:CIE31</span></td><td><span>0,31</span></td><td><span>0,31</span></td><td><span>0,31</span></td><td><span>0,31</span></td><td><span>0,31</span></td><td><span>0,31</span></td><td><span>0,40</span></td><td><span>0,38</span></td><td><span>0,25</span></td><td><span>0,34</span></td><td><span>0,27</span></td><td><span>0,26</span></td><td><span>0,51</span></td><td><span>0,22</span></td><td><span>0,46</span></td><td><span>0,29</span></td><td><span>0,38</span></td><td><span>0,47</span></td><td><span>0,19</span></td><td><span>0,31</span></td><td><span>0,54</span></td><td><span>0,45</span></td><td><span>0,37</span></td><td><span>0,21</span></td></tr><tr class="d"><td class="rh"><span id="r4" style="transform:scaleX(0.6505)">Target y:CIE31</span></td><td><span>0,33</span></td><td><span>0,33</span></td><td><span>0,33</span></td><td><span>0,33</span></td><td><span>0,33</span></td><td><span>0,33</span></td><td><span>0,36</span></td><td><span>0,36</span></td><td><span>0,27</span></td><td><span>0,43</span></td><td><span>0,25</span></td><td><span>0,36</span></td><td><span>0,41</span></td><td><span>0,19</span></td><td><span>0,31</span></td><td><span>0,22</span></td><td><span>0,49</span></td><td><span>0,44</span></td><td><span>0,14</span></td><td><span>0,49</span></td><td><span>0,32</span></td><td><span>0,47</span></td><td><span>0,25</span></td><td><span>0,27</span></td></tr><tr class="l"><td class="rh"><span id="r5" style="transform:scaleX(0.6743)">Target Y</span></td><td><span>230,01</span></td><td><span>182,01</span></td><td><span>146,65</span></td><td><span>112,94</span></td><td><span>78,64</span></td><td><span>0,00</span></td><td><span>23,17</span></td><td><span>80,26</span></td><td><span>43,01</span></td><td><span>29,98</span></td><td><span>53,64</span></td><td><span>96,31</span></td><td><span>65,20</span></td><td><span>27,04</span></td><td><span>42,96</span></td><td><span>15,35</span></td><td><span>98,35</span></td><td><span>97,78</span></td><td><span>14,36</span></td><td><span>52,84</span></td><td><span>26,82</span></td><td><span>135,62</span></td><td><span>43,30</span></td><td><span>44,66</span></td></tr><tr class="d2"><td class="rh"><span id="r6" style="transform:scaleX(0.6667)">ΔE 2000</span></td><td><span>2,55</span></td><td><span>1,59</span></td><td><span>1,29</span></td><td><span>1,13</span></td><td><span>0,93</span></td><td><span>1,14</span></td><td><span>2,10</span></td><td><span>4,19</span></td><td><span>2,90</span></td><td><span>3,41</span></td><td><span>5,78</span></td><td><span>5,34</span></td><td><span>4,65</span></td><td><span>5,67</span></td><td><span>4,82</span></td><td><span>4,68</span></td><td><span>5,40</span></td><td><span>3,25</span></td><td><span>7,74</span></td><td><span>5,46</span></td><td><span>4,51</span></td><td><span>3,48</span></td><td><span>6,03</span></td><td><span>2,97</span></td></tr></tbody></table></div></body></html>
